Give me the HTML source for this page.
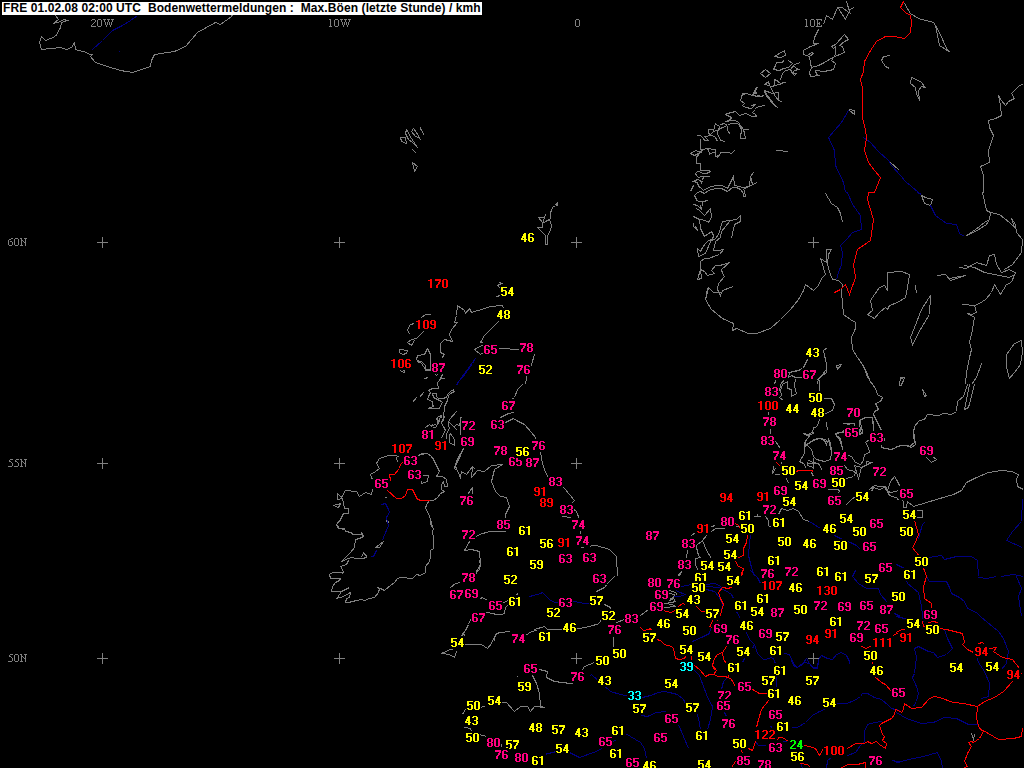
<!DOCTYPE html>
<html><head><meta charset="utf-8"><style>
html,body{margin:0;padding:0;background:#000;width:1024px;height:768px;overflow:hidden;position:relative}
.title{position:absolute;left:2px;top:2px;width:480px;height:13px;background:#fff;color:#000;font-family:"Liberation Sans",sans-serif;font-weight:bold;font-size:12px;letter-spacing:0.09px;line-height:13px;white-space:pre;padding-left:1px;box-sizing:border-box}
.lab{position:absolute;color:#808080;font-family:"Liberation Serif",serif;font-size:11px;line-height:12px;white-space:pre}
</style></head><body>
<svg width="1024" height="768" viewBox="0 0 1024 768" style="position:absolute;left:0;top:0" shape-rendering="crispEdges"><path fill="#808080" d="M97 242h11v1h-11z M102 237h1v11h-1z M97 463h11v1h-11z M102 458h1v11h-1z M97 658h11v1h-11z M102 653h1v11h-1z M334 242h11v1h-11z M339 237h1v11h-1z M334 463h11v1h-11z M339 458h1v11h-1z M334 658h11v1h-11z M339 653h1v11h-1z M571 242h11v1h-11z M576 237h1v11h-1z M571 463h11v1h-11z M576 458h1v11h-1z M571 658h11v1h-11z M576 653h1v11h-1z M808 242h11v1h-11z M813 237h1v11h-1z M808 463h11v1h-11z M813 458h1v11h-1z M808 658h11v1h-11z M813 653h1v11h-1z"/><polyline fill="none" stroke="#808080" stroke-width="1" points="55.5,15.5 58.5,19.5 53.5,23.5 60.5,21.5 63.5,19.5 67.5,20.5 61.5,22.5 60.5,27.5 55.5,36.5 45.5,40.5 41.5,36.5 39.5,42.5 41.5,49.5 60.5,47.5 66.5,49.5 71.5,47.5 74.5,42.5 75.5,49.5 86.5,52.5 89.5,54.5 92.5,54.5 90.5,56.5 95.5,62.5 107.5,66.5 120.5,70.5 132.5,72.5 150.5,66.5 151.5,60.5 154.5,54.5 174.5,51.5 185.5,46.5 197.5,32.5 215.5,22.5 220.5,24.5 231.5,16.5 232.5,14.5 237.5,2.5"/><polyline fill="none" stroke="#808080" stroke-width="1" points="400.5,137.5 405.5,137.5 406.5,143.5 401.5,141.5 400.5,137.5"/><polyline fill="none" stroke="#808080" stroke-width="1" points="406.5,129.5 405.5,133.5 408.5,139.5 412.5,142.5 417.5,147.5 411.5,138.5 406.5,129.5"/><polyline fill="none" stroke="#808080" stroke-width="1" points="413.5,128.5 411.5,131.5 415.5,136.5 418.5,137.5 420.5,139.5 416.5,132.5 413.5,128.5"/><polyline fill="none" stroke="#808080" stroke-width="1" points="420.5,126.5 420.5,128.5 424.5,135.5"/><polyline fill="none" stroke="#808080" stroke-width="1" points="412.5,149.5 416.5,153.5"/><polyline fill="none" stroke="#808080" stroke-width="1" points="412.5,162.5 417.5,166.5 414.5,171.5 412.5,162.5"/><polyline fill="none" stroke="#808080" stroke-width="1" points="904.5,3.5 910.5,13.5 918.5,18.5 933.5,22.5 935.5,25.5 939.5,32.5 946.5,48.5 950.5,52.5"/><polyline fill="none" stroke="#808080" stroke-width="1" points="935.5,25.5 939.5,45.5 950.5,52.5"/><polyline fill="none" stroke="#808080" stroke-width="1" points="890.5,55.5 883.5,56.5 881.5,60.5 885.5,66.5 889.5,68.5"/><polyline fill="none" stroke="#808080" stroke-width="1" points="911.5,77.5 910.5,83.5 915.5,87.5 916.5,93.5 919.5,100.5 918.5,90.5 921.5,86.5 925.5,87.5 920.5,81.5 911.5,77.5"/><polyline fill="none" stroke="#808080" stroke-width="1" points="1023.5,83.5 1018.5,86.5 1011.5,93.5 1014.5,98.5 1008.5,101.5 1005.5,105.5 1001.5,100.5 998.5,95.5 1000.5,105.5 1001.5,115.5 995.5,118.5 988.5,120.5 989.5,127.5 993.5,135.5 988.5,150.5 989.5,162.5 980.5,166.5 983.5,175.5 983.5,192.5"/><polyline fill="none" stroke="#808080" stroke-width="1" points="849.5,109.5 854.5,110.5 854.5,114.5 849.5,110.5"/><polyline fill="none" stroke="#808080" stroke-width="1" points="890.5,162.5 899.5,170.5"/><polyline fill="none" stroke="#808080" stroke-width="1" points="776.5,150.5 788.5,151.5"/><polyline fill="none" stroke="#808080" stroke-width="1" points="499.5,282.5 501.5,283.5 497.5,285.5 500.5,288.5"/><polyline fill="none" stroke="#808080" stroke-width="1" points="496.5,296.5 500.5,295.5"/><polyline fill="none" stroke="#808080" stroke-width="1" points="457.5,305.5 464.5,310.5 465.5,313.5 469.5,308.5 471.5,312.5 484.5,308.5 490.5,306.5 502.5,305.5 503.5,308.5"/><polyline fill="none" stroke="#808080" stroke-width="1" points="457.5,305.5 456.5,315.5 454.5,322.5 457.5,322.5 451.5,329.5 449.5,334.5 452.5,341.5 444.5,339.5 440.5,343.5 440.5,352.5 444.5,354.5 441.5,358.5"/><polyline fill="none" stroke="#808080" stroke-width="1" points="498.5,321.5 491.5,328.5 484.5,335.5 480.5,342.5 485.5,343.5 474.5,349.5 480.5,354.5 483.5,352.5"/><polyline fill="none" stroke="#808080" stroke-width="1" points="499.5,348.5 519.5,349.5"/><polyline fill="none" stroke="#808080" stroke-width="1" points="534.5,354.5 531.5,364.5 526.5,377.5 525.5,384.5"/><polyline fill="none" stroke="#808080" stroke-width="1" points="430.5,314.5 425.5,314.5 421.5,317.5 424.5,330.5 416.5,338.5 411.5,339.5 407.5,342.5 411.5,345.5 414.5,340.5"/><polyline fill="none" stroke="#808080" stroke-width="1" points="409.5,334.5 407.5,329.5 410.5,324.5 414.5,323.5"/><polyline fill="none" stroke="#808080" stroke-width="1" points="399.5,349.5 407.5,350.5 406.5,353.5 402.5,354.5 399.5,352.5 399.5,349.5"/><polyline fill="none" stroke="#808080" stroke-width="1" points="427.5,348.5 424.5,354.5 417.5,355.5 416.5,359.5 421.5,363.5 425.5,369.5 430.5,369.5 430.5,354.5 427.5,348.5"/><polyline fill="none" stroke="#808080" stroke-width="1" points="707.5,288.5 705.5,299.5 711.5,309.5 722.5,318.5 733.5,323.5 732.5,330.5 736.5,328.5 748.5,333.5 756.5,333.5 770.5,328.5 780.5,319.5 790.5,309.5 798.5,299.5 803.5,290.5 805.5,284.5 813.5,290.5 818.5,285.5 821.5,278.5 825.5,274.5"/><polyline fill="none" stroke="#808080" stroke-width="1" points="825.5,274.5 822.5,264.5 820.5,258.5 826.5,262.5 826.5,249.5 831.5,249.5 828.5,254.5 827.5,264.5 830.5,274.5 832.5,279.5 838.5,280.5 842.5,284.5"/><polyline fill="none" stroke="#808080" stroke-width="1" points="842.5,284.5 841.5,292.5 842.5,302.5 843.5,314.5 850.5,319.5 855.5,322.5 855.5,328.5 851.5,337.5 852.5,349.5 857.5,357.5 862.5,364.5 867.5,374.5 871.5,384.5"/><polyline fill="none" stroke="#808080" stroke-width="1" points="825.5,193.5 831.5,203.5 837.5,207.5 840.5,213.5 842.5,222.5"/><polyline fill="none" stroke="#808080" stroke-width="1" points="836.5,365.5 841.5,364.5 837.5,369.5 836.5,365.5"/><polyline fill="none" stroke="#808080" stroke-width="1" points="827.5,347.5 823.5,350.5 826.5,364.5 826.5,372.5 818.5,378.5 817.5,384.5"/><polyline fill="none" stroke="#808080" stroke-width="1" points="807.5,359.5 803.5,367.5 800.5,369.5 790.5,372.5 787.5,377.5"/><polyline fill="none" stroke="#808080" stroke-width="1" points="748.5,93.5 742.5,94.5 740.5,100.5 744.5,103.5 742.5,105.5 745.5,107.5 751.5,108.5 755.5,104.5 751.5,105.5"/><polyline fill="none" stroke="#808080" stroke-width="1" points="823.5,24.5 826.5,15.5 832.5,19.5 837.5,7.5 842.5,7.5 848.5,12.5 845.5,19.5 838.5,8.5"/><polyline fill="none" stroke="#808080" stroke-width="1" points="846.5,1.5 850.5,14.5"/><polyline fill="none" stroke="#808080" stroke-width="1" points="849.5,9.5 854.5,7.5"/><polyline fill="none" stroke="#808080" stroke-width="1" points="818.5,29.5 814.5,37.5 813.5,43.5 818.5,43.5 810.5,46.5 803.5,50.5 803.5,54.5 809.5,56.5 813.5,53.5 811.5,52.5 807.5,55.5"/><polyline fill="none" stroke="#808080" stroke-width="1" points="809.5,56.5 810.5,63.5 811.5,67.5 818.5,65.5 824.5,62.5 832.5,57.5 844.5,52.5 842.5,46.5 839.5,45.5 844.5,41.5 848.5,39.5 844.5,34.5 835.5,44.5 831.5,46.5 833.5,48.5 835.5,46.5 835.5,54.5 831.5,60.5 835.5,63.5 833.5,69.5 829.5,70.5 823.5,71.5 815.5,70.5 816.5,74.5 819.5,75.5 810.5,76.5 809.5,72.5 811.5,67.5"/><polyline fill="none" stroke="#808080" stroke-width="1" points="774.5,56.5 784.5,50.5 785.5,55.5 780.5,57.5 774.5,56.5"/><polyline fill="none" stroke="#808080" stroke-width="1" points="740.5,100.5 742.5,93.5 746.5,93.5 752.5,95.5 756.5,87.5 755.5,92.5 751.5,95.5 759.5,96.5 764.5,95.5"/><polyline fill="none" stroke="#808080" stroke-width="1" points="693.5,204.5 697.5,205.5 701.5,209.5 700.5,205.5"/><polyline fill="none" stroke="#808080" stroke-width="1" points="693.5,216.5 699.5,219.5 705.5,220.5 708.5,222.5 711.5,217.5 710.5,208.5 704.5,215.5 699.5,210.5 696.5,208.5"/><polyline fill="none" stroke="#808080" stroke-width="1" points="693.5,222.5 693.5,226.5 697.5,230.5 695.5,226.5"/><polyline fill="none" stroke="#808080" stroke-width="1" points="699.5,219.5 700.5,228.5 704.5,236.5 711.5,231.5 713.5,235.5 712.5,239.5 708.5,240.5 705.5,243.5 702.5,247.5 700.5,251.5 697.5,248.5 698.5,256.5 705.5,253.5 710.5,241.5 715.5,238.5 718.5,234.5 722.5,221.5 729.5,220.5 736.5,219.5 740.5,215.5 740.5,221.5 734.5,224.5 731.5,238.5"/><polyline fill="none" stroke="#808080" stroke-width="1" points="729.5,221.5 721.5,231.5 720.5,237.5 715.5,241.5 713.5,250.5 718.5,250.5 723.5,249.5 719.5,254.5 708.5,258.5 704.5,258.5 700.5,261.5 700.5,269.5 697.5,279.5 701.5,278.5 700.5,269.5 704.5,271.5 707.5,275.5 714.5,273.5 711.5,270.5 715.5,265.5 719.5,265.5 723.5,264.5 729.5,262.5 721.5,269.5 722.5,273.5 724.5,276.5 718.5,283.5 717.5,289.5 720.5,295.5 722.5,290.5 733.5,286.5"/><polyline fill="none" stroke="#808080" stroke-width="1" points="708.5,287.5 705.5,300.5"/><polyline fill="none" stroke="#808080" stroke-width="1" points="708.5,287.5 713.5,292.5 721.5,292.5"/><polyline fill="none" stroke="#808080" stroke-width="1" points="417.5,360.5 418.5,362.5 421.5,361.5 422.5,362.5 425.5,365.5 425.5,370.5 430.5,370.5"/><polyline fill="none" stroke="#808080" stroke-width="1" points="430.5,360.5 430.5,362.5"/><polyline fill="none" stroke="#808080" stroke-width="1" points="400.5,370.5 401.5,371.5 404.5,370.5 404.5,372.5 402.5,372.5"/><polyline fill="none" stroke="#808080" stroke-width="1" points="424.5,378.5 428.5,377.5"/><polyline fill="none" stroke="#808080" stroke-width="1" points="435.5,374.5 436.5,375.5 437.5,374.5"/><polyline fill="none" stroke="#808080" stroke-width="1" points="442.5,374.5 441.5,376.5 440.5,378.5 444.5,378.5"/><polyline fill="none" stroke="#808080" stroke-width="1" points="440.5,378.5 439.5,380.5 437.5,382.5 437.5,385.5 438.5,386.5 438.5,388.5 432.5,388.5 430.5,389.5 428.5,390.5 430.5,392.5 430.5,392.5 428.5,396.5 427.5,399.5 432.5,401.5 432.5,404.5 433.5,406.5 430.5,407.5 428.5,408.5 430.5,408.5 439.5,408.5 440.5,405.5 442.5,402.5 441.5,401.5 437.5,399.5 435.5,398.5 433.5,397.5 432.5,393.5 436.5,393.5 436.5,396.5 438.5,398.5 442.5,398.5 446.5,397.5 447.5,394.5 450.5,391.5 453.5,389.5 453.5,391.5 454.5,391.5 450.5,393.5 448.5,395.5 447.5,400.5 444.5,406.5 444.5,410.5 443.5,413.5 443.5,420.5"/><polyline fill="none" stroke="#808080" stroke-width="1" points="436.5,419.5 438.5,416.5 441.5,415.5 441.5,417.5"/><polyline fill="none" stroke="#808080" stroke-width="1" points="456.5,411.5 453.5,414.5 450.5,418.5"/><polyline fill="none" stroke="#808080" stroke-width="1" points="460.5,417.5 461.5,418.5"/><polyline fill="none" stroke="#808080" stroke-width="1" points="423.5,392.5 419.5,397.5"/><polyline fill="none" stroke="#808080" stroke-width="1" points="416.5,397.5 412.5,402.5"/><polyline fill="none" stroke="#808080" stroke-width="1" points="444.5,410.5 443.5,413.5 444.5,417.5 442.5,419.5 441.5,423.5 443.5,426.5 445.5,430.5 443.5,433.5 441.5,438.5"/><polyline fill="none" stroke="#808080" stroke-width="1" points="440.5,415.5 437.5,417.5 436.5,419.5 438.5,420.5 436.5,423.5 433.5,425.5 432.5,424.5 431.5,426.5 429.5,424.5 425.5,427.5"/><polyline fill="none" stroke="#808080" stroke-width="1" points="440.5,415.5 439.5,420.5 437.5,424.5 435.5,427.5 432.5,427.5"/><polyline fill="none" stroke="#808080" stroke-width="1" points="456.5,411.5 450.5,418.5 448.5,421.5 448.5,424.5 449.5,428.5 446.5,433.5 446.5,438.5"/><polyline fill="none" stroke="#808080" stroke-width="1" points="448.5,421.5 453.5,426.5 457.5,430.5"/><polyline fill="none" stroke="#808080" stroke-width="1" points="453.5,427.5 456.5,424.5 459.5,425.5 460.5,421.5 460.5,417.5 461.5,417.5"/><polyline fill="none" stroke="#808080" stroke-width="1" points="460.5,421.5 460.5,435.5"/><polyline fill="none" stroke="#808080" stroke-width="1" points="450.5,433.5 449.5,435.5 449.5,442.5 454.5,445.5 454.5,439.5 450.5,433.5"/><polyline fill="none" stroke="#808080" stroke-width="1" points="463.5,448.5 459.5,455.5 456.5,461.5 454.5,467.5 455.5,470.5"/><polyline fill="none" stroke="#808080" stroke-width="1" points="418.5,455.5 422.5,453.5 427.5,453.5 431.5,456.5 435.5,463.5 438.5,470.5"/><polyline fill="none" stroke="#808080" stroke-width="1" points="472.5,466.5 475.5,469.5"/><polyline fill="none" stroke="#808080" stroke-width="1" points="522.5,384.5 517.5,389.5 514.5,397.5 506.5,402.5"/><polyline fill="none" stroke="#808080" stroke-width="1" points="500.5,417.5 508.5,413.5 514.5,412.5"/><polyline fill="none" stroke="#808080" stroke-width="1" points="505.5,422.5 513.5,418.5 516.5,420.5 522.5,423.5 524.5,424.5 531.5,432.5 535.5,437.5 540.5,449.5 541.5,459.5 544.5,469.5 547.5,476.5 559.5,482.5 569.5,494.5 574.5,500.5 569.5,506.5 576.5,511.5 579.5,519.5 581.5,527.5 579.5,539.5 581.5,547.5 586.5,546.5 596.5,545.5 609.5,549.5 616.5,556.5 617.5,576.5"/><polyline fill="none" stroke="#808080" stroke-width="1" points="562.5,516.5 571.5,517.5"/><polyline fill="none" stroke="#808080" stroke-width="1" points="464.5,446.5 455.5,466.5 460.5,477.5 461.5,471.5 466.5,474.5 472.5,466.5 471.5,477.5 477.5,470.5 484.5,471.5 491.5,465.5 502.5,464.5 494.5,469.5 491.5,481.5 495.5,491.5 500.5,496.5 506.5,497.5 509.5,506.5 505.5,514.5 506.5,520.5"/><polyline fill="none" stroke="#808080" stroke-width="1" points="511.5,530.5 501.5,531.5 489.5,531.5 479.5,534.5 476.5,536.5"/><polyline fill="none" stroke="#808080" stroke-width="1" points="472.5,536.5 464.5,550.5 471.5,549.5 479.5,551.5 480.5,564.5 476.5,571.5 475.5,576.5"/><polyline fill="none" stroke="#808080" stroke-width="1" points="472.5,487.5 469.5,491.5 467.5,495.5 472.5,494.5 472.5,487.5"/><polyline fill="none" stroke="#808080" stroke-width="1" points="397.5,462.5 396.5,457.5 399.5,455.5"/><polyline fill="none" stroke="#808080" stroke-width="1" points="396.5,455.5 388.5,455.5 379.5,458.5 376.5,463.5 379.5,468.5 375.5,471.5 370.5,474.5 371.5,477.5 372.5,479.5"/><polyline fill="none" stroke="#808080" stroke-width="1" points="372.5,489.5 371.5,494.5 365.5,492.5 359.5,496.5 356.5,491.5 345.5,490.5 341.5,497.5 337.5,493.5 337.5,499.5 342.5,498.5 344.5,508.5 348.5,508.5 348.5,513.5 343.5,513.5 340.5,519.5 336.5,524.5 339.5,528.5 344.5,529.5"/><polyline fill="none" stroke="#808080" stroke-width="1" points="333.5,505.5 340.5,503.5 338.5,507.5 333.5,505.5"/><polyline fill="none" stroke="#808080" stroke-width="1" points="417.5,455.5 426.5,453.5 429.5,454.5 433.5,458.5 436.5,465.5 439.5,471.5 436.5,476.5 442.5,476.5 446.5,479.5 447.5,486.5 444.5,486.5 443.5,481.5 441.5,484.5 441.5,489.5 444.5,491.5 440.5,493.5 437.5,497.5 433.5,500.5 429.5,500.5 426.5,504.5 425.5,508.5 428.5,513.5 430.5,519.5 432.5,526.5 430.5,524.5 430.5,520.5"/><polyline fill="none" stroke="#808080" stroke-width="1" points="422.5,475.5 428.5,475.5 427.5,481.5 421.5,483.5 421.5,480.5"/><polyline fill="none" stroke="#808080" stroke-width="1" points="384.5,497.5 386.5,497.5"/><polyline fill="none" stroke="#808080" stroke-width="1" points="340.5,520.5 336.5,524.5 338.5,528.5 344.5,528.5 345.5,531.5 351.5,532.5 352.5,534.5 362.5,534.5 361.5,532.5 363.5,536.5 359.5,538.5 355.5,539.5 354.5,547.5 350.5,552.5 345.5,557.5 341.5,561.5 348.5,558.5 351.5,557.5 356.5,558.5 361.5,558.5 367.5,557.5"/><polyline fill="none" stroke="#808080" stroke-width="1" points="361.5,557.5 363.5,552.5 367.5,557.5"/><polyline fill="none" stroke="#808080" stroke-width="1" points="348.5,560.5 346.5,564.5 340.5,566.5 343.5,571.5 342.5,573.5 341.5,572.5 332.5,572.5 329.5,574.5 330.5,578.5 340.5,578.5 339.5,580.5 335.5,582.5 332.5,586.5 331.5,591.5 341.5,591.5 349.5,587.5"/><polyline fill="none" stroke="#808080" stroke-width="1" points="341.5,591.5 337.5,597.5 336.5,598.5 343.5,596.5 350.5,592.5 349.5,597.5 346.5,598.5 345.5,602.5 348.5,602.5 356.5,600.5 361.5,599.5 364.5,600.5 369.5,598.5 374.5,597.5 378.5,592.5 379.5,588.5 377.5,587.5 380.5,588.5 384.5,590.5 390.5,585.5 394.5,582.5 397.5,578.5 400.5,577.5 412.5,578.5 416.5,574.5 420.5,575.5 425.5,572.5 425.5,566.5 429.5,561.5 430.5,556.5 430.5,550.5 433.5,548.5 433.5,538.5 432.5,531.5 433.5,528.5 430.5,524.5 430.5,520.5"/><polyline fill="none" stroke="#808080" stroke-width="1" points="375.5,547.5 383.5,541.5 379.5,547.5 375.5,547.5"/><polyline fill="none" stroke="#808080" stroke-width="1" points="386.5,520.5 387.5,522.5 389.5,521.5"/><polyline fill="none" stroke="#808080" stroke-width="1" points="479.5,560.5 480.5,564.5 479.5,569.5 475.5,573.5"/><polyline fill="none" stroke="#808080" stroke-width="1" points="460.5,582.5 455.5,583.5 450.5,587.5"/><polyline fill="none" stroke="#808080" stroke-width="1" points="464.5,594.5 465.5,594.5"/><polyline fill="none" stroke="#808080" stroke-width="1" points="480.5,598.5 482.5,597.5 487.5,600.5"/><polyline fill="none" stroke="#808080" stroke-width="1" points="503.5,602.5 508.5,600.5"/><polyline fill="none" stroke="#808080" stroke-width="1" points="486.5,612.5 492.5,613.5 496.5,614.5 501.5,614.5 504.5,613.5 505.5,607.5 508.5,604.5"/><polyline fill="none" stroke="#808080" stroke-width="1" points="516.5,594.5 518.5,593.5"/><polyline fill="none" stroke="#808080" stroke-width="1" points="470.5,619.5 468.5,624.5 465.5,630.5 461.5,635.5 464.5,634.5 464.5,644.5 481.5,644.5 487.5,648.5 491.5,643.5 494.5,636.5 494.5,640.5 495.5,634.5 499.5,632.5 510.5,631.5"/><polyline fill="none" stroke="#808080" stroke-width="1" points="525.5,635.5 531.5,631.5 537.5,630.5"/><polyline fill="none" stroke="#808080" stroke-width="1" points="441.5,653.5 450.5,649.5 462.5,646.5"/><polyline fill="none" stroke="#808080" stroke-width="1" points="441.5,653.5 449.5,654.5 454.5,657.5 456.5,651.5"/><polyline fill="none" stroke="#808080" stroke-width="1" points="534.5,629.5 544.5,626.5 547.5,629.5 561.5,629.5 579.5,628.5 589.5,626.5 599.5,623.5 601.5,618.5 604.5,613.5 609.5,611.5 610.5,607.5 604.5,604.5 594.5,603.5"/><polyline fill="none" stroke="#808080" stroke-width="1" points="596.5,591.5 604.5,587.5 607.5,583.5 612.5,578.5 614.5,576.5"/><polyline fill="none" stroke="#808080" stroke-width="1" points="616.5,622.5 624.5,619.5"/><polyline fill="none" stroke="#808080" stroke-width="1" points="613.5,636.5 613.5,648.5"/><polyline fill="none" stroke="#808080" stroke-width="1" points="594.5,662.5 584.5,666.5 581.5,671.5"/><polyline fill="none" stroke="#808080" stroke-width="1" points="539.5,669.5 547.5,671.5 546.5,677.5 554.5,681.5 570.5,683.5 574.5,682.5 581.5,674.5"/><polyline fill="none" stroke="#808080" stroke-width="1" points="532.5,675.5 536.5,683.5 539.5,693.5 540.5,706.5 544.5,707.5 534.5,706.5 530.5,711.5 527.5,706.5 520.5,706.5 514.5,711.5 506.5,702.5 499.5,702.5"/><polyline fill="none" stroke="#808080" stroke-width="1" points="485.5,706.5 465.5,709.5 462.5,714.5"/><polyline fill="none" stroke="#808080" stroke-width="1" points="516.5,676.5 517.5,676.5"/><polyline fill="none" stroke="#808080" stroke-width="1" points="464.5,727.5 470.5,728.5 471.5,731.5 479.5,734.5 486.5,736.5"/><polyline fill="none" stroke="#808080" stroke-width="1" points="499.5,741.5 501.5,744.5 500.5,748.5"/><polyline fill="none" stroke="#808080" stroke-width="1" points="788.5,372.5 793.5,371.5 800.5,370.5"/><polyline fill="none" stroke="#808080" stroke-width="1" points="788.5,377.5 791.5,375.5 795.5,377.5 799.5,377.5 801.5,377.5"/><polyline fill="none" stroke="#808080" stroke-width="1" points="795.5,379.5 794.5,385.5 796.5,393.5 791.5,396.5 791.5,389.5 787.5,388.5 787.5,381.5 782.5,384.5 780.5,390.5 781.5,395.5 779.5,397.5 783.5,400.5"/><polyline fill="none" stroke="#808080" stroke-width="1" points="775.5,380.5 774.5,384.5"/><polyline fill="none" stroke="#808080" stroke-width="1" points="784.5,379.5 780.5,384.5 779.5,391.5"/><polyline fill="none" stroke="#808080" stroke-width="1" points="825.5,370.5 819.5,378.5 817.5,379.5 819.5,380.5 819.5,390.5"/><polyline fill="none" stroke="#808080" stroke-width="1" points="823.5,398.5 829.5,398.5 831.5,398.5 834.5,404.5 832.5,410.5 825.5,413.5"/><polyline fill="none" stroke="#808080" stroke-width="1" points="768.5,411.5 768.5,414.5"/><polyline fill="none" stroke="#808080" stroke-width="1" points="770.5,428.5 770.5,433.5"/><polyline fill="none" stroke="#808080" stroke-width="1" points="775.5,441.5 780.5,448.5"/><polyline fill="none" stroke="#808080" stroke-width="1" points="819.5,419.5 817.5,425.5 815.5,427.5 813.5,427.5 812.5,432.5 807.5,434.5 803.5,433.5 809.5,436.5 806.5,439.5 804.5,442.5 804.5,450.5"/><polyline fill="none" stroke="#808080" stroke-width="1" points="826.5,422.5 827.5,430.5"/><polyline fill="none" stroke="#808080" stroke-width="1" points="806.5,445.5 813.5,439.5 819.5,438.5 825.5,439.5 827.5,442.5 828.5,439.5 830.5,443.5 831.5,450.5"/><polyline fill="none" stroke="#808080" stroke-width="1" points="843.5,423.5 850.5,424.5"/><polyline fill="none" stroke="#808080" stroke-width="1" points="844.5,432.5 839.5,432.5 835.5,433.5 836.5,436.5 839.5,438.5 841.5,442.5 842.5,450.5"/><polyline fill="none" stroke="#808080" stroke-width="1" points="803.5,433.5 807.5,435.5 813.5,433.5 812.5,430.5"/><polyline fill="none" stroke="#808080" stroke-width="1" points="809.5,435.5 805.5,441.5 804.5,453.5 799.5,461.5 803.5,463.5 806.5,468.5"/><polyline fill="none" stroke="#808080" stroke-width="1" points="806.5,444.5 813.5,440.5 819.5,438.5 824.5,440.5 826.5,444.5 828.5,439.5 831.5,452.5 830.5,459.5 824.5,461.5 816.5,459.5 813.5,456.5 811.5,449.5 806.5,444.5"/><polyline fill="none" stroke="#808080" stroke-width="1" points="808.5,460.5 813.5,462.5 818.5,463.5 822.5,470.5"/><polyline fill="none" stroke="#808080" stroke-width="1" points="807.5,461.5 807.5,465.5 813.5,467.5 813.5,463.5"/><polyline fill="none" stroke="#808080" stroke-width="1" points="811.5,472.5 813.5,476.5"/><polyline fill="none" stroke="#808080" stroke-width="1" points="781.5,461.5 781.5,464.5"/><polyline fill="none" stroke="#808080" stroke-width="1" points="773.5,466.5 772.5,473.5 775.5,468.5"/><polyline fill="none" stroke="#808080" stroke-width="1" points="774.5,474.5 779.5,474.5"/><polyline fill="none" stroke="#808080" stroke-width="1" points="786.5,478.5 788.5,483.5"/><polyline fill="none" stroke="#808080" stroke-width="1" points="835.5,433.5 842.5,432.5 843.5,430.5"/><polyline fill="none" stroke="#808080" stroke-width="1" points="835.5,433.5 839.5,439.5 842.5,447.5"/><polyline fill="none" stroke="#808080" stroke-width="1" points="827.5,489.5 838.5,489.5 839.5,492.5"/><polyline fill="none" stroke="#808080" stroke-width="1" points="691.5,535.5 695.5,532.5"/><polyline fill="none" stroke="#808080" stroke-width="1" points="711.5,526.5 715.5,525.5"/><polyline fill="none" stroke="#808080" stroke-width="1" points="711.5,531.5 715.5,528.5 722.5,528.5 726.5,527.5"/><polyline fill="none" stroke="#808080" stroke-width="1" points="706.5,535.5 702.5,540.5 696.5,545.5 696.5,547.5 698.5,555.5 700.5,557.5 695.5,558.5 695.5,565.5 698.5,570.5"/><polyline fill="none" stroke="#808080" stroke-width="1" points="702.5,540.5 706.5,550.5 711.5,558.5"/><polyline fill="none" stroke="#808080" stroke-width="1" points="687.5,550.5 686.5,558.5"/><polyline fill="none" stroke="#808080" stroke-width="1" points="681.5,571.5 679.5,576.5"/><polyline fill="none" stroke="#808080" stroke-width="1" points="737.5,520.5 738.5,520.5"/><polyline fill="none" stroke="#808080" stroke-width="1" points="735.5,526.5 738.5,526.5"/><polyline fill="none" stroke="#808080" stroke-width="1" points="753.5,516.5 757.5,516.5 760.5,516.5"/><polyline fill="none" stroke="#808080" stroke-width="1" points="757.5,513.5 757.5,516.5"/><polyline fill="none" stroke="#808080" stroke-width="1" points="922.5,389.5 924.5,396.5 926.5,395.5 922.5,389.5"/><polyline fill="none" stroke="#808080" stroke-width="1" points="967.5,384.5 963.5,396.5 957.5,401.5 956.5,411.5 951.5,414.5 943.5,413.5 938.5,415.5 927.5,414.5 924.5,419.5 919.5,420.5 914.5,426.5 913.5,434.5 914.5,442.5 909.5,446.5 903.5,445.5 896.5,446.5"/><polyline fill="none" stroke="#808080" stroke-width="1" points="969.5,384.5 964.5,409.5 968.5,407.5 974.5,384.5"/><polyline fill="none" stroke="#808080" stroke-width="1" points="926.5,457.5 931.5,462.5 936.5,459.5 932.5,456.5"/><polyline fill="none" stroke="#808080" stroke-width="1" points="896.5,479.5 899.5,485.5"/><polyline fill="none" stroke="#808080" stroke-width="1" points="896.5,499.5 901.5,499.5 903.5,501.5 903.5,507.5 906.5,507.5 907.5,501.5 913.5,506.5 936.5,499.5 953.5,494.5 961.5,490.5 966.5,482.5 976.5,477.5 988.5,472.5 1001.5,470.5 1011.5,471.5 1018.5,474.5 1016.5,479.5 1017.5,486.5 1023.5,489.5"/><polyline fill="none" stroke="#808080" stroke-width="1" points="916.5,510.5 922.5,510.5 922.5,517.5 916.5,517.5"/><polyline fill="none" stroke="#808080" stroke-width="1" points="921.5,195.5 924.5,203.5 930.5,205.5 932.5,199.5 925.5,197.5 921.5,195.5"/><polyline fill="none" stroke="#808080" stroke-width="1" points="966.5,235.5 975.5,229.5 984.5,222.5 989.5,219.5 986.5,224.5 975.5,231.5 966.5,235.5"/><polyline fill="none" stroke="#808080" stroke-width="1" points="982.5,192.5 986.5,210.5 990.5,212.5 989.5,219.5"/><polyline fill="none" stroke="#808080" stroke-width="1" points="990.5,212.5 999.5,214.5 1009.5,222.5 1014.5,227.5 1011.5,218.5 1015.5,224.5 1016.5,232.5 1022.5,239.5 1021.5,252.5 1012.5,264.5 1004.5,269.5"/><polyline fill="none" stroke="#808080" stroke-width="1" points="959.5,267.5 966.5,268.5 976.5,262.5 986.5,265.5 989.5,255.5 994.5,254.5 996.5,264.5 1001.5,272.5 1009.5,269.5 1014.5,272.5 1016.5,273.5"/><polyline fill="none" stroke="#808080" stroke-width="1" points="964.5,265.5 974.5,267.5 984.5,272.5 999.5,275.5 1009.5,277.5 1014.5,274.5 1011.5,282.5 1006.5,284.5 1000.5,294.5 994.5,284.5 991.5,292.5 985.5,299.5 979.5,303.5 974.5,305.5 962.5,304.5"/><polyline fill="none" stroke="#808080" stroke-width="1" points="937.5,275.5 945.5,274.5 950.5,280.5 965.5,275.5 949.5,278.5"/><polyline fill="none" stroke="#808080" stroke-width="1" points="974.5,305.5 976.5,312.5 971.5,314.5 967.5,313.5 974.5,317.5 972.5,329.5 969.5,342.5 971.5,349.5 969.5,357.5 966.5,372.5 965.5,384.5"/><polyline fill="none" stroke="#808080" stroke-width="1" points="981.5,363.5 976.5,377.5 971.5,384.5"/><polyline fill="none" stroke="#808080" stroke-width="1" points="1021.5,340.5 1014.5,343.5 1006.5,354.5 1006.5,367.5 1009.5,378.5 1014.5,372.5 1020.5,364.5 1022.5,352.5 1021.5,340.5"/><polyline fill="none" stroke="#808080" stroke-width="1" points="887.5,272.5 901.5,271.5 909.5,274.5 907.5,287.5 905.5,297.5 897.5,302.5 889.5,305.5 887.5,309.5 885.5,307.5 879.5,312.5 874.5,318.5 867.5,314.5 872.5,310.5 870.5,300.5 874.5,294.5 879.5,287.5 884.5,285.5 887.5,290.5 887.5,282.5 887.5,272.5"/><polyline fill="none" stroke="#808080" stroke-width="1" points="915.5,285.5 916.5,293.5"/><polyline fill="none" stroke="#808080" stroke-width="1" points="930.5,295.5 921.5,309.5 916.5,322.5 910.5,337.5 912.5,344.5 921.5,327.5 929.5,314.5 930.5,295.5"/><polyline fill="none" stroke="#808080" stroke-width="1" points="900.5,378.5 904.5,377.5 901.5,384.5"/><polyline fill="none" stroke="#808080" stroke-width="1" points="681.5,571.5 677.5,576.5"/><polyline fill="none" stroke="#808080" stroke-width="1" points="669.5,590.5 675.5,592.5 677.5,595.5"/><polyline fill="none" stroke="#808080" stroke-width="1" points="669.5,593.5 674.5,594.5 673.5,597.5 670.5,598.5"/><polyline fill="none" stroke="#808080" stroke-width="1" points="669.5,600.5 673.5,598.5 675.5,601.5 671.5,602.5 664.5,603.5 672.5,604.5 675.5,606.5 664.5,607.5"/><polyline fill="none" stroke="#808080" stroke-width="1" points="648.5,609.5 640.5,615.5"/><polyline fill="none" stroke="#808080" stroke-width="1" points="804.5,745.5 805.5,746.5"/><polyline fill="none" stroke="#808080" stroke-width="1" points="971.5,733.5 973.5,739.5 974.5,734.5"/><polyline fill="none" stroke="#808080" stroke-width="1" points="865.5,370.5 866.5,375.5 870.5,381.5 875.5,388.5 877.5,394.5 882.5,397.5 880.5,401.5 875.5,403.5 878.5,409.5 874.5,411.5 873.5,414.5 877.5,422.5 881.5,430.5"/><polyline fill="none" stroke="#808080" stroke-width="1" points="900.5,377.5 904.5,377.5 901.5,385.5 899.5,385.5 900.5,377.5"/><polyline fill="none" stroke="#808080" stroke-width="1" points="860.5,432.5 859.5,420.5 865.5,417.5 872.5,417.5 873.5,430.5"/><polyline fill="none" stroke="#808080" stroke-width="1" points="860.5,429.5 862.5,429.5 862.5,432.5 859.5,433.5"/><polyline fill="none" stroke="#808080" stroke-width="1" points="844.5,423.5 854.5,423.5 854.5,425.5"/><polyline fill="none" stroke="#808080" stroke-width="1" points="860.5,420.5 861.5,429.5 859.5,429.5 859.5,434.5 862.5,433.5 862.5,429.5"/><polyline fill="none" stroke="#808080" stroke-width="1" points="873.5,420.5 873.5,430.5"/><polyline fill="none" stroke="#808080" stroke-width="1" points="876.5,420.5 881.5,430.5"/><polyline fill="none" stroke="#808080" stroke-width="1" points="884.5,437.5 884.5,440.5"/><polyline fill="none" stroke="#808080" stroke-width="1" points="836.5,433.5 843.5,431.5"/><polyline fill="none" stroke="#808080" stroke-width="1" points="836.5,435.5 840.5,438.5 841.5,444.5 842.5,449.5"/><polyline fill="none" stroke="#808080" stroke-width="1" points="848.5,455.5 851.5,456.5 855.5,462.5 860.5,464.5 863.5,460.5 864.5,454.5 869.5,452.5 868.5,447.5 865.5,442.5 869.5,439.5"/><polyline fill="none" stroke="#808080" stroke-width="1" points="844.5,465.5 847.5,469.5 854.5,471.5 855.5,473.5 853.5,476.5 846.5,478.5"/><polyline fill="none" stroke="#808080" stroke-width="1" points="854.5,465.5 858.5,478.5 861.5,467.5 867.5,464.5 871.5,462.5 866.5,461.5 866.5,464.5"/><polyline fill="none" stroke="#808080" stroke-width="1" points="854.5,465.5 861.5,467.5"/><polyline fill="none" stroke="#808080" stroke-width="1" points="881.5,444.5 881.5,447.5 885.5,448.5 891.5,449.5 900.5,445.5 907.5,445.5 911.5,447.5 915.5,444.5 913.5,430.5 915.5,424.5"/><polyline fill="none" stroke="#808080" stroke-width="1" points="838.5,488.5 839.5,491.5 837.5,493.5"/><polyline fill="none" stroke="#808080" stroke-width="1" points="851.5,499.5 854.5,497.5"/><polyline fill="none" stroke="#808080" stroke-width="1" points="869.5,489.5 874.5,485.5 879.5,486.5 885.5,486.5 887.5,490.5 890.5,481.5 894.5,476.5 900.5,486.5"/><polyline fill="none" stroke="#808080" stroke-width="1" points="871.5,491.5 873.5,487.5 879.5,489.5 884.5,487.5 887.5,491.5 891.5,492.5 898.5,490.5"/><polyline fill="none" stroke="#808080" stroke-width="1" points="887.5,491.5 889.5,495.5 898.5,498.5"/><polyline fill="none" stroke="#808080" stroke-width="1" points="557.5,202.5 555.5,204.5 557.5,205.5 557.5,202.5"/><polyline fill="none" stroke="#808080" stroke-width="1" points="555.5,205.5 552.5,207.5 551.5,210.5 550.5,212.5 550.5,218.5"/><polyline fill="none" stroke="#808080" stroke-width="1" points="549.5,219.5 547.5,220.5 545.5,221.5 542.5,223.5 542.5,227.5 537.5,227.5 541.5,231.5 545.5,235.5 545.5,244.5 547.5,244.5 547.5,235.5 550.5,230.5 551.5,225.5 549.5,219.5"/><polyline fill="none" stroke="#808080" stroke-width="1" points="538.5,217.5 544.5,217.5 545.5,214.5 542.5,223.5"/><polyline fill="none" stroke="#808080" stroke-width="1" points="538.5,217.5 542.5,222.5"/><polyline fill="none" stroke="#808080" stroke-width="1" points="778.5,514.5 781.5,508.5 787.5,510.5 793.5,508.5 798.5,511.5 803.5,519.5 809.5,521.5"/><polyline fill="none" stroke="#808080" stroke-width="1" points="845.5,505.5 850.5,500.5 853.5,497.5 856.5,497.5"/><polyline fill="none" stroke="#808080" stroke-width="1" points="765.5,516.5 768.5,520.5 768.5,525.5 771.5,527.5"/><polyline fill="none" stroke="#808080" stroke-width="1" points="725.5,114.5 727.5,113.5 731.5,112.5 735.5,111.5 739.5,115.5 745.5,113.5 748.5,114.5 751.5,116.5 756.5,116.5 755.5,114.5 752.5,112.5 754.5,110.5"/><polyline fill="none" stroke="#808080" stroke-width="1" points="725.5,121.5 733.5,120.5 735.5,120.5 738.5,122.5 740.5,125.5 743.5,129.5 744.5,133.5 745.5,138.5 740.5,138.5 740.5,133.5 741.5,133.5 741.5,129.5 739.5,125.5 737.5,123.5 731.5,123.5 728.5,124.5 727.5,125.5 722.5,127.5 718.5,129.5 717.5,131.5 717.5,133.5 720.5,140.5 725.5,141.5"/><polyline fill="none" stroke="#808080" stroke-width="1" points="743.5,129.5 748.5,129.5"/><polyline fill="none" stroke="#808080" stroke-width="1" points="725.5,114.5 729.5,116.5 731.5,117.5 730.5,119.5 725.5,121.5"/><polyline fill="none" stroke="#808080" stroke-width="1" points="727.5,125.5 727.5,130.5 730.5,134.5"/><polyline fill="none" stroke="#808080" stroke-width="1" points="720.5,124.5 724.5,123.5 727.5,125.5"/><polyline fill="none" stroke="#808080" stroke-width="1" points="715.5,123.5 716.5,124.5 719.5,126.5 719.5,127.5 717.5,129.5 714.5,131.5 712.5,129.5 708.5,129.5 708.5,131.5 709.5,135.5 712.5,135.5 715.5,137.5 717.5,141.5"/><polyline fill="none" stroke="#808080" stroke-width="1" points="709.5,135.5 713.5,131.5 715.5,123.5"/><polyline fill="none" stroke="#808080" stroke-width="1" points="696.5,135.5 700.5,135.5 703.5,138.5 704.5,140.5 708.5,140.5 704.5,136.5 712.5,135.5"/><polyline fill="none" stroke="#808080" stroke-width="1" points="700.5,138.5 700.5,149.5 703.5,149.5 706.5,148.5 708.5,149.5 709.5,154.5 712.5,152.5 715.5,152.5 715.5,156.5 719.5,155.5 720.5,152.5 728.5,152.5 731.5,153.5 734.5,150.5"/><polyline fill="none" stroke="#808080" stroke-width="1" points="706.5,148.5 715.5,149.5 715.5,152.5"/><polyline fill="none" stroke="#808080" stroke-width="1" points="690.5,153.5 695.5,150.5 698.5,151.5 700.5,152.5 694.5,155.5 690.5,153.5"/><polyline fill="none" stroke="#808080" stroke-width="1" points="703.5,149.5 698.5,153.5 696.5,157.5 696.5,160.5"/><polyline fill="none" stroke="#808080" stroke-width="1" points="698.5,155.5 696.5,157.5 696.5,163.5 700.5,163.5 700.5,170.5"/><polyline fill="none" stroke="#808080" stroke-width="1" points="700.5,170.5 709.5,170.5 710.5,171.5 706.5,173.5 702.5,173.5 699.5,171.5 697.5,171.5 695.5,173.5 696.5,175.5 698.5,177.5 701.5,176.5 709.5,176.5"/><polyline fill="none" stroke="#808080" stroke-width="1" points="703.5,176.5 702.5,180.5 701.5,182.5 700.5,180.5 697.5,179.5 693.5,181.5 697.5,182.5 698.5,186.5 700.5,187.5 703.5,190.5 708.5,187.5 715.5,185.5 722.5,185.5 727.5,188.5 733.5,176.5 734.5,185.5 743.5,187.5 749.5,186.5 750.5,176.5 753.5,172.5"/><polyline fill="none" stroke="#808080" stroke-width="1" points="750.5,176.5 752.5,184.5 757.5,182.5"/><polyline fill="none" stroke="#808080" stroke-width="1" points="744.5,188.5 747.5,187.5 752.5,184.5"/><polyline fill="none" stroke="#808080" stroke-width="1" points="690.5,191.5 693.5,185.5"/><polyline fill="none" stroke="#808080" stroke-width="1" points="697.5,201.5 694.5,195.5 697.5,192.5 700.5,191.5 704.5,193.5 708.5,190.5 715.5,188.5 721.5,188.5 727.5,191.5 732.5,187.5 736.5,187.5 740.5,189.5 743.5,193.5 743.5,196.5 745.5,196.5 744.5,190.5 743.5,189.5 744.5,188.5"/><polyline fill="none" stroke="#808080" stroke-width="1" points="697.5,201.5 702.5,201.5 708.5,200.5"/><polyline fill="none" stroke="#808080" stroke-width="1" points="702.5,201.5 702.5,205.5"/><polyline fill="none" stroke="#808080" stroke-width="1" points="715.5,155.5 717.5,157.5 719.5,155.5"/><polyline fill="none" stroke="#808080" stroke-width="1" points="764.5,90.5 765.5,94.5 769.5,99.5 773.5,104.5 777.5,107.5 773.5,103.5 770.5,99.5 766.5,94.5 764.5,90.5"/><polyline fill="none" stroke="#808080" stroke-width="1" points="764.5,90.5 772.5,93.5 777.5,92.5 778.5,92.5 778.5,97.5 777.5,99.5 773.5,93.5"/><polyline fill="none" stroke="#808080" stroke-width="1" points="777.5,99.5 779.5,100.5 782.5,102.5"/><polyline fill="none" stroke="#808080" stroke-width="1" points="770.5,86.5 772.5,86.5 774.5,85.5 779.5,84.5 783.5,82.5 785.5,82.5"/><polyline fill="none" stroke="#808080" stroke-width="1" points="770.5,86.5 773.5,93.5"/><polyline fill="none" stroke="#808080" stroke-width="1" points="774.5,85.5 774.5,79.5 778.5,81.5 779.5,83.5"/><polyline fill="none" stroke="#808080" stroke-width="1" points="764.5,84.5 768.5,81.5 769.5,85.5 764.5,84.5"/><polyline fill="none" stroke="#808080" stroke-width="1" points="760.5,73.5 765.5,69.5 770.5,73.5 765.5,77.5 760.5,73.5"/><polyline fill="none" stroke="#808080" stroke-width="1" points="780.5,80.5 781.5,75.5 783.5,72.5 785.5,70.5 790.5,69.5 792.5,73.5 796.5,73.5 794.5,75.5 792.5,73.5"/><polyline fill="none" stroke="#808080" stroke-width="1" points="794.5,66.5 796.5,68.5 798.5,69.5 794.5,70.5 792.5,73.5"/><polyline fill="none" stroke="#808080" stroke-width="1" points="790.5,69.5 794.5,64.5 800.5,62.5"/><polyline fill="none" stroke="#808080" stroke-width="1" points="773.5,69.5 775.5,65.5 776.5,62.5 782.5,62.5 783.5,60.5"/><polyline fill="none" stroke="#808080" stroke-width="1" points="773.5,69.5 779.5,70.5 783.5,68.5 788.5,67.5 792.5,63.5 788.5,60.5"/><polyline fill="none" stroke="#808080" stroke-width="1" points="755.5,96.5 758.5,95.5 761.5,96.5 764.5,95.5"/><polyline fill="none" stroke="#808080" stroke-width="1" points="757.5,87.5 755.5,90.5 755.5,93.5 757.5,92.5"/><polyline fill="none" stroke="#808080" stroke-width="1" points="755.5,108.5 758.5,106.5 765.5,105.5"/><polyline fill="none" stroke="#000080" stroke-width="1" points="92.5,49.5 102.5,40.5 112.5,30.5 122.5,25.5 130.5,20.5 137.5,15.5"/><polyline fill="none" stroke="#000080" stroke-width="1" points="119.5,51.5 120.5,52.5"/><polyline fill="none" stroke="#000080" stroke-width="1" points="848.5,110.5 841.5,122.5 828.5,137.5 834.5,150.5 835.5,165.5 843.5,182.5 845.5,192.5"/><polyline fill="none" stroke="#000080" stroke-width="1" points="863.5,137.5 870.5,142.5 878.5,151.5 888.5,160.5 891.5,165.5 900.5,175.5 905.5,181.5 911.5,186.5 918.5,192.5"/><polyline fill="none" stroke="#000080" stroke-width="1" points="475.5,358.5 456.5,384.5"/><polyline fill="none" stroke="#000080" stroke-width="1" points="845.5,192.5 847.5,192.5 852.5,204.5 860.5,215.5 861.5,229.5 852.5,232.5 847.5,238.5 840.5,245.5 842.5,252.5 841.5,264.5 838.5,272.5 836.5,279.5"/><polyline fill="none" stroke="#000080" stroke-width="1" points="474.5,360.5 472.5,363.5 467.5,370.5 462.5,377.5 458.5,381.5 456.5,385.5"/><polyline fill="none" stroke="#000080" stroke-width="1" points="381.5,504.5 385.5,503.5 388.5,509.5 389.5,512.5 386.5,517.5 387.5,522.5 388.5,525.5 383.5,537.5 382.5,540.5"/><polyline fill="none" stroke="#000080" stroke-width="1" points="376.5,550.5 373.5,556.5 370.5,556.5"/><polyline fill="none" stroke="#000080" stroke-width="1" points="529.5,596.5 533.5,595.5 540.5,593.5 542.5,592.5 549.5,599.5 554.5,602.5 574.5,601.5 584.5,603.5 589.5,603.5"/><polyline fill="none" stroke="#000080" stroke-width="1" points="589.5,676.5 591.5,674.5 601.5,683.5 610.5,691.5 620.5,694.5 629.5,696.5"/><polyline fill="none" stroke="#000080" stroke-width="1" points="544.5,754.5 556.5,751.5 569.5,752.5 579.5,757.5 596.5,751.5 616.5,739.5"/><polyline fill="none" stroke="#000080" stroke-width="1" points="625.5,733.5 640.5,742.5"/><polyline fill="none" stroke="#000080" stroke-width="1" points="750.5,535.5 749.5,542.5 748.5,555.5 751.5,567.5 754.5,576.5"/><polyline fill="none" stroke="#000080" stroke-width="1" points="924.5,522.5 922.5,524.5 919.5,534.5 918.5,539.5"/><polyline fill="none" stroke="#000080" stroke-width="1" points="928.5,557.5 941.5,555.5 944.5,559.5 956.5,556.5 971.5,556.5 977.5,560.5 978.5,576.5"/><polyline fill="none" stroke="#000080" stroke-width="1" points="1022.5,499.5 1021.5,521.5 1012.5,531.5 1006.5,540.5 1022.5,547.5"/><polyline fill="none" stroke="#000080" stroke-width="1" points="896.5,564.5 906.5,569.5 913.5,574.5"/><polyline fill="none" stroke="#000080" stroke-width="1" points="1001.5,576.5 1013.5,574.5 1023.5,576.5"/><polyline fill="none" stroke="#000080" stroke-width="1" points="917.5,192.5 921.5,194.5"/><polyline fill="none" stroke="#000080" stroke-width="1" points="930.5,205.5 935.5,215.5 946.5,223.5 956.5,224.5 959.5,233.5 964.5,236.5"/><polyline fill="none" stroke="#000080" stroke-width="1" points="681.5,586.5 686.5,585.5 691.5,584.5"/><polyline fill="none" stroke="#000080" stroke-width="1" points="673.5,596.5 679.5,596.5 685.5,594.5 677.5,591.5 675.5,589.5"/><polyline fill="none" stroke="#000080" stroke-width="1" points="706.5,584.5 714.5,583.5 719.5,585.5 722.5,588.5"/><polyline fill="none" stroke="#000080" stroke-width="1" points="706.5,586.5 718.5,587.5 725.5,590.5 731.5,594.5 733.5,598.5"/><polyline fill="none" stroke="#000080" stroke-width="1" points="706.5,589.5 714.5,591.5 719.5,597.5 722.5,603.5 721.5,613.5 718.5,617.5"/><polyline fill="none" stroke="#000080" stroke-width="1" points="710.5,628.5 709.5,633.5 701.5,637.5 692.5,641.5"/><polyline fill="none" stroke="#000080" stroke-width="1" points="736.5,611.5 740.5,618.5"/><polyline fill="none" stroke="#000080" stroke-width="1" points="746.5,632.5 749.5,639.5 754.5,644.5 757.5,653.5 763.5,659.5 770.5,658.5"/><polyline fill="none" stroke="#000080" stroke-width="1" points="752.5,648.5 754.5,644.5"/><polyline fill="none" stroke="#000080" stroke-width="1" points="744.5,658.5 742.5,662.5"/><polyline fill="none" stroke="#000080" stroke-width="1" points="750.5,570.5 757.5,577.5 760.5,583.5"/><polyline fill="none" stroke="#000080" stroke-width="1" points="855.5,570.5 852.5,576.5 858.5,583.5 866.5,588.5 878.5,588.5 880.5,594.5 887.5,602.5"/><polyline fill="none" stroke="#000080" stroke-width="1" points="894.5,613.5 900.5,616.5"/><polyline fill="none" stroke="#000080" stroke-width="1" points="784.5,653.5 789.5,654.5 792.5,661.5 796.5,667.5 801.5,665.5 806.5,658.5 809.5,663.5 813.5,668.5 817.5,667.5 818.5,659.5 821.5,655.5 827.5,658.5 832.5,659.5 836.5,654.5 841.5,652.5 846.5,655.5 849.5,661.5 849.5,663.5"/><polyline fill="none" stroke="#000080" stroke-width="1" points="770.5,657.5 773.5,658.5 775.5,663.5"/><polyline fill="none" stroke="#000080" stroke-width="1" points="693.5,669.5 699.5,675.5 703.5,686.5 708.5,699.5 712.5,706.5 710.5,719.5 707.5,729.5"/><polyline fill="none" stroke="#000080" stroke-width="1" points="642.5,697.5 650.5,695.5 658.5,692.5 663.5,691.5 669.5,692.5 677.5,694.5 683.5,699.5 685.5,703.5"/><polyline fill="none" stroke="#000080" stroke-width="1" points="641.5,715.5 647.5,716.5 656.5,712.5 666.5,711.5"/><polyline fill="none" stroke="#000080" stroke-width="1" points="697.5,714.5 699.5,723.5 700.5,729.5"/><polyline fill="none" stroke="#000080" stroke-width="1" points="678.5,724.5 683.5,736.5 688.5,748.5"/><polyline fill="none" stroke="#000080" stroke-width="1" points="640.5,742.5 644.5,748.5 646.5,758.5"/><polyline fill="none" stroke="#000080" stroke-width="1" points="727.5,677.5 723.5,681.5 721.5,689.5"/><polyline fill="none" stroke="#000080" stroke-width="1" points="724.5,712.5 726.5,716.5"/><polyline fill="none" stroke="#000080" stroke-width="1" points="761.5,709.5 756.5,727.5"/><polyline fill="none" stroke="#000080" stroke-width="1" points="755.5,741.5 758.5,745.5 765.5,745.5"/><polyline fill="none" stroke="#000080" stroke-width="1" points="743.5,660.5 742.5,662.5"/><polyline fill="none" stroke="#000080" stroke-width="1" points="791.5,660.5 793.5,665.5 797.5,667.5 803.5,662.5 809.5,663.5 813.5,667.5 817.5,668.5 818.5,662.5"/><polyline fill="none" stroke="#000080" stroke-width="1" points="774.5,660.5 774.5,662.5"/><polyline fill="none" stroke="#000080" stroke-width="1" points="849.5,660.5 849.5,663.5"/><polyline fill="none" stroke="#000080" stroke-width="1" points="776.5,676.5 776.5,686.5"/><polyline fill="none" stroke="#000080" stroke-width="1" points="791.5,727.5 797.5,727.5 805.5,722.5 812.5,715.5 817.5,712.5 826.5,708.5"/><polyline fill="none" stroke="#000080" stroke-width="1" points="836.5,703.5 846.5,703.5 854.5,700.5 860.5,696.5 862.5,693.5 867.5,693.5 874.5,697.5 881.5,699.5 888.5,705.5 891.5,708.5 895.5,709.5 900.5,710.5"/><polyline fill="none" stroke="#000080" stroke-width="1" points="882.5,721.5 874.5,722.5 867.5,724.5 864.5,731.5 864.5,741.5 860.5,745.5 855.5,752.5 847.5,755.5"/><polyline fill="none" stroke="#000080" stroke-width="1" points="831.5,757.5 827.5,760.5 826.5,768.5"/><polyline fill="none" stroke="#000080" stroke-width="1" points="786.5,741.5 782.5,741.5"/><polyline fill="none" stroke="#000080" stroke-width="1" points="770.5,726.5 772.5,727.5"/><polyline fill="none" stroke="#000080" stroke-width="1" points="801.5,764.5 802.5,768.5"/><polyline fill="none" stroke="#000080" stroke-width="1" points="892.5,760.5 900.5,762.5"/><polyline fill="none" stroke="#000080" stroke-width="1" points="904.5,576.5 907.5,583.5 918.5,592.5 921.5,606.5 923.5,622.5"/><polyline fill="none" stroke="#000080" stroke-width="1" points="926.5,576.5 929.5,581.5 946.5,581.5 949.5,587.5 951.5,593.5 959.5,597.5 964.5,601.5 967.5,608.5 976.5,612.5 981.5,617.5 992.5,626.5 998.5,631.5 1003.5,638.5 1008.5,651.5 1006.5,663.5 1001.5,669.5"/><polyline fill="none" stroke="#000080" stroke-width="1" points="978.5,577.5 986.5,578.5 996.5,576.5"/><polyline fill="none" stroke="#000080" stroke-width="1" points="1016.5,576.5 1021.5,588.5 1018.5,596.5 1021.5,616.5"/><polyline fill="none" stroke="#000080" stroke-width="1" points="896.5,616.5 904.5,618.5 913.5,622.5"/><polyline fill="none" stroke="#000080" stroke-width="1" points="944.5,629.5 947.5,638.5 952.5,648.5 946.5,654.5 937.5,657.5 933.5,652.5 928.5,651.5 918.5,646.5 914.5,648.5 916.5,656.5 914.5,673.5 912.5,677.5 916.5,686.5 918.5,693.5 916.5,701.5 913.5,706.5"/><polyline fill="none" stroke="#000080" stroke-width="1" points="976.5,656.5 978.5,662.5 984.5,671.5 989.5,683.5 988.5,696.5 981.5,698.5"/><polyline fill="none" stroke="#000080" stroke-width="1" points="896.5,712.5 906.5,718.5 921.5,723.5 933.5,722.5 944.5,717.5 956.5,718.5 968.5,724.5 978.5,724.5"/><polyline fill="none" stroke="#000080" stroke-width="1" points="896.5,762.5 913.5,758.5 923.5,756.5 937.5,752.5 941.5,761.5 942.5,768.5"/><polyline fill="none" stroke="#000080" stroke-width="1" points="809.5,521.5 820.5,528.5"/><polyline fill="none" stroke="#000080" stroke-width="1" points="834.5,535.5 840.5,538.5 850.5,542.5 856.5,545.5 860.5,549.5"/><polyline fill="none" stroke="#ff0000" stroke-width="1" points="903.5,1.5 900.5,7.5 905.5,12.5 910.5,15.5 911.5,22.5 910.5,32.5 904.5,38.5 894.5,36.5 885.5,36.5 876.5,41.5 870.5,50.5 864.5,61.5 863.5,71.5 860.5,79.5 862.5,88.5 862.5,117.5 865.5,130.5 866.5,137.5 864.5,150.5 868.5,162.5 874.5,170.5 880.5,177.5 876.5,187.5 874.5,192.5"/><polyline fill="none" stroke="#ff0000" stroke-width="1" points="874.5,192.5 868.5,192.5 867.5,199.5 873.5,219.5 870.5,240.5 857.5,249.5 853.5,264.5 855.5,277.5 849.5,294.5 845.5,284.5 840.5,289.5 834.5,292.5"/><polyline fill="none" stroke="#ff0000" stroke-width="1" points="402.5,462.5 400.5,464.5 399.5,468.5 394.5,474.5 389.5,474.5 390.5,480.5 389.5,481.5"/><polyline fill="none" stroke="#ff0000" stroke-width="1" points="387.5,490.5 396.5,498.5 401.5,498.5 405.5,495.5 407.5,489.5 412.5,489.5 417.5,499.5 421.5,500.5 429.5,500.5"/><polyline fill="none" stroke="#ff0000" stroke-width="1" points="796.5,471.5 798.5,470.5 811.5,470.5 813.5,471.5"/><polyline fill="none" stroke="#ff0000" stroke-width="1" points="776.5,462.5 780.5,466.5"/><polyline fill="none" stroke="#ff0000" stroke-width="1" points="735.5,523.5 738.5,525.5 740.5,528.5"/><polyline fill="none" stroke="#ff0000" stroke-width="1" points="747.5,535.5 746.5,542.5 743.5,548.5 743.5,555.5 738.5,557.5"/><polyline fill="none" stroke="#ff0000" stroke-width="1" points="735.5,561.5 738.5,566.5 743.5,568.5 741.5,576.5"/><polyline fill="none" stroke="#ff0000" stroke-width="1" points="914.5,520.5 918.5,534.5 914.5,544.5 912.5,547.5 919.5,556.5 926.5,576.5"/><polyline fill="none" stroke="#ff0000" stroke-width="1" points="742.5,570.5 740.5,575.5"/><polyline fill="none" stroke="#ff0000" stroke-width="1" points="732.5,586.5 728.5,588.5 722.5,587.5 718.5,592.5 720.5,598.5 723.5,604.5 721.5,610.5 720.5,616.5"/><polyline fill="none" stroke="#ff0000" stroke-width="1" points="685.5,604.5 682.5,603.5 678.5,606.5"/><polyline fill="none" stroke="#ff0000" stroke-width="1" points="696.5,606.5 701.5,611.5 705.5,611.5"/><polyline fill="none" stroke="#ff0000" stroke-width="1" points="663.5,610.5 670.5,612.5 675.5,610.5"/><polyline fill="none" stroke="#ff0000" stroke-width="1" points="712.5,620.5 711.5,623.5 709.5,626.5 712.5,627.5"/><polyline fill="none" stroke="#ff0000" stroke-width="1" points="717.5,620.5 718.5,621.5"/><polyline fill="none" stroke="#ff0000" stroke-width="1" points="640.5,627.5 643.5,630.5 648.5,629.5 650.5,628.5 651.5,630.5"/><polyline fill="none" stroke="#ff0000" stroke-width="1" points="656.5,639.5 660.5,640.5 664.5,644.5 671.5,646.5 673.5,648.5 675.5,658.5 679.5,659.5 684.5,658.5 685.5,656.5"/><polyline fill="none" stroke="#ff0000" stroke-width="1" points="691.5,655.5 691.5,659.5"/><polyline fill="none" stroke="#ff0000" stroke-width="1" points="694.5,665.5 698.5,669.5"/><polyline fill="none" stroke="#ff0000" stroke-width="1" points="726.5,646.5 722.5,652.5 717.5,654.5 714.5,658.5 712.5,665.5 714.5,670.5"/><polyline fill="none" stroke="#ff0000" stroke-width="1" points="722.5,652.5 723.5,659.5 726.5,663.5"/><polyline fill="none" stroke="#ff0000" stroke-width="1" points="861.5,646.5 866.5,648.5 871.5,645.5"/><polyline fill="none" stroke="#ff0000" stroke-width="1" points="893.5,635.5 898.5,632.5"/><polyline fill="none" stroke="#ff0000" stroke-width="1" points="872.5,661.5 872.5,663.5"/><polyline fill="none" stroke="#ff0000" stroke-width="1" points="694.5,665.5 699.5,669.5 705.5,676.5 709.5,674.5 713.5,674.5 716.5,670.5 712.5,665.5 713.5,660.5"/><polyline fill="none" stroke="#ff0000" stroke-width="1" points="713.5,674.5 718.5,676.5 724.5,676.5 728.5,677.5 731.5,679.5 735.5,686.5"/><polyline fill="none" stroke="#ff0000" stroke-width="1" points="728.5,677.5 728.5,674.5"/><polyline fill="none" stroke="#ff0000" stroke-width="1" points="724.5,660.5 726.5,662.5"/><polyline fill="none" stroke="#ff0000" stroke-width="1" points="752.5,689.5 759.5,693.5 766.5,693.5"/><polyline fill="none" stroke="#ff0000" stroke-width="1" points="768.5,700.5 761.5,709.5 758.5,719.5 756.5,727.5"/><polyline fill="none" stroke="#ff0000" stroke-width="1" points="755.5,741.5 752.5,750.5 748.5,748.5 747.5,748.5"/><polyline fill="none" stroke="#ff0000" stroke-width="1" points="741.5,750.5 742.5,753.5"/><polyline fill="none" stroke="#ff0000" stroke-width="1" points="735.5,761.5 731.5,767.5"/><polyline fill="none" stroke="#ff0000" stroke-width="1" points="872.5,662.5 872.5,663.5"/><polyline fill="none" stroke="#ff0000" stroke-width="1" points="874.5,676.5 881.5,682.5 885.5,684.5 891.5,691.5"/><polyline fill="none" stroke="#ff0000" stroke-width="1" points="895.5,709.5 894.5,714.5 891.5,718.5 881.5,723.5 879.5,725.5 882.5,734.5 884.5,736.5 882.5,740.5 886.5,743.5 885.5,748.5 879.5,744.5 876.5,741.5 871.5,743.5 867.5,741.5 864.5,743.5 855.5,743.5 847.5,748.5"/><polyline fill="none" stroke="#ff0000" stroke-width="1" points="824.5,746.5 819.5,755.5 815.5,748.5 809.5,746.5 804.5,745.5"/><polyline fill="none" stroke="#ff0000" stroke-width="1" points="777.5,740.5 778.5,737.5 782.5,737.5 788.5,741.5"/><polyline fill="none" stroke="#ff0000" stroke-width="1" points="841.5,767.5 848.5,764.5 857.5,764.5 865.5,762.5 865.5,768.5"/><polyline fill="none" stroke="#ff0000" stroke-width="1" points="800.5,763.5 807.5,764.5 810.5,767.5"/><polyline fill="none" stroke="#ff0000" stroke-width="1" points="926.5,576.5 923.5,586.5 924.5,598.5 931.5,603.5 931.5,608.5"/><polyline fill="none" stroke="#ff0000" stroke-width="1" points="922.5,621.5 923.5,626.5 928.5,624.5"/><polyline fill="none" stroke="#ff0000" stroke-width="1" points="928.5,622.5 934.5,621.5 938.5,623.5"/><polyline fill="none" stroke="#ff0000" stroke-width="1" points="939.5,628.5 946.5,629.5 962.5,633.5 964.5,642.5 962.5,644.5 967.5,649.5 973.5,652.5"/><polyline fill="none" stroke="#ff0000" stroke-width="1" points="978.5,643.5 982.5,642.5 984.5,644.5"/><polyline fill="none" stroke="#ff0000" stroke-width="1" points="989.5,648.5 996.5,647.5 993.5,651.5 1002.5,657.5 1012.5,659.5 1019.5,668.5 1021.5,674.5"/><polyline fill="none" stroke="#ff0000" stroke-width="1" points="1012.5,681.5 1003.5,691.5 994.5,697.5 984.5,701.5 977.5,706.5 976.5,718.5 979.5,728.5 983.5,731.5 979.5,738.5 973.5,742.5 971.5,741.5 968.5,742.5 971.5,746.5 967.5,753.5 964.5,761.5 967.5,766.5 962.5,768.5"/><polyline fill="none" stroke="#ff0000" stroke-width="1" points="979.5,728.5 988.5,733.5 998.5,739.5 1013.5,738.5 1021.5,736.5 1022.5,728.5"/><polyline fill="none" stroke="#ff0000" stroke-width="1" points="977.5,706.5 963.5,703.5 953.5,702.5 939.5,697.5 933.5,696.5 928.5,699.5 921.5,707.5 911.5,708.5 904.5,703.5 903.5,709.5 901.5,712.5 896.5,709.5"/><polyline fill="none" stroke="#ff0000" stroke-width="1" points="896.5,632.5 901.5,629.5 904.5,629.5"/><rect x="520" y="231" width="15" height="13" fill="#000"/><path fill="#ffff00" d="M524 233h2v1h-2zM523 234h3v1h-3zM523 235h3v1h-3zM522 236h4v1h-4zM522 237h4v1h-4zM521 238h2v1h-2zM524 238h2v1h-2zM521 239h6v1h-6zM524 240h2v1h-2zM524 241h2v1h-2zM529 233h4v1h-4zM528 234h2v1h-2zM532 234h2v1h-2zM528 235h2v1h-2zM528 236h2v1h-2zM528 237h5v1h-5zM528 238h2v1h-2zM532 238h2v1h-2zM528 239h2v1h-2zM532 239h2v1h-2zM528 240h2v1h-2zM532 240h2v1h-2zM529 241h4v1h-4z"/><rect x="427" y="277" width="22" height="13" fill="#000"/><path fill="#ff0000" d="M430 279h2v1h-2zM428 280h4v1h-4zM430 281h2v1h-2zM430 282h2v1h-2zM430 283h2v1h-2zM430 284h2v1h-2zM430 285h2v1h-2zM430 286h2v1h-2zM430 287h2v1h-2zM435 279h6v1h-6zM435 280h6v1h-6zM439 281h2v1h-2zM438 282h2v1h-2zM438 283h2v1h-2zM437 284h2v1h-2zM436 285h2v1h-2zM436 286h2v1h-2zM436 287h2v1h-2zM443 279h4v1h-4zM442 280h2v1h-2zM446 280h2v1h-2zM442 281h2v1h-2zM446 281h2v1h-2zM442 282h2v1h-2zM446 282h2v1h-2zM442 283h2v1h-2zM446 283h2v1h-2zM442 284h2v1h-2zM446 284h2v1h-2zM442 285h2v1h-2zM446 285h2v1h-2zM442 286h2v1h-2zM446 286h2v1h-2zM443 287h4v1h-4z"/><rect x="500" y="285" width="15" height="13" fill="#000"/><path fill="#ffff00" d="M501 287h6v1h-6zM501 288h2v1h-2zM501 289h2v1h-2zM501 290h5v1h-5zM501 291h2v1h-2zM505 291h2v1h-2zM505 292h2v1h-2zM505 293h2v1h-2zM501 294h2v1h-2zM505 294h2v1h-2zM502 295h4v1h-4zM511 287h2v1h-2zM510 288h3v1h-3zM510 289h3v1h-3zM509 290h4v1h-4zM509 291h4v1h-4zM508 292h2v1h-2zM511 292h2v1h-2zM508 293h6v1h-6zM511 294h2v1h-2zM511 295h2v1h-2z"/><rect x="496" y="308" width="15" height="13" fill="#000"/><path fill="#ffff00" d="M500 310h2v1h-2zM499 311h3v1h-3zM499 312h3v1h-3zM498 313h4v1h-4zM498 314h4v1h-4zM497 315h2v1h-2zM500 315h2v1h-2zM497 316h6v1h-6zM500 317h2v1h-2zM500 318h2v1h-2zM505 310h4v1h-4zM504 311h2v1h-2zM508 311h2v1h-2zM504 312h2v1h-2zM508 312h2v1h-2zM504 313h2v1h-2zM508 313h2v1h-2zM505 314h4v1h-4zM504 315h2v1h-2zM508 315h2v1h-2zM504 316h2v1h-2zM508 316h2v1h-2zM504 317h2v1h-2zM508 317h2v1h-2zM505 318h4v1h-4z"/><rect x="415" y="318" width="22" height="13" fill="#000"/><path fill="#ff0000" d="M418 320h2v1h-2zM416 321h4v1h-4zM418 322h2v1h-2zM418 323h2v1h-2zM418 324h2v1h-2zM418 325h2v1h-2zM418 326h2v1h-2zM418 327h2v1h-2zM418 328h2v1h-2zM424 320h4v1h-4zM423 321h2v1h-2zM427 321h2v1h-2zM423 322h2v1h-2zM427 322h2v1h-2zM423 323h2v1h-2zM427 323h2v1h-2zM423 324h2v1h-2zM427 324h2v1h-2zM423 325h2v1h-2zM427 325h2v1h-2zM423 326h2v1h-2zM427 326h2v1h-2zM423 327h2v1h-2zM427 327h2v1h-2zM424 328h4v1h-4zM431 320h4v1h-4zM430 321h2v1h-2zM434 321h2v1h-2zM430 322h2v1h-2zM434 322h2v1h-2zM430 323h2v1h-2zM434 323h2v1h-2zM431 324h5v1h-5zM434 325h2v1h-2zM434 326h2v1h-2zM430 327h2v1h-2zM434 327h2v1h-2zM431 328h4v1h-4z"/><rect x="483" y="343" width="15" height="13" fill="#000"/><path fill="#ff0080" d="M485 345h4v1h-4zM484 346h2v1h-2zM488 346h2v1h-2zM484 347h2v1h-2zM484 348h2v1h-2zM484 349h5v1h-5zM484 350h2v1h-2zM488 350h2v1h-2zM484 351h2v1h-2zM488 351h2v1h-2zM484 352h2v1h-2zM488 352h2v1h-2zM485 353h4v1h-4zM491 345h6v1h-6zM491 346h2v1h-2zM491 347h2v1h-2zM491 348h5v1h-5zM491 349h2v1h-2zM495 349h2v1h-2zM495 350h2v1h-2zM495 351h2v1h-2zM491 352h2v1h-2zM495 352h2v1h-2zM492 353h4v1h-4z"/><rect x="519" y="341" width="15" height="13" fill="#000"/><path fill="#ff0080" d="M520 343h6v1h-6zM520 344h6v1h-6zM524 345h2v1h-2zM523 346h2v1h-2zM523 347h2v1h-2zM522 348h2v1h-2zM521 349h2v1h-2zM521 350h2v1h-2zM521 351h2v1h-2zM528 343h4v1h-4zM527 344h2v1h-2zM531 344h2v1h-2zM527 345h2v1h-2zM531 345h2v1h-2zM527 346h2v1h-2zM531 346h2v1h-2zM528 347h4v1h-4zM527 348h2v1h-2zM531 348h2v1h-2zM527 349h2v1h-2zM531 349h2v1h-2zM527 350h2v1h-2zM531 350h2v1h-2zM528 351h4v1h-4z"/><rect x="390" y="357" width="22" height="13" fill="#000"/><path fill="#ff0000" d="M393 359h2v1h-2zM391 360h4v1h-4zM393 361h2v1h-2zM393 362h2v1h-2zM393 363h2v1h-2zM393 364h2v1h-2zM393 365h2v1h-2zM393 366h2v1h-2zM393 367h2v1h-2zM399 359h4v1h-4zM398 360h2v1h-2zM402 360h2v1h-2zM398 361h2v1h-2zM402 361h2v1h-2zM398 362h2v1h-2zM402 362h2v1h-2zM398 363h2v1h-2zM402 363h2v1h-2zM398 364h2v1h-2zM402 364h2v1h-2zM398 365h2v1h-2zM402 365h2v1h-2zM398 366h2v1h-2zM402 366h2v1h-2zM399 367h4v1h-4zM406 359h4v1h-4zM405 360h2v1h-2zM409 360h2v1h-2zM405 361h2v1h-2zM405 362h2v1h-2zM405 363h5v1h-5zM405 364h2v1h-2zM409 364h2v1h-2zM405 365h2v1h-2zM409 365h2v1h-2zM405 366h2v1h-2zM409 366h2v1h-2zM406 367h4v1h-4z"/><rect x="431" y="361" width="15" height="13" fill="#000"/><path fill="#ff0080" d="M433 363h4v1h-4zM432 364h2v1h-2zM436 364h2v1h-2zM432 365h2v1h-2zM436 365h2v1h-2zM432 366h2v1h-2zM436 366h2v1h-2zM433 367h4v1h-4zM432 368h2v1h-2zM436 368h2v1h-2zM432 369h2v1h-2zM436 369h2v1h-2zM432 370h2v1h-2zM436 370h2v1h-2zM433 371h4v1h-4zM439 363h6v1h-6zM439 364h6v1h-6zM443 365h2v1h-2zM442 366h2v1h-2zM442 367h2v1h-2zM441 368h2v1h-2zM440 369h2v1h-2zM440 370h2v1h-2zM440 371h2v1h-2z"/><rect x="478" y="363" width="15" height="13" fill="#000"/><path fill="#ffff00" d="M479 365h6v1h-6zM479 366h2v1h-2zM479 367h2v1h-2zM479 368h5v1h-5zM479 369h2v1h-2zM483 369h2v1h-2zM483 370h2v1h-2zM483 371h2v1h-2zM479 372h2v1h-2zM483 372h2v1h-2zM480 373h4v1h-4zM487 365h4v1h-4zM486 366h2v1h-2zM490 366h2v1h-2zM490 367h2v1h-2zM490 368h2v1h-2zM489 369h2v1h-2zM488 370h2v1h-2zM487 371h2v1h-2zM486 372h2v1h-2zM486 373h6v1h-6z"/><rect x="516" y="363" width="15" height="13" fill="#000"/><path fill="#ff0080" d="M517 365h6v1h-6zM517 366h6v1h-6zM521 367h2v1h-2zM520 368h2v1h-2zM520 369h2v1h-2zM519 370h2v1h-2zM518 371h2v1h-2zM518 372h2v1h-2zM518 373h2v1h-2zM525 365h4v1h-4zM524 366h2v1h-2zM528 366h2v1h-2zM524 367h2v1h-2zM524 368h2v1h-2zM524 369h5v1h-5zM524 370h2v1h-2zM528 370h2v1h-2zM524 371h2v1h-2zM528 371h2v1h-2zM524 372h2v1h-2zM528 372h2v1h-2zM525 373h4v1h-4z"/><rect x="805" y="346" width="15" height="13" fill="#000"/><path fill="#ffff00" d="M809 348h2v1h-2zM808 349h3v1h-3zM808 350h3v1h-3zM807 351h4v1h-4zM807 352h4v1h-4zM806 353h2v1h-2zM809 353h2v1h-2zM806 354h6v1h-6zM809 355h2v1h-2zM809 356h2v1h-2zM814 348h4v1h-4zM813 349h2v1h-2zM817 349h2v1h-2zM817 350h2v1h-2zM817 351h2v1h-2zM815 352h3v1h-3zM817 353h2v1h-2zM817 354h2v1h-2zM813 355h2v1h-2zM817 355h2v1h-2zM814 356h4v1h-4z"/><rect x="773" y="367" width="15" height="13" fill="#000"/><path fill="#ff0080" d="M775 369h4v1h-4zM774 370h2v1h-2zM778 370h2v1h-2zM774 371h2v1h-2zM778 371h2v1h-2zM774 372h2v1h-2zM778 372h2v1h-2zM775 373h4v1h-4zM774 374h2v1h-2zM778 374h2v1h-2zM774 375h2v1h-2zM778 375h2v1h-2zM774 376h2v1h-2zM778 376h2v1h-2zM775 377h4v1h-4zM782 369h4v1h-4zM781 370h2v1h-2zM785 370h2v1h-2zM781 371h2v1h-2zM785 371h2v1h-2zM781 372h2v1h-2zM785 372h2v1h-2zM781 373h2v1h-2zM785 373h2v1h-2zM781 374h2v1h-2zM785 374h2v1h-2zM781 375h2v1h-2zM785 375h2v1h-2zM781 376h2v1h-2zM785 376h2v1h-2zM782 377h4v1h-4z"/><rect x="802" y="368" width="15" height="13" fill="#000"/><path fill="#ff0080" d="M804 370h4v1h-4zM803 371h2v1h-2zM807 371h2v1h-2zM803 372h2v1h-2zM803 373h2v1h-2zM803 374h5v1h-5zM803 375h2v1h-2zM807 375h2v1h-2zM803 376h2v1h-2zM807 376h2v1h-2zM803 377h2v1h-2zM807 377h2v1h-2zM804 378h4v1h-4zM810 370h6v1h-6zM810 371h6v1h-6zM814 372h2v1h-2zM813 373h2v1h-2zM813 374h2v1h-2zM812 375h2v1h-2zM811 376h2v1h-2zM811 377h2v1h-2zM811 378h2v1h-2z"/><rect x="501" y="399" width="15" height="13" fill="#000"/><path fill="#ff0080" d="M503 401h4v1h-4zM502 402h2v1h-2zM506 402h2v1h-2zM502 403h2v1h-2zM502 404h2v1h-2zM502 405h5v1h-5zM502 406h2v1h-2zM506 406h2v1h-2zM502 407h2v1h-2zM506 407h2v1h-2zM502 408h2v1h-2zM506 408h2v1h-2zM503 409h4v1h-4zM509 401h6v1h-6zM509 402h6v1h-6zM513 403h2v1h-2zM512 404h2v1h-2zM512 405h2v1h-2zM511 406h2v1h-2zM510 407h2v1h-2zM510 408h2v1h-2zM510 409h2v1h-2z"/><rect x="461" y="419" width="15" height="13" fill="#000"/><path fill="#ff0080" d="M462 421h6v1h-6zM462 422h6v1h-6zM466 423h2v1h-2zM465 424h2v1h-2zM465 425h2v1h-2zM464 426h2v1h-2zM463 427h2v1h-2zM463 428h2v1h-2zM463 429h2v1h-2zM470 421h4v1h-4zM469 422h2v1h-2zM473 422h2v1h-2zM473 423h2v1h-2zM473 424h2v1h-2zM472 425h2v1h-2zM471 426h2v1h-2zM470 427h2v1h-2zM469 428h2v1h-2zM469 429h6v1h-6z"/><rect x="490" y="418" width="15" height="13" fill="#000"/><path fill="#ff0080" d="M492 420h4v1h-4zM491 421h2v1h-2zM495 421h2v1h-2zM491 422h2v1h-2zM491 423h2v1h-2zM491 424h5v1h-5zM491 425h2v1h-2zM495 425h2v1h-2zM491 426h2v1h-2zM495 426h2v1h-2zM491 427h2v1h-2zM495 427h2v1h-2zM492 428h4v1h-4zM499 420h4v1h-4zM498 421h2v1h-2zM502 421h2v1h-2zM502 422h2v1h-2zM502 423h2v1h-2zM500 424h3v1h-3zM502 425h2v1h-2zM502 426h2v1h-2zM498 427h2v1h-2zM502 427h2v1h-2zM499 428h4v1h-4z"/><rect x="421" y="428" width="15" height="13" fill="#000"/><path fill="#ff0080" d="M423 430h4v1h-4zM422 431h2v1h-2zM426 431h2v1h-2zM422 432h2v1h-2zM426 432h2v1h-2zM422 433h2v1h-2zM426 433h2v1h-2zM423 434h4v1h-4zM422 435h2v1h-2zM426 435h2v1h-2zM422 436h2v1h-2zM426 436h2v1h-2zM422 437h2v1h-2zM426 437h2v1h-2zM423 438h4v1h-4zM431 430h2v1h-2zM429 431h4v1h-4zM431 432h2v1h-2zM431 433h2v1h-2zM431 434h2v1h-2zM431 435h2v1h-2zM431 436h2v1h-2zM431 437h2v1h-2zM431 438h2v1h-2z"/><rect x="460" y="435" width="15" height="13" fill="#000"/><path fill="#ff0080" d="M462 437h4v1h-4zM461 438h2v1h-2zM465 438h2v1h-2zM461 439h2v1h-2zM461 440h2v1h-2zM461 441h5v1h-5zM461 442h2v1h-2zM465 442h2v1h-2zM461 443h2v1h-2zM465 443h2v1h-2zM461 444h2v1h-2zM465 444h2v1h-2zM462 445h4v1h-4zM469 437h4v1h-4zM468 438h2v1h-2zM472 438h2v1h-2zM468 439h2v1h-2zM472 439h2v1h-2zM468 440h2v1h-2zM472 440h2v1h-2zM469 441h5v1h-5zM472 442h2v1h-2zM472 443h2v1h-2zM468 444h2v1h-2zM472 444h2v1h-2zM469 445h4v1h-4z"/><rect x="434" y="439" width="15" height="13" fill="#000"/><path fill="#ff0000" d="M436 441h4v1h-4zM435 442h2v1h-2zM439 442h2v1h-2zM435 443h2v1h-2zM439 443h2v1h-2zM435 444h2v1h-2zM439 444h2v1h-2zM436 445h5v1h-5zM439 446h2v1h-2zM439 447h2v1h-2zM435 448h2v1h-2zM439 448h2v1h-2zM436 449h4v1h-4zM444 441h2v1h-2zM442 442h4v1h-4zM444 443h2v1h-2zM444 444h2v1h-2zM444 445h2v1h-2zM444 446h2v1h-2zM444 447h2v1h-2zM444 448h2v1h-2zM444 449h2v1h-2z"/><rect x="391" y="442" width="22" height="13" fill="#000"/><path fill="#ff0000" d="M394 444h2v1h-2zM392 445h4v1h-4zM394 446h2v1h-2zM394 447h2v1h-2zM394 448h2v1h-2zM394 449h2v1h-2zM394 450h2v1h-2zM394 451h2v1h-2zM394 452h2v1h-2zM400 444h4v1h-4zM399 445h2v1h-2zM403 445h2v1h-2zM399 446h2v1h-2zM403 446h2v1h-2zM399 447h2v1h-2zM403 447h2v1h-2zM399 448h2v1h-2zM403 448h2v1h-2zM399 449h2v1h-2zM403 449h2v1h-2zM399 450h2v1h-2zM403 450h2v1h-2zM399 451h2v1h-2zM403 451h2v1h-2zM400 452h4v1h-4zM406 444h6v1h-6zM406 445h6v1h-6zM410 446h2v1h-2zM409 447h2v1h-2zM409 448h2v1h-2zM408 449h2v1h-2zM407 450h2v1h-2zM407 451h2v1h-2zM407 452h2v1h-2z"/><rect x="493" y="444" width="15" height="13" fill="#000"/><path fill="#ff0080" d="M494 446h6v1h-6zM494 447h6v1h-6zM498 448h2v1h-2zM497 449h2v1h-2zM497 450h2v1h-2zM496 451h2v1h-2zM495 452h2v1h-2zM495 453h2v1h-2zM495 454h2v1h-2zM502 446h4v1h-4zM501 447h2v1h-2zM505 447h2v1h-2zM501 448h2v1h-2zM505 448h2v1h-2zM501 449h2v1h-2zM505 449h2v1h-2zM502 450h4v1h-4zM501 451h2v1h-2zM505 451h2v1h-2zM501 452h2v1h-2zM505 452h2v1h-2zM501 453h2v1h-2zM505 453h2v1h-2zM502 454h4v1h-4z"/><rect x="531" y="439" width="15" height="13" fill="#000"/><path fill="#ff0080" d="M532 441h6v1h-6zM532 442h6v1h-6zM536 443h2v1h-2zM535 444h2v1h-2zM535 445h2v1h-2zM534 446h2v1h-2zM533 447h2v1h-2zM533 448h2v1h-2zM533 449h2v1h-2zM540 441h4v1h-4zM539 442h2v1h-2zM543 442h2v1h-2zM539 443h2v1h-2zM539 444h2v1h-2zM539 445h5v1h-5zM539 446h2v1h-2zM543 446h2v1h-2zM539 447h2v1h-2zM543 447h2v1h-2zM539 448h2v1h-2zM543 448h2v1h-2zM540 449h4v1h-4z"/><rect x="403" y="454" width="15" height="13" fill="#000"/><path fill="#ff0080" d="M405 456h4v1h-4zM404 457h2v1h-2zM408 457h2v1h-2zM404 458h2v1h-2zM404 459h2v1h-2zM404 460h5v1h-5zM404 461h2v1h-2zM408 461h2v1h-2zM404 462h2v1h-2zM408 462h2v1h-2zM404 463h2v1h-2zM408 463h2v1h-2zM405 464h4v1h-4zM412 456h4v1h-4zM411 457h2v1h-2zM415 457h2v1h-2zM415 458h2v1h-2zM415 459h2v1h-2zM413 460h3v1h-3zM415 461h2v1h-2zM415 462h2v1h-2zM411 463h2v1h-2zM415 463h2v1h-2zM412 464h4v1h-4z"/><rect x="508" y="455" width="15" height="13" fill="#000"/><path fill="#ff0080" d="M510 457h4v1h-4zM509 458h2v1h-2zM513 458h2v1h-2zM509 459h2v1h-2zM509 460h2v1h-2zM509 461h5v1h-5zM509 462h2v1h-2zM513 462h2v1h-2zM509 463h2v1h-2zM513 463h2v1h-2zM509 464h2v1h-2zM513 464h2v1h-2zM510 465h4v1h-4zM516 457h6v1h-6zM516 458h2v1h-2zM516 459h2v1h-2zM516 460h5v1h-5zM516 461h2v1h-2zM520 461h2v1h-2zM520 462h2v1h-2zM520 463h2v1h-2zM516 464h2v1h-2zM520 464h2v1h-2zM517 465h4v1h-4z"/><rect x="515" y="445" width="15" height="13" fill="#000"/><path fill="#ffff00" d="M516 447h6v1h-6zM516 448h2v1h-2zM516 449h2v1h-2zM516 450h5v1h-5zM516 451h2v1h-2zM520 451h2v1h-2zM520 452h2v1h-2zM520 453h2v1h-2zM516 454h2v1h-2zM520 454h2v1h-2zM517 455h4v1h-4zM524 447h4v1h-4zM523 448h2v1h-2zM527 448h2v1h-2zM523 449h2v1h-2zM523 450h2v1h-2zM523 451h5v1h-5zM523 452h2v1h-2zM527 452h2v1h-2zM523 453h2v1h-2zM527 453h2v1h-2zM523 454h2v1h-2zM527 454h2v1h-2zM524 455h4v1h-4z"/><rect x="525" y="456" width="15" height="13" fill="#000"/><path fill="#ff0080" d="M527 458h4v1h-4zM526 459h2v1h-2zM530 459h2v1h-2zM526 460h2v1h-2zM530 460h2v1h-2zM526 461h2v1h-2zM530 461h2v1h-2zM527 462h4v1h-4zM526 463h2v1h-2zM530 463h2v1h-2zM526 464h2v1h-2zM530 464h2v1h-2zM526 465h2v1h-2zM530 465h2v1h-2zM527 466h4v1h-4zM533 458h6v1h-6zM533 459h6v1h-6zM537 460h2v1h-2zM536 461h2v1h-2zM536 462h2v1h-2zM535 463h2v1h-2zM534 464h2v1h-2zM534 465h2v1h-2zM534 466h2v1h-2z"/><rect x="407" y="468" width="15" height="13" fill="#000"/><path fill="#ff0080" d="M409 470h4v1h-4zM408 471h2v1h-2zM412 471h2v1h-2zM408 472h2v1h-2zM408 473h2v1h-2zM408 474h5v1h-5zM408 475h2v1h-2zM412 475h2v1h-2zM408 476h2v1h-2zM412 476h2v1h-2zM408 477h2v1h-2zM412 477h2v1h-2zM409 478h4v1h-4zM416 470h4v1h-4zM415 471h2v1h-2zM419 471h2v1h-2zM419 472h2v1h-2zM419 473h2v1h-2zM417 474h3v1h-3zM419 475h2v1h-2zM419 476h2v1h-2zM415 477h2v1h-2zM419 477h2v1h-2zM416 478h4v1h-4z"/><rect x="548" y="475" width="15" height="13" fill="#000"/><path fill="#ff0080" d="M550 477h4v1h-4zM549 478h2v1h-2zM553 478h2v1h-2zM549 479h2v1h-2zM553 479h2v1h-2zM549 480h2v1h-2zM553 480h2v1h-2zM550 481h4v1h-4zM549 482h2v1h-2zM553 482h2v1h-2zM549 483h2v1h-2zM553 483h2v1h-2zM549 484h2v1h-2zM553 484h2v1h-2zM550 485h4v1h-4zM557 477h4v1h-4zM556 478h2v1h-2zM560 478h2v1h-2zM560 479h2v1h-2zM560 480h2v1h-2zM558 481h3v1h-3zM560 482h2v1h-2zM560 483h2v1h-2zM556 484h2v1h-2zM560 484h2v1h-2zM557 485h4v1h-4z"/><rect x="533" y="485" width="15" height="13" fill="#000"/><path fill="#ff0000" d="M535 487h4v1h-4zM534 488h2v1h-2zM538 488h2v1h-2zM534 489h2v1h-2zM538 489h2v1h-2zM534 490h2v1h-2zM538 490h2v1h-2zM535 491h5v1h-5zM538 492h2v1h-2zM538 493h2v1h-2zM534 494h2v1h-2zM538 494h2v1h-2zM535 495h4v1h-4zM543 487h2v1h-2zM541 488h4v1h-4zM543 489h2v1h-2zM543 490h2v1h-2zM543 491h2v1h-2zM543 492h2v1h-2zM543 493h2v1h-2zM543 494h2v1h-2zM543 495h2v1h-2z"/><rect x="539" y="496" width="15" height="13" fill="#000"/><path fill="#ff0000" d="M541 498h4v1h-4zM540 499h2v1h-2zM544 499h2v1h-2zM540 500h2v1h-2zM544 500h2v1h-2zM540 501h2v1h-2zM544 501h2v1h-2zM541 502h4v1h-4zM540 503h2v1h-2zM544 503h2v1h-2zM540 504h2v1h-2zM544 504h2v1h-2zM540 505h2v1h-2zM544 505h2v1h-2zM541 506h4v1h-4zM548 498h4v1h-4zM547 499h2v1h-2zM551 499h2v1h-2zM547 500h2v1h-2zM551 500h2v1h-2zM547 501h2v1h-2zM551 501h2v1h-2zM548 502h5v1h-5zM551 503h2v1h-2zM551 504h2v1h-2zM547 505h2v1h-2zM551 505h2v1h-2zM548 506h4v1h-4z"/><rect x="459" y="494" width="15" height="13" fill="#000"/><path fill="#ff0080" d="M460 496h6v1h-6zM460 497h6v1h-6zM464 498h2v1h-2zM463 499h2v1h-2zM463 500h2v1h-2zM462 501h2v1h-2zM461 502h2v1h-2zM461 503h2v1h-2zM461 504h2v1h-2zM468 496h4v1h-4zM467 497h2v1h-2zM471 497h2v1h-2zM467 498h2v1h-2zM467 499h2v1h-2zM467 500h5v1h-5zM467 501h2v1h-2zM471 501h2v1h-2zM467 502h2v1h-2zM471 502h2v1h-2zM467 503h2v1h-2zM471 503h2v1h-2zM468 504h4v1h-4z"/><rect x="559" y="503" width="15" height="13" fill="#000"/><path fill="#ff0080" d="M561 505h4v1h-4zM560 506h2v1h-2zM564 506h2v1h-2zM560 507h2v1h-2zM564 507h2v1h-2zM560 508h2v1h-2zM564 508h2v1h-2zM561 509h4v1h-4zM560 510h2v1h-2zM564 510h2v1h-2zM560 511h2v1h-2zM564 511h2v1h-2zM560 512h2v1h-2zM564 512h2v1h-2zM561 513h4v1h-4zM568 505h4v1h-4zM567 506h2v1h-2zM571 506h2v1h-2zM571 507h2v1h-2zM571 508h2v1h-2zM569 509h3v1h-3zM571 510h2v1h-2zM571 511h2v1h-2zM567 512h2v1h-2zM571 512h2v1h-2zM568 513h4v1h-4z"/><rect x="496" y="518" width="15" height="13" fill="#000"/><path fill="#ff0080" d="M498 520h4v1h-4zM497 521h2v1h-2zM501 521h2v1h-2zM497 522h2v1h-2zM501 522h2v1h-2zM497 523h2v1h-2zM501 523h2v1h-2zM498 524h4v1h-4zM497 525h2v1h-2zM501 525h2v1h-2zM497 526h2v1h-2zM501 526h2v1h-2zM497 527h2v1h-2zM501 527h2v1h-2zM498 528h4v1h-4zM504 520h6v1h-6zM504 521h2v1h-2zM504 522h2v1h-2zM504 523h5v1h-5zM504 524h2v1h-2zM508 524h2v1h-2zM508 525h2v1h-2zM508 526h2v1h-2zM504 527h2v1h-2zM508 527h2v1h-2zM505 528h4v1h-4z"/><rect x="518" y="524" width="15" height="13" fill="#000"/><path fill="#ffff00" d="M520 526h4v1h-4zM519 527h2v1h-2zM523 527h2v1h-2zM519 528h2v1h-2zM519 529h2v1h-2zM519 530h5v1h-5zM519 531h2v1h-2zM523 531h2v1h-2zM519 532h2v1h-2zM523 532h2v1h-2zM519 533h2v1h-2zM523 533h2v1h-2zM520 534h4v1h-4zM528 526h2v1h-2zM526 527h4v1h-4zM528 528h2v1h-2zM528 529h2v1h-2zM528 530h2v1h-2zM528 531h2v1h-2zM528 532h2v1h-2zM528 533h2v1h-2zM528 534h2v1h-2z"/><rect x="571" y="518" width="15" height="13" fill="#000"/><path fill="#ff0080" d="M572 520h6v1h-6zM572 521h6v1h-6zM576 522h2v1h-2zM575 523h2v1h-2zM575 524h2v1h-2zM574 525h2v1h-2zM573 526h2v1h-2zM573 527h2v1h-2zM573 528h2v1h-2zM582 520h2v1h-2zM581 521h3v1h-3zM581 522h3v1h-3zM580 523h4v1h-4zM580 524h4v1h-4zM579 525h2v1h-2zM582 525h2v1h-2zM579 526h6v1h-6zM582 527h2v1h-2zM582 528h2v1h-2z"/><rect x="461" y="528" width="15" height="13" fill="#000"/><path fill="#ff0080" d="M462 530h6v1h-6zM462 531h6v1h-6zM466 532h2v1h-2zM465 533h2v1h-2zM465 534h2v1h-2zM464 535h2v1h-2zM463 536h2v1h-2zM463 537h2v1h-2zM463 538h2v1h-2zM470 530h4v1h-4zM469 531h2v1h-2zM473 531h2v1h-2zM473 532h2v1h-2zM473 533h2v1h-2zM472 534h2v1h-2zM471 535h2v1h-2zM470 536h2v1h-2zM469 537h2v1h-2zM469 538h6v1h-6z"/><rect x="539" y="537" width="15" height="13" fill="#000"/><path fill="#ffff00" d="M540 539h6v1h-6zM540 540h2v1h-2zM540 541h2v1h-2zM540 542h5v1h-5zM540 543h2v1h-2zM544 543h2v1h-2zM544 544h2v1h-2zM544 545h2v1h-2zM540 546h2v1h-2zM544 546h2v1h-2zM541 547h4v1h-4zM548 539h4v1h-4zM547 540h2v1h-2zM551 540h2v1h-2zM547 541h2v1h-2zM547 542h2v1h-2zM547 543h5v1h-5zM547 544h2v1h-2zM551 544h2v1h-2zM547 545h2v1h-2zM551 545h2v1h-2zM547 546h2v1h-2zM551 546h2v1h-2zM548 547h4v1h-4z"/><rect x="557" y="536" width="15" height="13" fill="#000"/><path fill="#ff0000" d="M559 538h4v1h-4zM558 539h2v1h-2zM562 539h2v1h-2zM558 540h2v1h-2zM562 540h2v1h-2zM558 541h2v1h-2zM562 541h2v1h-2zM559 542h5v1h-5zM562 543h2v1h-2zM562 544h2v1h-2zM558 545h2v1h-2zM562 545h2v1h-2zM559 546h4v1h-4zM567 538h2v1h-2zM565 539h4v1h-4zM567 540h2v1h-2zM567 541h2v1h-2zM567 542h2v1h-2zM567 543h2v1h-2zM567 544h2v1h-2zM567 545h2v1h-2zM567 546h2v1h-2z"/><rect x="575" y="534" width="15" height="13" fill="#000"/><path fill="#ff0080" d="M576 536h6v1h-6zM576 537h6v1h-6zM580 538h2v1h-2zM579 539h2v1h-2zM579 540h2v1h-2zM578 541h2v1h-2zM577 542h2v1h-2zM577 543h2v1h-2zM577 544h2v1h-2zM586 536h2v1h-2zM585 537h3v1h-3zM585 538h3v1h-3zM584 539h4v1h-4zM584 540h4v1h-4zM583 541h2v1h-2zM586 541h2v1h-2zM583 542h6v1h-6zM586 543h2v1h-2zM586 544h2v1h-2z"/><rect x="506" y="545" width="15" height="13" fill="#000"/><path fill="#ffff00" d="M508 547h4v1h-4zM507 548h2v1h-2zM511 548h2v1h-2zM507 549h2v1h-2zM507 550h2v1h-2zM507 551h5v1h-5zM507 552h2v1h-2zM511 552h2v1h-2zM507 553h2v1h-2zM511 553h2v1h-2zM507 554h2v1h-2zM511 554h2v1h-2zM508 555h4v1h-4zM516 547h2v1h-2zM514 548h4v1h-4zM516 549h2v1h-2zM516 550h2v1h-2zM516 551h2v1h-2zM516 552h2v1h-2zM516 553h2v1h-2zM516 554h2v1h-2zM516 555h2v1h-2z"/><rect x="558" y="552" width="15" height="13" fill="#000"/><path fill="#ff0080" d="M560 554h4v1h-4zM559 555h2v1h-2zM563 555h2v1h-2zM559 556h2v1h-2zM559 557h2v1h-2zM559 558h5v1h-5zM559 559h2v1h-2zM563 559h2v1h-2zM559 560h2v1h-2zM563 560h2v1h-2zM559 561h2v1h-2zM563 561h2v1h-2zM560 562h4v1h-4zM567 554h4v1h-4zM566 555h2v1h-2zM570 555h2v1h-2zM570 556h2v1h-2zM570 557h2v1h-2zM568 558h3v1h-3zM570 559h2v1h-2zM570 560h2v1h-2zM566 561h2v1h-2zM570 561h2v1h-2zM567 562h4v1h-4z"/><rect x="582" y="551" width="15" height="13" fill="#000"/><path fill="#ff0080" d="M584 553h4v1h-4zM583 554h2v1h-2zM587 554h2v1h-2zM583 555h2v1h-2zM583 556h2v1h-2zM583 557h5v1h-5zM583 558h2v1h-2zM587 558h2v1h-2zM583 559h2v1h-2zM587 559h2v1h-2zM583 560h2v1h-2zM587 560h2v1h-2zM584 561h4v1h-4zM591 553h4v1h-4zM590 554h2v1h-2zM594 554h2v1h-2zM594 555h2v1h-2zM594 556h2v1h-2zM592 557h3v1h-3zM594 558h2v1h-2zM594 559h2v1h-2zM590 560h2v1h-2zM594 560h2v1h-2zM591 561h4v1h-4z"/><rect x="529" y="558" width="15" height="13" fill="#000"/><path fill="#ffff00" d="M530 560h6v1h-6zM530 561h2v1h-2zM530 562h2v1h-2zM530 563h5v1h-5zM530 564h2v1h-2zM534 564h2v1h-2zM534 565h2v1h-2zM534 566h2v1h-2zM530 567h2v1h-2zM534 567h2v1h-2zM531 568h4v1h-4zM538 560h4v1h-4zM537 561h2v1h-2zM541 561h2v1h-2zM537 562h2v1h-2zM541 562h2v1h-2zM537 563h2v1h-2zM541 563h2v1h-2zM538 564h5v1h-5zM541 565h2v1h-2zM541 566h2v1h-2zM537 567h2v1h-2zM541 567h2v1h-2zM538 568h4v1h-4z"/><rect x="374" y="477" width="15" height="13" fill="#000"/><path fill="#ff0080" d="M376 479h4v1h-4zM375 480h2v1h-2zM379 480h2v1h-2zM375 481h2v1h-2zM375 482h2v1h-2zM375 483h5v1h-5zM375 484h2v1h-2zM379 484h2v1h-2zM375 485h2v1h-2zM379 485h2v1h-2zM375 486h2v1h-2zM379 486h2v1h-2zM376 487h4v1h-4zM382 479h6v1h-6zM382 480h2v1h-2zM382 481h2v1h-2zM382 482h5v1h-5zM382 483h2v1h-2zM386 483h2v1h-2zM386 484h2v1h-2zM386 485h2v1h-2zM382 486h2v1h-2zM386 486h2v1h-2zM383 487h4v1h-4z"/><rect x="461" y="571" width="15" height="13" fill="#000"/><path fill="#ff0080" d="M462 573h6v1h-6zM462 574h6v1h-6zM466 575h2v1h-2zM465 576h2v1h-2zM465 577h2v1h-2zM464 578h2v1h-2zM463 579h2v1h-2zM463 580h2v1h-2zM463 581h2v1h-2zM470 573h4v1h-4zM469 574h2v1h-2zM473 574h2v1h-2zM469 575h2v1h-2zM473 575h2v1h-2zM469 576h2v1h-2zM473 576h2v1h-2zM470 577h4v1h-4zM469 578h2v1h-2zM473 578h2v1h-2zM469 579h2v1h-2zM473 579h2v1h-2zM469 580h2v1h-2zM473 580h2v1h-2zM470 581h4v1h-4z"/><rect x="503" y="573" width="15" height="13" fill="#000"/><path fill="#ffff00" d="M504 575h6v1h-6zM504 576h2v1h-2zM504 577h2v1h-2zM504 578h5v1h-5zM504 579h2v1h-2zM508 579h2v1h-2zM508 580h2v1h-2zM508 581h2v1h-2zM504 582h2v1h-2zM508 582h2v1h-2zM505 583h4v1h-4zM512 575h4v1h-4zM511 576h2v1h-2zM515 576h2v1h-2zM515 577h2v1h-2zM515 578h2v1h-2zM514 579h2v1h-2zM513 580h2v1h-2zM512 581h2v1h-2zM511 582h2v1h-2zM511 583h6v1h-6z"/><rect x="592" y="572" width="15" height="13" fill="#000"/><path fill="#ff0080" d="M594 574h4v1h-4zM593 575h2v1h-2zM597 575h2v1h-2zM593 576h2v1h-2zM593 577h2v1h-2zM593 578h5v1h-5zM593 579h2v1h-2zM597 579h2v1h-2zM593 580h2v1h-2zM597 580h2v1h-2zM593 581h2v1h-2zM597 581h2v1h-2zM594 582h4v1h-4zM601 574h4v1h-4zM600 575h2v1h-2zM604 575h2v1h-2zM604 576h2v1h-2zM604 577h2v1h-2zM602 578h3v1h-3zM604 579h2v1h-2zM604 580h2v1h-2zM600 581h2v1h-2zM604 581h2v1h-2zM601 582h4v1h-4z"/><rect x="449" y="588" width="15" height="13" fill="#000"/><path fill="#ff0080" d="M451 590h4v1h-4zM450 591h2v1h-2zM454 591h2v1h-2zM450 592h2v1h-2zM450 593h2v1h-2zM450 594h5v1h-5zM450 595h2v1h-2zM454 595h2v1h-2zM450 596h2v1h-2zM454 596h2v1h-2zM450 597h2v1h-2zM454 597h2v1h-2zM451 598h4v1h-4zM457 590h6v1h-6zM457 591h6v1h-6zM461 592h2v1h-2zM460 593h2v1h-2zM460 594h2v1h-2zM459 595h2v1h-2zM458 596h2v1h-2zM458 597h2v1h-2zM458 598h2v1h-2z"/><rect x="464" y="587" width="15" height="13" fill="#000"/><path fill="#ff0080" d="M466 589h4v1h-4zM465 590h2v1h-2zM469 590h2v1h-2zM465 591h2v1h-2zM465 592h2v1h-2zM465 593h5v1h-5zM465 594h2v1h-2zM469 594h2v1h-2zM465 595h2v1h-2zM469 595h2v1h-2zM465 596h2v1h-2zM469 596h2v1h-2zM466 597h4v1h-4zM473 589h4v1h-4zM472 590h2v1h-2zM476 590h2v1h-2zM472 591h2v1h-2zM476 591h2v1h-2zM472 592h2v1h-2zM476 592h2v1h-2zM473 593h5v1h-5zM476 594h2v1h-2zM476 595h2v1h-2zM472 596h2v1h-2zM476 596h2v1h-2zM473 597h4v1h-4z"/><rect x="488" y="599" width="15" height="13" fill="#000"/><path fill="#ff0080" d="M490 601h4v1h-4zM489 602h2v1h-2zM493 602h2v1h-2zM489 603h2v1h-2zM489 604h2v1h-2zM489 605h5v1h-5zM489 606h2v1h-2zM493 606h2v1h-2zM489 607h2v1h-2zM493 607h2v1h-2zM489 608h2v1h-2zM493 608h2v1h-2zM490 609h4v1h-4zM496 601h6v1h-6zM496 602h2v1h-2zM496 603h2v1h-2zM496 604h5v1h-5zM496 605h2v1h-2zM500 605h2v1h-2zM500 606h2v1h-2zM500 607h2v1h-2zM496 608h2v1h-2zM500 608h2v1h-2zM497 609h4v1h-4z"/><rect x="508" y="595" width="15" height="13" fill="#000"/><path fill="#ffff00" d="M510 597h4v1h-4zM509 598h2v1h-2zM513 598h2v1h-2zM509 599h2v1h-2zM509 600h2v1h-2zM509 601h5v1h-5zM509 602h2v1h-2zM513 602h2v1h-2zM509 603h2v1h-2zM513 603h2v1h-2zM509 604h2v1h-2zM513 604h2v1h-2zM510 605h4v1h-4zM518 597h2v1h-2zM516 598h4v1h-4zM518 599h2v1h-2zM518 600h2v1h-2zM518 601h2v1h-2zM518 602h2v1h-2zM518 603h2v1h-2zM518 604h2v1h-2zM518 605h2v1h-2z"/><rect x="558" y="596" width="15" height="13" fill="#000"/><path fill="#ff0080" d="M560 598h4v1h-4zM559 599h2v1h-2zM563 599h2v1h-2zM559 600h2v1h-2zM559 601h2v1h-2zM559 602h5v1h-5zM559 603h2v1h-2zM563 603h2v1h-2zM559 604h2v1h-2zM563 604h2v1h-2zM559 605h2v1h-2zM563 605h2v1h-2zM560 606h4v1h-4zM567 598h4v1h-4zM566 599h2v1h-2zM570 599h2v1h-2zM570 600h2v1h-2zM570 601h2v1h-2zM568 602h3v1h-3zM570 603h2v1h-2zM570 604h2v1h-2zM566 605h2v1h-2zM570 605h2v1h-2zM567 606h4v1h-4z"/><rect x="589" y="594" width="15" height="13" fill="#000"/><path fill="#ffff00" d="M590 596h6v1h-6zM590 597h2v1h-2zM590 598h2v1h-2zM590 599h5v1h-5zM590 600h2v1h-2zM594 600h2v1h-2zM594 601h2v1h-2zM594 602h2v1h-2zM590 603h2v1h-2zM594 603h2v1h-2zM591 604h4v1h-4zM597 596h6v1h-6zM597 597h6v1h-6zM601 598h2v1h-2zM600 599h2v1h-2zM600 600h2v1h-2zM599 601h2v1h-2zM598 602h2v1h-2zM598 603h2v1h-2zM598 604h2v1h-2z"/><rect x="546" y="606" width="15" height="13" fill="#000"/><path fill="#ffff00" d="M547 608h6v1h-6zM547 609h2v1h-2zM547 610h2v1h-2zM547 611h5v1h-5zM547 612h2v1h-2zM551 612h2v1h-2zM551 613h2v1h-2zM551 614h2v1h-2zM547 615h2v1h-2zM551 615h2v1h-2zM548 616h4v1h-4zM555 608h4v1h-4zM554 609h2v1h-2zM558 609h2v1h-2zM558 610h2v1h-2zM558 611h2v1h-2zM557 612h2v1h-2zM556 613h2v1h-2zM555 614h2v1h-2zM554 615h2v1h-2zM554 616h6v1h-6z"/><rect x="601" y="609" width="15" height="13" fill="#000"/><path fill="#ffff00" d="M602 611h6v1h-6zM602 612h2v1h-2zM602 613h2v1h-2zM602 614h5v1h-5zM602 615h2v1h-2zM606 615h2v1h-2zM606 616h2v1h-2zM606 617h2v1h-2zM602 618h2v1h-2zM606 618h2v1h-2zM603 619h4v1h-4zM610 611h4v1h-4zM609 612h2v1h-2zM613 612h2v1h-2zM613 613h2v1h-2zM613 614h2v1h-2zM612 615h2v1h-2zM611 616h2v1h-2zM610 617h2v1h-2zM609 618h2v1h-2zM609 619h6v1h-6z"/><rect x="624" y="612" width="15" height="13" fill="#000"/><path fill="#ff0080" d="M626 614h4v1h-4zM625 615h2v1h-2zM629 615h2v1h-2zM625 616h2v1h-2zM629 616h2v1h-2zM625 617h2v1h-2zM629 617h2v1h-2zM626 618h4v1h-4zM625 619h2v1h-2zM629 619h2v1h-2zM625 620h2v1h-2zM629 620h2v1h-2zM625 621h2v1h-2zM629 621h2v1h-2zM626 622h4v1h-4zM633 614h4v1h-4zM632 615h2v1h-2zM636 615h2v1h-2zM636 616h2v1h-2zM636 617h2v1h-2zM634 618h3v1h-3zM636 619h2v1h-2zM636 620h2v1h-2zM632 621h2v1h-2zM636 621h2v1h-2zM633 622h4v1h-4z"/><rect x="471" y="611" width="15" height="13" fill="#000"/><path fill="#ff0080" d="M473 613h4v1h-4zM472 614h2v1h-2zM476 614h2v1h-2zM472 615h2v1h-2zM472 616h2v1h-2zM472 617h5v1h-5zM472 618h2v1h-2zM476 618h2v1h-2zM472 619h2v1h-2zM476 619h2v1h-2zM472 620h2v1h-2zM476 620h2v1h-2zM473 621h4v1h-4zM479 613h6v1h-6zM479 614h6v1h-6zM483 615h2v1h-2zM482 616h2v1h-2zM482 617h2v1h-2zM481 618h2v1h-2zM480 619h2v1h-2zM480 620h2v1h-2zM480 621h2v1h-2z"/><rect x="607" y="623" width="15" height="13" fill="#000"/><path fill="#ff0080" d="M608 625h6v1h-6zM608 626h6v1h-6zM612 627h2v1h-2zM611 628h2v1h-2zM611 629h2v1h-2zM610 630h2v1h-2zM609 631h2v1h-2zM609 632h2v1h-2zM609 633h2v1h-2zM616 625h4v1h-4zM615 626h2v1h-2zM619 626h2v1h-2zM615 627h2v1h-2zM615 628h2v1h-2zM615 629h5v1h-5zM615 630h2v1h-2zM619 630h2v1h-2zM615 631h2v1h-2zM619 631h2v1h-2zM615 632h2v1h-2zM619 632h2v1h-2zM616 633h4v1h-4z"/><rect x="562" y="621" width="15" height="13" fill="#000"/><path fill="#ffff00" d="M566 623h2v1h-2zM565 624h3v1h-3zM565 625h3v1h-3zM564 626h4v1h-4zM564 627h4v1h-4zM563 628h2v1h-2zM566 628h2v1h-2zM563 629h6v1h-6zM566 630h2v1h-2zM566 631h2v1h-2zM571 623h4v1h-4zM570 624h2v1h-2zM574 624h2v1h-2zM570 625h2v1h-2zM570 626h2v1h-2zM570 627h5v1h-5zM570 628h2v1h-2zM574 628h2v1h-2zM570 629h2v1h-2zM574 629h2v1h-2zM570 630h2v1h-2zM574 630h2v1h-2zM571 631h4v1h-4z"/><rect x="450" y="636" width="15" height="13" fill="#000"/><path fill="#ffff00" d="M451 638h6v1h-6zM451 639h2v1h-2zM451 640h2v1h-2zM451 641h5v1h-5zM451 642h2v1h-2zM455 642h2v1h-2zM455 643h2v1h-2zM455 644h2v1h-2zM451 645h2v1h-2zM455 645h2v1h-2zM452 646h4v1h-4zM461 638h2v1h-2zM460 639h3v1h-3zM460 640h3v1h-3zM459 641h4v1h-4zM459 642h4v1h-4zM458 643h2v1h-2zM461 643h2v1h-2zM458 644h6v1h-6zM461 645h2v1h-2zM461 646h2v1h-2z"/><rect x="511" y="632" width="15" height="13" fill="#000"/><path fill="#ff0080" d="M512 634h6v1h-6zM512 635h6v1h-6zM516 636h2v1h-2zM515 637h2v1h-2zM515 638h2v1h-2zM514 639h2v1h-2zM513 640h2v1h-2zM513 641h2v1h-2zM513 642h2v1h-2zM522 634h2v1h-2zM521 635h3v1h-3zM521 636h3v1h-3zM520 637h4v1h-4zM520 638h4v1h-4zM519 639h2v1h-2zM522 639h2v1h-2zM519 640h6v1h-6zM522 641h2v1h-2zM522 642h2v1h-2z"/><rect x="538" y="630" width="15" height="13" fill="#000"/><path fill="#ffff00" d="M540 632h4v1h-4zM539 633h2v1h-2zM543 633h2v1h-2zM539 634h2v1h-2zM539 635h2v1h-2zM539 636h5v1h-5zM539 637h2v1h-2zM543 637h2v1h-2zM539 638h2v1h-2zM543 638h2v1h-2zM539 639h2v1h-2zM543 639h2v1h-2zM540 640h4v1h-4zM548 632h2v1h-2zM546 633h4v1h-4zM548 634h2v1h-2zM548 635h2v1h-2zM548 636h2v1h-2zM548 637h2v1h-2zM548 638h2v1h-2zM548 639h2v1h-2zM548 640h2v1h-2z"/><rect x="612" y="647" width="15" height="13" fill="#000"/><path fill="#ffff00" d="M613 649h6v1h-6zM613 650h2v1h-2zM613 651h2v1h-2zM613 652h5v1h-5zM613 653h2v1h-2zM617 653h2v1h-2zM617 654h2v1h-2zM617 655h2v1h-2zM613 656h2v1h-2zM617 656h2v1h-2zM614 657h4v1h-4zM621 649h4v1h-4zM620 650h2v1h-2zM624 650h2v1h-2zM620 651h2v1h-2zM624 651h2v1h-2zM620 652h2v1h-2zM624 652h2v1h-2zM620 653h2v1h-2zM624 653h2v1h-2zM620 654h2v1h-2zM624 654h2v1h-2zM620 655h2v1h-2zM624 655h2v1h-2zM620 656h2v1h-2zM624 656h2v1h-2zM621 657h4v1h-4z"/><rect x="595" y="654" width="15" height="13" fill="#000"/><path fill="#ffff00" d="M596 656h6v1h-6zM596 657h2v1h-2zM596 658h2v1h-2zM596 659h5v1h-5zM596 660h2v1h-2zM600 660h2v1h-2zM600 661h2v1h-2zM600 662h2v1h-2zM596 663h2v1h-2zM600 663h2v1h-2zM597 664h4v1h-4zM604 656h4v1h-4zM603 657h2v1h-2zM607 657h2v1h-2zM603 658h2v1h-2zM607 658h2v1h-2zM603 659h2v1h-2zM607 659h2v1h-2zM603 660h2v1h-2zM607 660h2v1h-2zM603 661h2v1h-2zM607 661h2v1h-2zM603 662h2v1h-2zM607 662h2v1h-2zM603 663h2v1h-2zM607 663h2v1h-2zM604 664h4v1h-4z"/><rect x="523" y="662" width="15" height="13" fill="#000"/><path fill="#ff0080" d="M525 664h4v1h-4zM524 665h2v1h-2zM528 665h2v1h-2zM524 666h2v1h-2zM524 667h2v1h-2zM524 668h5v1h-5zM524 669h2v1h-2zM528 669h2v1h-2zM524 670h2v1h-2zM528 670h2v1h-2zM524 671h2v1h-2zM528 671h2v1h-2zM525 672h4v1h-4zM531 664h6v1h-6zM531 665h2v1h-2zM531 666h2v1h-2zM531 667h5v1h-5zM531 668h2v1h-2zM535 668h2v1h-2zM535 669h2v1h-2zM535 670h2v1h-2zM531 671h2v1h-2zM535 671h2v1h-2zM532 672h4v1h-4z"/><rect x="570" y="670" width="15" height="13" fill="#000"/><path fill="#ff0080" d="M571 672h6v1h-6zM571 673h6v1h-6zM575 674h2v1h-2zM574 675h2v1h-2zM574 676h2v1h-2zM573 677h2v1h-2zM572 678h2v1h-2zM572 679h2v1h-2zM572 680h2v1h-2zM579 672h4v1h-4zM578 673h2v1h-2zM582 673h2v1h-2zM578 674h2v1h-2zM578 675h2v1h-2zM578 676h5v1h-5zM578 677h2v1h-2zM582 677h2v1h-2zM578 678h2v1h-2zM582 678h2v1h-2zM578 679h2v1h-2zM582 679h2v1h-2zM579 680h4v1h-4z"/><rect x="597" y="674" width="15" height="13" fill="#000"/><path fill="#ffff00" d="M601 676h2v1h-2zM600 677h3v1h-3zM600 678h3v1h-3zM599 679h4v1h-4zM599 680h4v1h-4zM598 681h2v1h-2zM601 681h2v1h-2zM598 682h6v1h-6zM601 683h2v1h-2zM601 684h2v1h-2zM606 676h4v1h-4zM605 677h2v1h-2zM609 677h2v1h-2zM609 678h2v1h-2zM609 679h2v1h-2zM607 680h3v1h-3zM609 681h2v1h-2zM609 682h2v1h-2zM605 683h2v1h-2zM609 683h2v1h-2zM606 684h4v1h-4z"/><rect x="627" y="689" width="15" height="13" fill="#000"/><path fill="#00ffff" d="M629 691h4v1h-4zM628 692h2v1h-2zM632 692h2v1h-2zM632 693h2v1h-2zM632 694h2v1h-2zM630 695h3v1h-3zM632 696h2v1h-2zM632 697h2v1h-2zM628 698h2v1h-2zM632 698h2v1h-2zM629 699h4v1h-4zM636 691h4v1h-4zM635 692h2v1h-2zM639 692h2v1h-2zM639 693h2v1h-2zM639 694h2v1h-2zM637 695h3v1h-3zM639 696h2v1h-2zM639 697h2v1h-2zM635 698h2v1h-2zM639 698h2v1h-2zM636 699h4v1h-4z"/><rect x="517" y="680" width="15" height="13" fill="#000"/><path fill="#ffff00" d="M518 682h6v1h-6zM518 683h2v1h-2zM518 684h2v1h-2zM518 685h5v1h-5zM518 686h2v1h-2zM522 686h2v1h-2zM522 687h2v1h-2zM522 688h2v1h-2zM518 689h2v1h-2zM522 689h2v1h-2zM519 690h4v1h-4zM526 682h4v1h-4zM525 683h2v1h-2zM529 683h2v1h-2zM525 684h2v1h-2zM529 684h2v1h-2zM525 685h2v1h-2zM529 685h2v1h-2zM526 686h5v1h-5zM529 687h2v1h-2zM529 688h2v1h-2zM525 689h2v1h-2zM529 689h2v1h-2zM526 690h4v1h-4z"/><rect x="487" y="694" width="15" height="13" fill="#000"/><path fill="#ffff00" d="M488 696h6v1h-6zM488 697h2v1h-2zM488 698h2v1h-2zM488 699h5v1h-5zM488 700h2v1h-2zM492 700h2v1h-2zM492 701h2v1h-2zM492 702h2v1h-2zM488 703h2v1h-2zM492 703h2v1h-2zM489 704h4v1h-4zM498 696h2v1h-2zM497 697h3v1h-3zM497 698h3v1h-3zM496 699h4v1h-4zM496 700h4v1h-4zM495 701h2v1h-2zM498 701h2v1h-2zM495 702h6v1h-6zM498 703h2v1h-2zM498 704h2v1h-2z"/><rect x="466" y="699" width="15" height="13" fill="#000"/><path fill="#ffff00" d="M467 701h6v1h-6zM467 702h2v1h-2zM467 703h2v1h-2zM467 704h5v1h-5zM467 705h2v1h-2zM471 705h2v1h-2zM471 706h2v1h-2zM471 707h2v1h-2zM467 708h2v1h-2zM471 708h2v1h-2zM468 709h4v1h-4zM475 701h4v1h-4zM474 702h2v1h-2zM478 702h2v1h-2zM474 703h2v1h-2zM478 703h2v1h-2zM474 704h2v1h-2zM478 704h2v1h-2zM474 705h2v1h-2zM478 705h2v1h-2zM474 706h2v1h-2zM478 706h2v1h-2zM474 707h2v1h-2zM478 707h2v1h-2zM474 708h2v1h-2zM478 708h2v1h-2zM475 709h4v1h-4z"/><rect x="632" y="702" width="15" height="13" fill="#000"/><path fill="#ffff00" d="M633 704h6v1h-6zM633 705h2v1h-2zM633 706h2v1h-2zM633 707h5v1h-5zM633 708h2v1h-2zM637 708h2v1h-2zM637 709h2v1h-2zM637 710h2v1h-2zM633 711h2v1h-2zM637 711h2v1h-2zM634 712h4v1h-4zM640 704h6v1h-6zM640 705h6v1h-6zM644 706h2v1h-2zM643 707h2v1h-2zM643 708h2v1h-2zM642 709h2v1h-2zM641 710h2v1h-2zM641 711h2v1h-2zM641 712h2v1h-2z"/><rect x="464" y="714" width="15" height="13" fill="#000"/><path fill="#ffff00" d="M468 716h2v1h-2zM467 717h3v1h-3zM467 718h3v1h-3zM466 719h4v1h-4zM466 720h4v1h-4zM465 721h2v1h-2zM468 721h2v1h-2zM465 722h6v1h-6zM468 723h2v1h-2zM468 724h2v1h-2zM473 716h4v1h-4zM472 717h2v1h-2zM476 717h2v1h-2zM476 718h2v1h-2zM476 719h2v1h-2zM474 720h3v1h-3zM476 721h2v1h-2zM476 722h2v1h-2zM472 723h2v1h-2zM476 723h2v1h-2zM473 724h4v1h-4z"/><rect x="528" y="721" width="15" height="13" fill="#000"/><path fill="#ffff00" d="M532 723h2v1h-2zM531 724h3v1h-3zM531 725h3v1h-3zM530 726h4v1h-4zM530 727h4v1h-4zM529 728h2v1h-2zM532 728h2v1h-2zM529 729h6v1h-6zM532 730h2v1h-2zM532 731h2v1h-2zM537 723h4v1h-4zM536 724h2v1h-2zM540 724h2v1h-2zM536 725h2v1h-2zM540 725h2v1h-2zM536 726h2v1h-2zM540 726h2v1h-2zM537 727h4v1h-4zM536 728h2v1h-2zM540 728h2v1h-2zM536 729h2v1h-2zM540 729h2v1h-2zM536 730h2v1h-2zM540 730h2v1h-2zM537 731h4v1h-4z"/><rect x="551" y="723" width="15" height="13" fill="#000"/><path fill="#ffff00" d="M552 725h6v1h-6zM552 726h2v1h-2zM552 727h2v1h-2zM552 728h5v1h-5zM552 729h2v1h-2zM556 729h2v1h-2zM556 730h2v1h-2zM556 731h2v1h-2zM552 732h2v1h-2zM556 732h2v1h-2zM553 733h4v1h-4zM559 725h6v1h-6zM559 726h6v1h-6zM563 727h2v1h-2zM562 728h2v1h-2zM562 729h2v1h-2zM561 730h2v1h-2zM560 731h2v1h-2zM560 732h2v1h-2zM560 733h2v1h-2z"/><rect x="574" y="726" width="15" height="13" fill="#000"/><path fill="#ffff00" d="M578 728h2v1h-2zM577 729h3v1h-3zM577 730h3v1h-3zM576 731h4v1h-4zM576 732h4v1h-4zM575 733h2v1h-2zM578 733h2v1h-2zM575 734h6v1h-6zM578 735h2v1h-2zM578 736h2v1h-2zM583 728h4v1h-4zM582 729h2v1h-2zM586 729h2v1h-2zM586 730h2v1h-2zM586 731h2v1h-2zM584 732h3v1h-3zM586 733h2v1h-2zM586 734h2v1h-2zM582 735h2v1h-2zM586 735h2v1h-2zM583 736h4v1h-4z"/><rect x="611" y="724" width="15" height="13" fill="#000"/><path fill="#ffff00" d="M613 726h4v1h-4zM612 727h2v1h-2zM616 727h2v1h-2zM612 728h2v1h-2zM612 729h2v1h-2zM612 730h5v1h-5zM612 731h2v1h-2zM616 731h2v1h-2zM612 732h2v1h-2zM616 732h2v1h-2zM612 733h2v1h-2zM616 733h2v1h-2zM613 734h4v1h-4zM621 726h2v1h-2zM619 727h4v1h-4zM621 728h2v1h-2zM621 729h2v1h-2zM621 730h2v1h-2zM621 731h2v1h-2zM621 732h2v1h-2zM621 733h2v1h-2zM621 734h2v1h-2z"/><rect x="465" y="731" width="15" height="13" fill="#000"/><path fill="#ffff00" d="M466 733h6v1h-6zM466 734h2v1h-2zM466 735h2v1h-2zM466 736h5v1h-5zM466 737h2v1h-2zM470 737h2v1h-2zM470 738h2v1h-2zM470 739h2v1h-2zM466 740h2v1h-2zM470 740h2v1h-2zM467 741h4v1h-4zM474 733h4v1h-4zM473 734h2v1h-2zM477 734h2v1h-2zM473 735h2v1h-2zM477 735h2v1h-2zM473 736h2v1h-2zM477 736h2v1h-2zM473 737h2v1h-2zM477 737h2v1h-2zM473 738h2v1h-2zM477 738h2v1h-2zM473 739h2v1h-2zM477 739h2v1h-2zM473 740h2v1h-2zM477 740h2v1h-2zM474 741h4v1h-4z"/><rect x="486" y="736" width="15" height="13" fill="#000"/><path fill="#ff0080" d="M488 738h4v1h-4zM487 739h2v1h-2zM491 739h2v1h-2zM487 740h2v1h-2zM491 740h2v1h-2zM487 741h2v1h-2zM491 741h2v1h-2zM488 742h4v1h-4zM487 743h2v1h-2zM491 743h2v1h-2zM487 744h2v1h-2zM491 744h2v1h-2zM487 745h2v1h-2zM491 745h2v1h-2zM488 746h4v1h-4zM495 738h4v1h-4zM494 739h2v1h-2zM498 739h2v1h-2zM494 740h2v1h-2zM498 740h2v1h-2zM494 741h2v1h-2zM498 741h2v1h-2zM494 742h2v1h-2zM498 742h2v1h-2zM494 743h2v1h-2zM498 743h2v1h-2zM494 744h2v1h-2zM498 744h2v1h-2zM494 745h2v1h-2zM498 745h2v1h-2zM495 746h4v1h-4z"/><rect x="505" y="738" width="15" height="13" fill="#000"/><path fill="#ffff00" d="M506 740h6v1h-6zM506 741h2v1h-2zM506 742h2v1h-2zM506 743h5v1h-5zM506 744h2v1h-2zM510 744h2v1h-2zM510 745h2v1h-2zM510 746h2v1h-2zM506 747h2v1h-2zM510 747h2v1h-2zM507 748h4v1h-4zM513 740h6v1h-6zM513 741h6v1h-6zM517 742h2v1h-2zM516 743h2v1h-2zM516 744h2v1h-2zM515 745h2v1h-2zM514 746h2v1h-2zM514 747h2v1h-2zM514 748h2v1h-2z"/><rect x="598" y="735" width="15" height="13" fill="#000"/><path fill="#ff0080" d="M600 737h4v1h-4zM599 738h2v1h-2zM603 738h2v1h-2zM599 739h2v1h-2zM599 740h2v1h-2zM599 741h5v1h-5zM599 742h2v1h-2zM603 742h2v1h-2zM599 743h2v1h-2zM603 743h2v1h-2zM599 744h2v1h-2zM603 744h2v1h-2zM600 745h4v1h-4zM606 737h6v1h-6zM606 738h2v1h-2zM606 739h2v1h-2zM606 740h5v1h-5zM606 741h2v1h-2zM610 741h2v1h-2zM610 742h2v1h-2zM610 743h2v1h-2zM606 744h2v1h-2zM610 744h2v1h-2zM607 745h4v1h-4z"/><rect x="555" y="742" width="15" height="13" fill="#000"/><path fill="#ffff00" d="M556 744h6v1h-6zM556 745h2v1h-2zM556 746h2v1h-2zM556 747h5v1h-5zM556 748h2v1h-2zM560 748h2v1h-2zM560 749h2v1h-2zM560 750h2v1h-2zM556 751h2v1h-2zM560 751h2v1h-2zM557 752h4v1h-4zM566 744h2v1h-2zM565 745h3v1h-3zM565 746h3v1h-3zM564 747h4v1h-4zM564 748h4v1h-4zM563 749h2v1h-2zM566 749h2v1h-2zM563 750h6v1h-6zM566 751h2v1h-2zM566 752h2v1h-2z"/><rect x="494" y="748" width="15" height="13" fill="#000"/><path fill="#ff0080" d="M495 750h6v1h-6zM495 751h6v1h-6zM499 752h2v1h-2zM498 753h2v1h-2zM498 754h2v1h-2zM497 755h2v1h-2zM496 756h2v1h-2zM496 757h2v1h-2zM496 758h2v1h-2zM503 750h4v1h-4zM502 751h2v1h-2zM506 751h2v1h-2zM502 752h2v1h-2zM502 753h2v1h-2zM502 754h5v1h-5zM502 755h2v1h-2zM506 755h2v1h-2zM502 756h2v1h-2zM506 756h2v1h-2zM502 757h2v1h-2zM506 757h2v1h-2zM503 758h4v1h-4z"/><rect x="514" y="751" width="15" height="13" fill="#000"/><path fill="#ff0080" d="M516 753h4v1h-4zM515 754h2v1h-2zM519 754h2v1h-2zM515 755h2v1h-2zM519 755h2v1h-2zM515 756h2v1h-2zM519 756h2v1h-2zM516 757h4v1h-4zM515 758h2v1h-2zM519 758h2v1h-2zM515 759h2v1h-2zM519 759h2v1h-2zM515 760h2v1h-2zM519 760h2v1h-2zM516 761h4v1h-4zM523 753h4v1h-4zM522 754h2v1h-2zM526 754h2v1h-2zM522 755h2v1h-2zM526 755h2v1h-2zM522 756h2v1h-2zM526 756h2v1h-2zM522 757h2v1h-2zM526 757h2v1h-2zM522 758h2v1h-2zM526 758h2v1h-2zM522 759h2v1h-2zM526 759h2v1h-2zM522 760h2v1h-2zM526 760h2v1h-2zM523 761h4v1h-4z"/><rect x="531" y="754" width="15" height="13" fill="#000"/><path fill="#ffff00" d="M533 756h4v1h-4zM532 757h2v1h-2zM536 757h2v1h-2zM532 758h2v1h-2zM532 759h2v1h-2zM532 760h5v1h-5zM532 761h2v1h-2zM536 761h2v1h-2zM532 762h2v1h-2zM536 762h2v1h-2zM532 763h2v1h-2zM536 763h2v1h-2zM533 764h4v1h-4zM541 756h2v1h-2zM539 757h4v1h-4zM541 758h2v1h-2zM541 759h2v1h-2zM541 760h2v1h-2zM541 761h2v1h-2zM541 762h2v1h-2zM541 763h2v1h-2zM541 764h2v1h-2z"/><rect x="609" y="747" width="15" height="13" fill="#000"/><path fill="#ffff00" d="M611 749h4v1h-4zM610 750h2v1h-2zM614 750h2v1h-2zM610 751h2v1h-2zM610 752h2v1h-2zM610 753h5v1h-5zM610 754h2v1h-2zM614 754h2v1h-2zM610 755h2v1h-2zM614 755h2v1h-2zM610 756h2v1h-2zM614 756h2v1h-2zM611 757h4v1h-4zM619 749h2v1h-2zM617 750h4v1h-4zM619 751h2v1h-2zM619 752h2v1h-2zM619 753h2v1h-2zM619 754h2v1h-2zM619 755h2v1h-2zM619 756h2v1h-2zM619 757h2v1h-2z"/><rect x="625" y="756" width="15" height="13" fill="#000"/><path fill="#ff0080" d="M627 758h4v1h-4zM626 759h2v1h-2zM630 759h2v1h-2zM626 760h2v1h-2zM626 761h2v1h-2zM626 762h5v1h-5zM626 763h2v1h-2zM630 763h2v1h-2zM626 764h2v1h-2zM630 764h2v1h-2zM626 765h2v1h-2zM630 765h2v1h-2zM627 766h4v1h-4zM633 758h6v1h-6zM633 759h2v1h-2zM633 760h2v1h-2zM633 761h5v1h-5zM633 762h2v1h-2zM637 762h2v1h-2zM637 763h2v1h-2zM637 764h2v1h-2zM633 765h2v1h-2zM637 765h2v1h-2zM634 766h4v1h-4z"/><rect x="764" y="385" width="15" height="13" fill="#000"/><path fill="#ff0080" d="M766 387h4v1h-4zM765 388h2v1h-2zM769 388h2v1h-2zM765 389h2v1h-2zM769 389h2v1h-2zM765 390h2v1h-2zM769 390h2v1h-2zM766 391h4v1h-4zM765 392h2v1h-2zM769 392h2v1h-2zM765 393h2v1h-2zM769 393h2v1h-2zM765 394h2v1h-2zM769 394h2v1h-2zM766 395h4v1h-4zM773 387h4v1h-4zM772 388h2v1h-2zM776 388h2v1h-2zM776 389h2v1h-2zM776 390h2v1h-2zM774 391h3v1h-3zM776 392h2v1h-2zM776 393h2v1h-2zM772 394h2v1h-2zM776 394h2v1h-2zM773 395h4v1h-4z"/><rect x="808" y="391" width="15" height="13" fill="#000"/><path fill="#ffff00" d="M809 393h6v1h-6zM809 394h2v1h-2zM809 395h2v1h-2zM809 396h5v1h-5zM809 397h2v1h-2zM813 397h2v1h-2zM813 398h2v1h-2zM813 399h2v1h-2zM809 400h2v1h-2zM813 400h2v1h-2zM810 401h4v1h-4zM817 393h4v1h-4zM816 394h2v1h-2zM820 394h2v1h-2zM816 395h2v1h-2zM820 395h2v1h-2zM816 396h2v1h-2zM820 396h2v1h-2zM816 397h2v1h-2zM820 397h2v1h-2zM816 398h2v1h-2zM820 398h2v1h-2zM816 399h2v1h-2zM820 399h2v1h-2zM816 400h2v1h-2zM820 400h2v1h-2zM817 401h4v1h-4z"/><rect x="757" y="399" width="22" height="13" fill="#000"/><path fill="#ff0000" d="M760 401h2v1h-2zM758 402h4v1h-4zM760 403h2v1h-2zM760 404h2v1h-2zM760 405h2v1h-2zM760 406h2v1h-2zM760 407h2v1h-2zM760 408h2v1h-2zM760 409h2v1h-2zM766 401h4v1h-4zM765 402h2v1h-2zM769 402h2v1h-2zM765 403h2v1h-2zM769 403h2v1h-2zM765 404h2v1h-2zM769 404h2v1h-2zM765 405h2v1h-2zM769 405h2v1h-2zM765 406h2v1h-2zM769 406h2v1h-2zM765 407h2v1h-2zM769 407h2v1h-2zM765 408h2v1h-2zM769 408h2v1h-2zM766 409h4v1h-4zM773 401h4v1h-4zM772 402h2v1h-2zM776 402h2v1h-2zM772 403h2v1h-2zM776 403h2v1h-2zM772 404h2v1h-2zM776 404h2v1h-2zM772 405h2v1h-2zM776 405h2v1h-2zM772 406h2v1h-2zM776 406h2v1h-2zM772 407h2v1h-2zM776 407h2v1h-2zM772 408h2v1h-2zM776 408h2v1h-2zM773 409h4v1h-4z"/><rect x="785" y="402" width="15" height="13" fill="#000"/><path fill="#ffff00" d="M789 404h2v1h-2zM788 405h3v1h-3zM788 406h3v1h-3zM787 407h4v1h-4zM787 408h4v1h-4zM786 409h2v1h-2zM789 409h2v1h-2zM786 410h6v1h-6zM789 411h2v1h-2zM789 412h2v1h-2zM796 404h2v1h-2zM795 405h3v1h-3zM795 406h3v1h-3zM794 407h4v1h-4zM794 408h4v1h-4zM793 409h2v1h-2zM796 409h2v1h-2zM793 410h6v1h-6zM796 411h2v1h-2zM796 412h2v1h-2z"/><rect x="810" y="406" width="15" height="13" fill="#000"/><path fill="#ffff00" d="M814 408h2v1h-2zM813 409h3v1h-3zM813 410h3v1h-3zM812 411h4v1h-4zM812 412h4v1h-4zM811 413h2v1h-2zM814 413h2v1h-2zM811 414h6v1h-6zM814 415h2v1h-2zM814 416h2v1h-2zM819 408h4v1h-4zM818 409h2v1h-2zM822 409h2v1h-2zM818 410h2v1h-2zM822 410h2v1h-2zM818 411h2v1h-2zM822 411h2v1h-2zM819 412h4v1h-4zM818 413h2v1h-2zM822 413h2v1h-2zM818 414h2v1h-2zM822 414h2v1h-2zM818 415h2v1h-2zM822 415h2v1h-2zM819 416h4v1h-4z"/><rect x="846" y="406" width="15" height="13" fill="#000"/><path fill="#ff0080" d="M847 408h6v1h-6zM847 409h6v1h-6zM851 410h2v1h-2zM850 411h2v1h-2zM850 412h2v1h-2zM849 413h2v1h-2zM848 414h2v1h-2zM848 415h2v1h-2zM848 416h2v1h-2zM855 408h4v1h-4zM854 409h2v1h-2zM858 409h2v1h-2zM854 410h2v1h-2zM858 410h2v1h-2zM854 411h2v1h-2zM858 411h2v1h-2zM854 412h2v1h-2zM858 412h2v1h-2zM854 413h2v1h-2zM858 413h2v1h-2zM854 414h2v1h-2zM858 414h2v1h-2zM854 415h2v1h-2zM858 415h2v1h-2zM855 416h4v1h-4z"/><rect x="762" y="415" width="15" height="13" fill="#000"/><path fill="#ff0080" d="M763 417h6v1h-6zM763 418h6v1h-6zM767 419h2v1h-2zM766 420h2v1h-2zM766 421h2v1h-2zM765 422h2v1h-2zM764 423h2v1h-2zM764 424h2v1h-2zM764 425h2v1h-2zM771 417h4v1h-4zM770 418h2v1h-2zM774 418h2v1h-2zM770 419h2v1h-2zM774 419h2v1h-2zM770 420h2v1h-2zM774 420h2v1h-2zM771 421h4v1h-4zM770 422h2v1h-2zM774 422h2v1h-2zM770 423h2v1h-2zM774 423h2v1h-2zM770 424h2v1h-2zM774 424h2v1h-2zM771 425h4v1h-4z"/><rect x="844" y="426" width="15" height="13" fill="#000"/><path fill="#ff0080" d="M846 428h4v1h-4zM845 429h2v1h-2zM849 429h2v1h-2zM845 430h2v1h-2zM845 431h2v1h-2zM845 432h5v1h-5zM845 433h2v1h-2zM849 433h2v1h-2zM845 434h2v1h-2zM849 434h2v1h-2zM845 435h2v1h-2zM849 435h2v1h-2zM846 436h4v1h-4zM852 428h6v1h-6zM852 429h2v1h-2zM852 430h2v1h-2zM852 431h5v1h-5zM852 432h2v1h-2zM856 432h2v1h-2zM856 433h2v1h-2zM856 434h2v1h-2zM852 435h2v1h-2zM856 435h2v1h-2zM853 436h4v1h-4z"/><rect x="869" y="431" width="15" height="13" fill="#000"/><path fill="#ff0080" d="M871 433h4v1h-4zM870 434h2v1h-2zM874 434h2v1h-2zM870 435h2v1h-2zM870 436h2v1h-2zM870 437h5v1h-5zM870 438h2v1h-2zM874 438h2v1h-2zM870 439h2v1h-2zM874 439h2v1h-2zM870 440h2v1h-2zM874 440h2v1h-2zM871 441h4v1h-4zM878 433h4v1h-4zM877 434h2v1h-2zM881 434h2v1h-2zM881 435h2v1h-2zM881 436h2v1h-2zM879 437h3v1h-3zM881 438h2v1h-2zM881 439h2v1h-2zM877 440h2v1h-2zM881 440h2v1h-2zM878 441h4v1h-4z"/><rect x="760" y="434" width="15" height="13" fill="#000"/><path fill="#ff0080" d="M762 436h4v1h-4zM761 437h2v1h-2zM765 437h2v1h-2zM761 438h2v1h-2zM765 438h2v1h-2zM761 439h2v1h-2zM765 439h2v1h-2zM762 440h4v1h-4zM761 441h2v1h-2zM765 441h2v1h-2zM761 442h2v1h-2zM765 442h2v1h-2zM761 443h2v1h-2zM765 443h2v1h-2zM762 444h4v1h-4zM769 436h4v1h-4zM768 437h2v1h-2zM772 437h2v1h-2zM772 438h2v1h-2zM772 439h2v1h-2zM770 440h3v1h-3zM772 441h2v1h-2zM772 442h2v1h-2zM768 443h2v1h-2zM772 443h2v1h-2zM769 444h4v1h-4z"/><rect x="772" y="449" width="15" height="13" fill="#000"/><path fill="#ff0080" d="M773 451h6v1h-6zM773 452h6v1h-6zM777 453h2v1h-2zM776 454h2v1h-2zM776 455h2v1h-2zM775 456h2v1h-2zM774 457h2v1h-2zM774 458h2v1h-2zM774 459h2v1h-2zM783 451h2v1h-2zM782 452h3v1h-3zM782 453h3v1h-3zM781 454h4v1h-4zM781 455h4v1h-4zM780 456h2v1h-2zM783 456h2v1h-2zM780 457h6v1h-6zM783 458h2v1h-2zM783 459h2v1h-2z"/><rect x="833" y="450" width="15" height="13" fill="#000"/><path fill="#ff0080" d="M834 452h6v1h-6zM834 453h6v1h-6zM838 454h2v1h-2zM837 455h2v1h-2zM837 456h2v1h-2zM836 457h2v1h-2zM835 458h2v1h-2zM835 459h2v1h-2zM835 460h2v1h-2zM844 452h2v1h-2zM843 453h3v1h-3zM843 454h3v1h-3zM842 455h4v1h-4zM842 456h4v1h-4zM841 457h2v1h-2zM844 457h2v1h-2zM841 458h6v1h-6zM844 459h2v1h-2zM844 460h2v1h-2z"/><rect x="781" y="464" width="15" height="13" fill="#000"/><path fill="#ffff00" d="M782 466h6v1h-6zM782 467h2v1h-2zM782 468h2v1h-2zM782 469h5v1h-5zM782 470h2v1h-2zM786 470h2v1h-2zM786 471h2v1h-2zM786 472h2v1h-2zM782 473h2v1h-2zM786 473h2v1h-2zM783 474h4v1h-4zM790 466h4v1h-4zM789 467h2v1h-2zM793 467h2v1h-2zM789 468h2v1h-2zM793 468h2v1h-2zM789 469h2v1h-2zM793 469h2v1h-2zM789 470h2v1h-2zM793 470h2v1h-2zM789 471h2v1h-2zM793 471h2v1h-2zM789 472h2v1h-2zM793 472h2v1h-2zM789 473h2v1h-2zM793 473h2v1h-2zM790 474h4v1h-4z"/><rect x="829" y="464" width="15" height="13" fill="#000"/><path fill="#ff0080" d="M831 466h4v1h-4zM830 467h2v1h-2zM834 467h2v1h-2zM830 468h2v1h-2zM834 468h2v1h-2zM830 469h2v1h-2zM834 469h2v1h-2zM831 470h4v1h-4zM830 471h2v1h-2zM834 471h2v1h-2zM830 472h2v1h-2zM834 472h2v1h-2zM830 473h2v1h-2zM834 473h2v1h-2zM831 474h4v1h-4zM837 466h6v1h-6zM837 467h2v1h-2zM837 468h2v1h-2zM837 469h5v1h-5zM837 470h2v1h-2zM841 470h2v1h-2zM841 471h2v1h-2zM841 472h2v1h-2zM837 473h2v1h-2zM841 473h2v1h-2zM838 474h4v1h-4z"/><rect x="872" y="465" width="15" height="13" fill="#000"/><path fill="#ff0080" d="M873 467h6v1h-6zM873 468h6v1h-6zM877 469h2v1h-2zM876 470h2v1h-2zM876 471h2v1h-2zM875 472h2v1h-2zM874 473h2v1h-2zM874 474h2v1h-2zM874 475h2v1h-2zM881 467h4v1h-4zM880 468h2v1h-2zM884 468h2v1h-2zM884 469h2v1h-2zM884 470h2v1h-2zM883 471h2v1h-2zM882 472h2v1h-2zM881 473h2v1h-2zM880 474h2v1h-2zM880 475h6v1h-6z"/><rect x="794" y="479" width="15" height="13" fill="#000"/><path fill="#ffff00" d="M795 481h6v1h-6zM795 482h2v1h-2zM795 483h2v1h-2zM795 484h5v1h-5zM795 485h2v1h-2zM799 485h2v1h-2zM799 486h2v1h-2zM799 487h2v1h-2zM795 488h2v1h-2zM799 488h2v1h-2zM796 489h4v1h-4zM805 481h2v1h-2zM804 482h3v1h-3zM804 483h3v1h-3zM803 484h4v1h-4zM803 485h4v1h-4zM802 486h2v1h-2zM805 486h2v1h-2zM802 487h6v1h-6zM805 488h2v1h-2zM805 489h2v1h-2z"/><rect x="812" y="477" width="15" height="13" fill="#000"/><path fill="#ff0080" d="M814 479h4v1h-4zM813 480h2v1h-2zM817 480h2v1h-2zM813 481h2v1h-2zM813 482h2v1h-2zM813 483h5v1h-5zM813 484h2v1h-2zM817 484h2v1h-2zM813 485h2v1h-2zM817 485h2v1h-2zM813 486h2v1h-2zM817 486h2v1h-2zM814 487h4v1h-4zM821 479h4v1h-4zM820 480h2v1h-2zM824 480h2v1h-2zM820 481h2v1h-2zM824 481h2v1h-2zM820 482h2v1h-2zM824 482h2v1h-2zM821 483h5v1h-5zM824 484h2v1h-2zM824 485h2v1h-2zM820 486h2v1h-2zM824 486h2v1h-2zM821 487h4v1h-4z"/><rect x="831" y="476" width="15" height="13" fill="#000"/><path fill="#ffff00" d="M832 478h6v1h-6zM832 479h2v1h-2zM832 480h2v1h-2zM832 481h5v1h-5zM832 482h2v1h-2zM836 482h2v1h-2zM836 483h2v1h-2zM836 484h2v1h-2zM832 485h2v1h-2zM836 485h2v1h-2zM833 486h4v1h-4zM840 478h4v1h-4zM839 479h2v1h-2zM843 479h2v1h-2zM839 480h2v1h-2zM843 480h2v1h-2zM839 481h2v1h-2zM843 481h2v1h-2zM839 482h2v1h-2zM843 482h2v1h-2zM839 483h2v1h-2zM843 483h2v1h-2zM839 484h2v1h-2zM843 484h2v1h-2zM839 485h2v1h-2zM843 485h2v1h-2zM840 486h4v1h-4z"/><rect x="773" y="484" width="15" height="13" fill="#000"/><path fill="#ff0080" d="M775 486h4v1h-4zM774 487h2v1h-2zM778 487h2v1h-2zM774 488h2v1h-2zM774 489h2v1h-2zM774 490h5v1h-5zM774 491h2v1h-2zM778 491h2v1h-2zM774 492h2v1h-2zM778 492h2v1h-2zM774 493h2v1h-2zM778 493h2v1h-2zM775 494h4v1h-4zM782 486h4v1h-4zM781 487h2v1h-2zM785 487h2v1h-2zM781 488h2v1h-2zM785 488h2v1h-2zM781 489h2v1h-2zM785 489h2v1h-2zM782 490h5v1h-5zM785 491h2v1h-2zM785 492h2v1h-2zM781 493h2v1h-2zM785 493h2v1h-2zM782 494h4v1h-4z"/><rect x="719" y="491" width="15" height="13" fill="#000"/><path fill="#ff0000" d="M721 493h4v1h-4zM720 494h2v1h-2zM724 494h2v1h-2zM720 495h2v1h-2zM724 495h2v1h-2zM720 496h2v1h-2zM724 496h2v1h-2zM721 497h5v1h-5zM724 498h2v1h-2zM724 499h2v1h-2zM720 500h2v1h-2zM724 500h2v1h-2zM721 501h4v1h-4zM730 493h2v1h-2zM729 494h3v1h-3zM729 495h3v1h-3zM728 496h4v1h-4zM728 497h4v1h-4zM727 498h2v1h-2zM730 498h2v1h-2zM727 499h6v1h-6zM730 500h2v1h-2zM730 501h2v1h-2z"/><rect x="756" y="490" width="15" height="13" fill="#000"/><path fill="#ff0000" d="M758 492h4v1h-4zM757 493h2v1h-2zM761 493h2v1h-2zM757 494h2v1h-2zM761 494h2v1h-2zM757 495h2v1h-2zM761 495h2v1h-2zM758 496h5v1h-5zM761 497h2v1h-2zM761 498h2v1h-2zM757 499h2v1h-2zM761 499h2v1h-2zM758 500h4v1h-4zM766 492h2v1h-2zM764 493h4v1h-4zM766 494h2v1h-2zM766 495h2v1h-2zM766 496h2v1h-2zM766 497h2v1h-2zM766 498h2v1h-2zM766 499h2v1h-2zM766 500h2v1h-2z"/><rect x="782" y="495" width="15" height="13" fill="#000"/><path fill="#ffff00" d="M783 497h6v1h-6zM783 498h2v1h-2zM783 499h2v1h-2zM783 500h5v1h-5zM783 501h2v1h-2zM787 501h2v1h-2zM787 502h2v1h-2zM787 503h2v1h-2zM783 504h2v1h-2zM787 504h2v1h-2zM784 505h4v1h-4zM793 497h2v1h-2zM792 498h3v1h-3zM792 499h3v1h-3zM791 500h4v1h-4zM791 501h4v1h-4zM790 502h2v1h-2zM793 502h2v1h-2zM790 503h6v1h-6zM793 504h2v1h-2zM793 505h2v1h-2z"/><rect x="827" y="494" width="15" height="13" fill="#000"/><path fill="#ff0080" d="M829 496h4v1h-4zM828 497h2v1h-2zM832 497h2v1h-2zM828 498h2v1h-2zM828 499h2v1h-2zM828 500h5v1h-5zM828 501h2v1h-2zM832 501h2v1h-2zM828 502h2v1h-2zM832 502h2v1h-2zM828 503h2v1h-2zM832 503h2v1h-2zM829 504h4v1h-4zM835 496h6v1h-6zM835 497h2v1h-2zM835 498h2v1h-2zM835 499h5v1h-5zM835 500h2v1h-2zM839 500h2v1h-2zM839 501h2v1h-2zM839 502h2v1h-2zM835 503h2v1h-2zM839 503h2v1h-2zM836 504h4v1h-4z"/><rect x="855" y="490" width="15" height="13" fill="#000"/><path fill="#ffff00" d="M856 492h6v1h-6zM856 493h2v1h-2zM856 494h2v1h-2zM856 495h5v1h-5zM856 496h2v1h-2zM860 496h2v1h-2zM860 497h2v1h-2zM860 498h2v1h-2zM856 499h2v1h-2zM860 499h2v1h-2zM857 500h4v1h-4zM866 492h2v1h-2zM865 493h3v1h-3zM865 494h3v1h-3zM864 495h4v1h-4zM864 496h4v1h-4zM863 497h2v1h-2zM866 497h2v1h-2zM863 498h6v1h-6zM866 499h2v1h-2zM866 500h2v1h-2z"/><rect x="762" y="503" width="15" height="13" fill="#000"/><path fill="#ff0080" d="M763 505h6v1h-6zM763 506h6v1h-6zM767 507h2v1h-2zM766 508h2v1h-2zM766 509h2v1h-2zM765 510h2v1h-2zM764 511h2v1h-2zM764 512h2v1h-2zM764 513h2v1h-2zM771 505h4v1h-4zM770 506h2v1h-2zM774 506h2v1h-2zM774 507h2v1h-2zM774 508h2v1h-2zM773 509h2v1h-2zM772 510h2v1h-2zM771 511h2v1h-2zM770 512h2v1h-2zM770 513h6v1h-6z"/><rect x="738" y="509" width="15" height="13" fill="#000"/><path fill="#ffff00" d="M740 511h4v1h-4zM739 512h2v1h-2zM743 512h2v1h-2zM739 513h2v1h-2zM739 514h2v1h-2zM739 515h5v1h-5zM739 516h2v1h-2zM743 516h2v1h-2zM739 517h2v1h-2zM743 517h2v1h-2zM739 518h2v1h-2zM743 518h2v1h-2zM740 519h4v1h-4zM748 511h2v1h-2zM746 512h4v1h-4zM748 513h2v1h-2zM748 514h2v1h-2zM748 515h2v1h-2zM748 516h2v1h-2zM748 517h2v1h-2zM748 518h2v1h-2zM748 519h2v1h-2z"/><rect x="720" y="515" width="15" height="13" fill="#000"/><path fill="#ff0080" d="M722 517h4v1h-4zM721 518h2v1h-2zM725 518h2v1h-2zM721 519h2v1h-2zM725 519h2v1h-2zM721 520h2v1h-2zM725 520h2v1h-2zM722 521h4v1h-4zM721 522h2v1h-2zM725 522h2v1h-2zM721 523h2v1h-2zM725 523h2v1h-2zM721 524h2v1h-2zM725 524h2v1h-2zM722 525h4v1h-4zM729 517h4v1h-4zM728 518h2v1h-2zM732 518h2v1h-2zM728 519h2v1h-2zM732 519h2v1h-2zM728 520h2v1h-2zM732 520h2v1h-2zM728 521h2v1h-2zM732 521h2v1h-2zM728 522h2v1h-2zM732 522h2v1h-2zM728 523h2v1h-2zM732 523h2v1h-2zM728 524h2v1h-2zM732 524h2v1h-2zM729 525h4v1h-4z"/><rect x="772" y="516" width="15" height="13" fill="#000"/><path fill="#ffff00" d="M774 518h4v1h-4zM773 519h2v1h-2zM777 519h2v1h-2zM773 520h2v1h-2zM773 521h2v1h-2zM773 522h5v1h-5zM773 523h2v1h-2zM777 523h2v1h-2zM773 524h2v1h-2zM777 524h2v1h-2zM773 525h2v1h-2zM777 525h2v1h-2zM774 526h4v1h-4zM782 518h2v1h-2zM780 519h4v1h-4zM782 520h2v1h-2zM782 521h2v1h-2zM782 522h2v1h-2zM782 523h2v1h-2zM782 524h2v1h-2zM782 525h2v1h-2zM782 526h2v1h-2z"/><rect x="839" y="512" width="15" height="13" fill="#000"/><path fill="#ffff00" d="M840 514h6v1h-6zM840 515h2v1h-2zM840 516h2v1h-2zM840 517h5v1h-5zM840 518h2v1h-2zM844 518h2v1h-2zM844 519h2v1h-2zM844 520h2v1h-2zM840 521h2v1h-2zM844 521h2v1h-2zM841 522h4v1h-4zM850 514h2v1h-2zM849 515h3v1h-3zM849 516h3v1h-3zM848 517h4v1h-4zM848 518h4v1h-4zM847 519h2v1h-2zM850 519h2v1h-2zM847 520h6v1h-6zM850 521h2v1h-2zM850 522h2v1h-2z"/><rect x="869" y="517" width="15" height="13" fill="#000"/><path fill="#ff0080" d="M871 519h4v1h-4zM870 520h2v1h-2zM874 520h2v1h-2zM870 521h2v1h-2zM870 522h2v1h-2zM870 523h5v1h-5zM870 524h2v1h-2zM874 524h2v1h-2zM870 525h2v1h-2zM874 525h2v1h-2zM870 526h2v1h-2zM874 526h2v1h-2zM871 527h4v1h-4zM877 519h6v1h-6zM877 520h2v1h-2zM877 521h2v1h-2zM877 522h5v1h-5zM877 523h2v1h-2zM881 523h2v1h-2zM881 524h2v1h-2zM881 525h2v1h-2zM877 526h2v1h-2zM881 526h2v1h-2zM878 527h4v1h-4z"/><rect x="696" y="522" width="15" height="13" fill="#000"/><path fill="#ff0000" d="M698 524h4v1h-4zM697 525h2v1h-2zM701 525h2v1h-2zM697 526h2v1h-2zM701 526h2v1h-2zM697 527h2v1h-2zM701 527h2v1h-2zM698 528h5v1h-5zM701 529h2v1h-2zM701 530h2v1h-2zM697 531h2v1h-2zM701 531h2v1h-2zM698 532h4v1h-4zM706 524h2v1h-2zM704 525h4v1h-4zM706 526h2v1h-2zM706 527h2v1h-2zM706 528h2v1h-2zM706 529h2v1h-2zM706 530h2v1h-2zM706 531h2v1h-2zM706 532h2v1h-2z"/><rect x="740" y="522" width="15" height="13" fill="#000"/><path fill="#ffff00" d="M741 524h6v1h-6zM741 525h2v1h-2zM741 526h2v1h-2zM741 527h5v1h-5zM741 528h2v1h-2zM745 528h2v1h-2zM745 529h2v1h-2zM745 530h2v1h-2zM741 531h2v1h-2zM745 531h2v1h-2zM742 532h4v1h-4zM749 524h4v1h-4zM748 525h2v1h-2zM752 525h2v1h-2zM748 526h2v1h-2zM752 526h2v1h-2zM748 527h2v1h-2zM752 527h2v1h-2zM748 528h2v1h-2zM752 528h2v1h-2zM748 529h2v1h-2zM752 529h2v1h-2zM748 530h2v1h-2zM752 530h2v1h-2zM748 531h2v1h-2zM752 531h2v1h-2zM749 532h4v1h-4z"/><rect x="822" y="522" width="15" height="13" fill="#000"/><path fill="#ffff00" d="M826 524h2v1h-2zM825 525h3v1h-3zM825 526h3v1h-3zM824 527h4v1h-4zM824 528h4v1h-4zM823 529h2v1h-2zM826 529h2v1h-2zM823 530h6v1h-6zM826 531h2v1h-2zM826 532h2v1h-2zM831 524h4v1h-4zM830 525h2v1h-2zM834 525h2v1h-2zM830 526h2v1h-2zM830 527h2v1h-2zM830 528h5v1h-5zM830 529h2v1h-2zM834 529h2v1h-2zM830 530h2v1h-2zM834 530h2v1h-2zM830 531h2v1h-2zM834 531h2v1h-2zM831 532h4v1h-4z"/><rect x="852" y="525" width="15" height="13" fill="#000"/><path fill="#ffff00" d="M853 527h6v1h-6zM853 528h2v1h-2zM853 529h2v1h-2zM853 530h5v1h-5zM853 531h2v1h-2zM857 531h2v1h-2zM857 532h2v1h-2zM857 533h2v1h-2zM853 534h2v1h-2zM857 534h2v1h-2zM854 535h4v1h-4zM861 527h4v1h-4zM860 528h2v1h-2zM864 528h2v1h-2zM860 529h2v1h-2zM864 529h2v1h-2zM860 530h2v1h-2zM864 530h2v1h-2zM860 531h2v1h-2zM864 531h2v1h-2zM860 532h2v1h-2zM864 532h2v1h-2zM860 533h2v1h-2zM864 533h2v1h-2zM860 534h2v1h-2zM864 534h2v1h-2zM861 535h4v1h-4z"/><rect x="645" y="529" width="15" height="13" fill="#000"/><path fill="#ff0080" d="M647 531h4v1h-4zM646 532h2v1h-2zM650 532h2v1h-2zM646 533h2v1h-2zM650 533h2v1h-2zM646 534h2v1h-2zM650 534h2v1h-2zM647 535h4v1h-4zM646 536h2v1h-2zM650 536h2v1h-2zM646 537h2v1h-2zM650 537h2v1h-2zM646 538h2v1h-2zM650 538h2v1h-2zM647 539h4v1h-4zM653 531h6v1h-6zM653 532h6v1h-6zM657 533h2v1h-2zM656 534h2v1h-2zM656 535h2v1h-2zM655 536h2v1h-2zM654 537h2v1h-2zM654 538h2v1h-2zM654 539h2v1h-2z"/><rect x="681" y="537" width="15" height="13" fill="#000"/><path fill="#ff0080" d="M683 539h4v1h-4zM682 540h2v1h-2zM686 540h2v1h-2zM682 541h2v1h-2zM686 541h2v1h-2zM682 542h2v1h-2zM686 542h2v1h-2zM683 543h4v1h-4zM682 544h2v1h-2zM686 544h2v1h-2zM682 545h2v1h-2zM686 545h2v1h-2zM682 546h2v1h-2zM686 546h2v1h-2zM683 547h4v1h-4zM690 539h4v1h-4zM689 540h2v1h-2zM693 540h2v1h-2zM693 541h2v1h-2zM693 542h2v1h-2zM691 543h3v1h-3zM693 544h2v1h-2zM693 545h2v1h-2zM689 546h2v1h-2zM693 546h2v1h-2zM690 547h4v1h-4z"/><rect x="725" y="532" width="15" height="13" fill="#000"/><path fill="#ffff00" d="M726 534h6v1h-6zM726 535h2v1h-2zM726 536h2v1h-2zM726 537h5v1h-5zM726 538h2v1h-2zM730 538h2v1h-2zM730 539h2v1h-2zM730 540h2v1h-2zM726 541h2v1h-2zM730 541h2v1h-2zM727 542h4v1h-4zM736 534h2v1h-2zM735 535h3v1h-3zM735 536h3v1h-3zM734 537h4v1h-4zM734 538h4v1h-4zM733 539h2v1h-2zM736 539h2v1h-2zM733 540h6v1h-6zM736 541h2v1h-2zM736 542h2v1h-2z"/><rect x="777" y="535" width="15" height="13" fill="#000"/><path fill="#ffff00" d="M778 537h6v1h-6zM778 538h2v1h-2zM778 539h2v1h-2zM778 540h5v1h-5zM778 541h2v1h-2zM782 541h2v1h-2zM782 542h2v1h-2zM782 543h2v1h-2zM778 544h2v1h-2zM782 544h2v1h-2zM779 545h4v1h-4zM786 537h4v1h-4zM785 538h2v1h-2zM789 538h2v1h-2zM785 539h2v1h-2zM789 539h2v1h-2zM785 540h2v1h-2zM789 540h2v1h-2zM785 541h2v1h-2zM789 541h2v1h-2zM785 542h2v1h-2zM789 542h2v1h-2zM785 543h2v1h-2zM789 543h2v1h-2zM785 544h2v1h-2zM789 544h2v1h-2zM786 545h4v1h-4z"/><rect x="802" y="537" width="15" height="13" fill="#000"/><path fill="#ffff00" d="M806 539h2v1h-2zM805 540h3v1h-3zM805 541h3v1h-3zM804 542h4v1h-4zM804 543h4v1h-4zM803 544h2v1h-2zM806 544h2v1h-2zM803 545h6v1h-6zM806 546h2v1h-2zM806 547h2v1h-2zM811 539h4v1h-4zM810 540h2v1h-2zM814 540h2v1h-2zM810 541h2v1h-2zM810 542h2v1h-2zM810 543h5v1h-5zM810 544h2v1h-2zM814 544h2v1h-2zM810 545h2v1h-2zM814 545h2v1h-2zM810 546h2v1h-2zM814 546h2v1h-2zM811 547h4v1h-4z"/><rect x="833" y="539" width="15" height="13" fill="#000"/><path fill="#ffff00" d="M834 541h6v1h-6zM834 542h2v1h-2zM834 543h2v1h-2zM834 544h5v1h-5zM834 545h2v1h-2zM838 545h2v1h-2zM838 546h2v1h-2zM838 547h2v1h-2zM834 548h2v1h-2zM838 548h2v1h-2zM835 549h4v1h-4zM842 541h4v1h-4zM841 542h2v1h-2zM845 542h2v1h-2zM841 543h2v1h-2zM845 543h2v1h-2zM841 544h2v1h-2zM845 544h2v1h-2zM841 545h2v1h-2zM845 545h2v1h-2zM841 546h2v1h-2zM845 546h2v1h-2zM841 547h2v1h-2zM845 547h2v1h-2zM841 548h2v1h-2zM845 548h2v1h-2zM842 549h4v1h-4z"/><rect x="862" y="540" width="15" height="13" fill="#000"/><path fill="#ff0080" d="M864 542h4v1h-4zM863 543h2v1h-2zM867 543h2v1h-2zM863 544h2v1h-2zM863 545h2v1h-2zM863 546h5v1h-5zM863 547h2v1h-2zM867 547h2v1h-2zM863 548h2v1h-2zM867 548h2v1h-2zM863 549h2v1h-2zM867 549h2v1h-2zM864 550h4v1h-4zM870 542h6v1h-6zM870 543h2v1h-2zM870 544h2v1h-2zM870 545h5v1h-5zM870 546h2v1h-2zM874 546h2v1h-2zM874 547h2v1h-2zM874 548h2v1h-2zM870 549h2v1h-2zM874 549h2v1h-2zM871 550h4v1h-4z"/><rect x="723" y="548" width="15" height="13" fill="#000"/><path fill="#ffff00" d="M724 550h6v1h-6zM724 551h2v1h-2zM724 552h2v1h-2zM724 553h5v1h-5zM724 554h2v1h-2zM728 554h2v1h-2zM728 555h2v1h-2zM728 556h2v1h-2zM724 557h2v1h-2zM728 557h2v1h-2zM725 558h4v1h-4zM734 550h2v1h-2zM733 551h3v1h-3zM733 552h3v1h-3zM732 553h4v1h-4zM732 554h4v1h-4zM731 555h2v1h-2zM734 555h2v1h-2zM731 556h6v1h-6zM734 557h2v1h-2zM734 558h2v1h-2z"/><rect x="767" y="554" width="15" height="13" fill="#000"/><path fill="#ffff00" d="M769 556h4v1h-4zM768 557h2v1h-2zM772 557h2v1h-2zM768 558h2v1h-2zM768 559h2v1h-2zM768 560h5v1h-5zM768 561h2v1h-2zM772 561h2v1h-2zM768 562h2v1h-2zM772 562h2v1h-2zM768 563h2v1h-2zM772 563h2v1h-2zM769 564h4v1h-4zM777 556h2v1h-2zM775 557h4v1h-4zM777 558h2v1h-2zM777 559h2v1h-2zM777 560h2v1h-2zM777 561h2v1h-2zM777 562h2v1h-2zM777 563h2v1h-2zM777 564h2v1h-2z"/><rect x="677" y="558" width="15" height="13" fill="#000"/><path fill="#ff0080" d="M679 560h4v1h-4zM678 561h2v1h-2zM682 561h2v1h-2zM678 562h2v1h-2zM682 562h2v1h-2zM678 563h2v1h-2zM682 563h2v1h-2zM679 564h4v1h-4zM678 565h2v1h-2zM682 565h2v1h-2zM678 566h2v1h-2zM682 566h2v1h-2zM678 567h2v1h-2zM682 567h2v1h-2zM679 568h4v1h-4zM686 560h4v1h-4zM685 561h2v1h-2zM689 561h2v1h-2zM689 562h2v1h-2zM689 563h2v1h-2zM687 564h3v1h-3zM689 565h2v1h-2zM689 566h2v1h-2zM685 567h2v1h-2zM689 567h2v1h-2zM686 568h4v1h-4z"/><rect x="700" y="559" width="15" height="13" fill="#000"/><path fill="#ffff00" d="M701 561h6v1h-6zM701 562h2v1h-2zM701 563h2v1h-2zM701 564h5v1h-5zM701 565h2v1h-2zM705 565h2v1h-2zM705 566h2v1h-2zM705 567h2v1h-2zM701 568h2v1h-2zM705 568h2v1h-2zM702 569h4v1h-4zM711 561h2v1h-2zM710 562h3v1h-3zM710 563h3v1h-3zM709 564h4v1h-4zM709 565h4v1h-4zM708 566h2v1h-2zM711 566h2v1h-2zM708 567h6v1h-6zM711 568h2v1h-2zM711 569h2v1h-2z"/><rect x="717" y="560" width="15" height="13" fill="#000"/><path fill="#ffff00" d="M718 562h6v1h-6zM718 563h2v1h-2zM718 564h2v1h-2zM718 565h5v1h-5zM718 566h2v1h-2zM722 566h2v1h-2zM722 567h2v1h-2zM722 568h2v1h-2zM718 569h2v1h-2zM722 569h2v1h-2zM719 570h4v1h-4zM728 562h2v1h-2zM727 563h3v1h-3zM727 564h3v1h-3zM726 565h4v1h-4zM726 566h4v1h-4zM725 567h2v1h-2zM728 567h2v1h-2zM725 568h6v1h-6zM728 569h2v1h-2zM728 570h2v1h-2z"/><rect x="878" y="561" width="15" height="13" fill="#000"/><path fill="#ff0080" d="M880 563h4v1h-4zM879 564h2v1h-2zM883 564h2v1h-2zM879 565h2v1h-2zM879 566h2v1h-2zM879 567h5v1h-5zM879 568h2v1h-2zM883 568h2v1h-2zM879 569h2v1h-2zM883 569h2v1h-2zM879 570h2v1h-2zM883 570h2v1h-2zM880 571h4v1h-4zM886 563h6v1h-6zM886 564h2v1h-2zM886 565h2v1h-2zM886 566h5v1h-5zM886 567h2v1h-2zM890 567h2v1h-2zM890 568h2v1h-2zM890 569h2v1h-2zM886 570h2v1h-2zM890 570h2v1h-2zM887 571h4v1h-4z"/><rect x="919" y="444" width="15" height="13" fill="#000"/><path fill="#ff0080" d="M921 446h4v1h-4zM920 447h2v1h-2zM924 447h2v1h-2zM920 448h2v1h-2zM920 449h2v1h-2zM920 450h5v1h-5zM920 451h2v1h-2zM924 451h2v1h-2zM920 452h2v1h-2zM924 452h2v1h-2zM920 453h2v1h-2zM924 453h2v1h-2zM921 454h4v1h-4zM928 446h4v1h-4zM927 447h2v1h-2zM931 447h2v1h-2zM927 448h2v1h-2zM931 448h2v1h-2zM927 449h2v1h-2zM931 449h2v1h-2zM928 450h5v1h-5zM931 451h2v1h-2zM931 452h2v1h-2zM927 453h2v1h-2zM931 453h2v1h-2zM928 454h4v1h-4z"/><rect x="899" y="487" width="15" height="13" fill="#000"/><path fill="#ff0080" d="M901 489h4v1h-4zM900 490h2v1h-2zM904 490h2v1h-2zM900 491h2v1h-2zM900 492h2v1h-2zM900 493h5v1h-5zM900 494h2v1h-2zM904 494h2v1h-2zM900 495h2v1h-2zM904 495h2v1h-2zM900 496h2v1h-2zM904 496h2v1h-2zM901 497h4v1h-4zM907 489h6v1h-6zM907 490h2v1h-2zM907 491h2v1h-2zM907 492h5v1h-5zM907 493h2v1h-2zM911 493h2v1h-2zM911 494h2v1h-2zM911 495h2v1h-2zM907 496h2v1h-2zM911 496h2v1h-2zM908 497h4v1h-4z"/><rect x="902" y="508" width="15" height="13" fill="#000"/><path fill="#ffff00" d="M903 510h6v1h-6zM903 511h2v1h-2zM903 512h2v1h-2zM903 513h5v1h-5zM903 514h2v1h-2zM907 514h2v1h-2zM907 515h2v1h-2zM907 516h2v1h-2zM903 517h2v1h-2zM907 517h2v1h-2zM904 518h4v1h-4zM913 510h2v1h-2zM912 511h3v1h-3zM912 512h3v1h-3zM911 513h4v1h-4zM911 514h4v1h-4zM910 515h2v1h-2zM913 515h2v1h-2zM910 516h6v1h-6zM913 517h2v1h-2zM913 518h2v1h-2z"/><rect x="899" y="525" width="15" height="13" fill="#000"/><path fill="#ffff00" d="M900 527h6v1h-6zM900 528h2v1h-2zM900 529h2v1h-2zM900 530h5v1h-5zM900 531h2v1h-2zM904 531h2v1h-2zM904 532h2v1h-2zM904 533h2v1h-2zM900 534h2v1h-2zM904 534h2v1h-2zM901 535h4v1h-4zM908 527h4v1h-4zM907 528h2v1h-2zM911 528h2v1h-2zM907 529h2v1h-2zM911 529h2v1h-2zM907 530h2v1h-2zM911 530h2v1h-2zM907 531h2v1h-2zM911 531h2v1h-2zM907 532h2v1h-2zM911 532h2v1h-2zM907 533h2v1h-2zM911 533h2v1h-2zM907 534h2v1h-2zM911 534h2v1h-2zM908 535h4v1h-4z"/><rect x="914" y="555" width="15" height="13" fill="#000"/><path fill="#ffff00" d="M915 557h6v1h-6zM915 558h2v1h-2zM915 559h2v1h-2zM915 560h5v1h-5zM915 561h2v1h-2zM919 561h2v1h-2zM919 562h2v1h-2zM919 563h2v1h-2zM915 564h2v1h-2zM919 564h2v1h-2zM916 565h4v1h-4zM923 557h4v1h-4zM922 558h2v1h-2zM926 558h2v1h-2zM922 559h2v1h-2zM926 559h2v1h-2zM922 560h2v1h-2zM926 560h2v1h-2zM922 561h2v1h-2zM926 561h2v1h-2zM922 562h2v1h-2zM926 562h2v1h-2zM922 563h2v1h-2zM926 563h2v1h-2zM922 564h2v1h-2zM926 564h2v1h-2zM923 565h4v1h-4z"/><rect x="647" y="576" width="15" height="13" fill="#000"/><path fill="#ff0080" d="M649 578h4v1h-4zM648 579h2v1h-2zM652 579h2v1h-2zM648 580h2v1h-2zM652 580h2v1h-2zM648 581h2v1h-2zM652 581h2v1h-2zM649 582h4v1h-4zM648 583h2v1h-2zM652 583h2v1h-2zM648 584h2v1h-2zM652 584h2v1h-2zM648 585h2v1h-2zM652 585h2v1h-2zM649 586h4v1h-4zM656 578h4v1h-4zM655 579h2v1h-2zM659 579h2v1h-2zM655 580h2v1h-2zM659 580h2v1h-2zM655 581h2v1h-2zM659 581h2v1h-2zM655 582h2v1h-2zM659 582h2v1h-2zM655 583h2v1h-2zM659 583h2v1h-2zM655 584h2v1h-2zM659 584h2v1h-2zM655 585h2v1h-2zM659 585h2v1h-2zM656 586h4v1h-4z"/><rect x="666" y="577" width="15" height="13" fill="#000"/><path fill="#ff0080" d="M667 579h6v1h-6zM667 580h6v1h-6zM671 581h2v1h-2zM670 582h2v1h-2zM670 583h2v1h-2zM669 584h2v1h-2zM668 585h2v1h-2zM668 586h2v1h-2zM668 587h2v1h-2zM675 579h4v1h-4zM674 580h2v1h-2zM678 580h2v1h-2zM674 581h2v1h-2zM674 582h2v1h-2zM674 583h5v1h-5zM674 584h2v1h-2zM678 584h2v1h-2zM674 585h2v1h-2zM678 585h2v1h-2zM674 586h2v1h-2zM678 586h2v1h-2zM675 587h4v1h-4z"/><rect x="726" y="574" width="15" height="13" fill="#000"/><path fill="#ffff00" d="M727 576h6v1h-6zM727 577h2v1h-2zM727 578h2v1h-2zM727 579h5v1h-5zM727 580h2v1h-2zM731 580h2v1h-2zM731 581h2v1h-2zM731 582h2v1h-2zM727 583h2v1h-2zM731 583h2v1h-2zM728 584h4v1h-4zM737 576h2v1h-2zM736 577h3v1h-3zM736 578h3v1h-3zM735 579h4v1h-4zM735 580h4v1h-4zM734 581h2v1h-2zM737 581h2v1h-2zM734 582h6v1h-6zM737 583h2v1h-2zM737 584h2v1h-2z"/><rect x="761" y="579" width="22" height="13" fill="#000"/><path fill="#ff0000" d="M764 581h2v1h-2zM762 582h4v1h-4zM764 583h2v1h-2zM764 584h2v1h-2zM764 585h2v1h-2zM764 586h2v1h-2zM764 587h2v1h-2zM764 588h2v1h-2zM764 589h2v1h-2zM770 581h4v1h-4zM769 582h2v1h-2zM773 582h2v1h-2zM769 583h2v1h-2zM773 583h2v1h-2zM769 584h2v1h-2zM773 584h2v1h-2zM769 585h2v1h-2zM773 585h2v1h-2zM769 586h2v1h-2zM773 586h2v1h-2zM769 587h2v1h-2zM773 587h2v1h-2zM769 588h2v1h-2zM773 588h2v1h-2zM770 589h4v1h-4zM776 581h6v1h-6zM776 582h6v1h-6zM780 583h2v1h-2zM779 584h2v1h-2zM779 585h2v1h-2zM778 586h2v1h-2zM777 587h2v1h-2zM777 588h2v1h-2zM777 589h2v1h-2z"/><rect x="788" y="581" width="15" height="13" fill="#000"/><path fill="#ffff00" d="M792 583h2v1h-2zM791 584h3v1h-3zM791 585h3v1h-3zM790 586h4v1h-4zM790 587h4v1h-4zM789 588h2v1h-2zM792 588h2v1h-2zM789 589h6v1h-6zM792 590h2v1h-2zM792 591h2v1h-2zM797 583h4v1h-4zM796 584h2v1h-2zM800 584h2v1h-2zM796 585h2v1h-2zM796 586h2v1h-2zM796 587h5v1h-5zM796 588h2v1h-2zM800 588h2v1h-2zM796 589h2v1h-2zM800 589h2v1h-2zM796 590h2v1h-2zM800 590h2v1h-2zM797 591h4v1h-4z"/><rect x="816" y="584" width="22" height="13" fill="#000"/><path fill="#ff0000" d="M819 586h2v1h-2zM817 587h4v1h-4zM819 588h2v1h-2zM819 589h2v1h-2zM819 590h2v1h-2zM819 591h2v1h-2zM819 592h2v1h-2zM819 593h2v1h-2zM819 594h2v1h-2zM825 586h4v1h-4zM824 587h2v1h-2zM828 587h2v1h-2zM828 588h2v1h-2zM828 589h2v1h-2zM826 590h3v1h-3zM828 591h2v1h-2zM828 592h2v1h-2zM824 593h2v1h-2zM828 593h2v1h-2zM825 594h4v1h-4zM832 586h4v1h-4zM831 587h2v1h-2zM835 587h2v1h-2zM831 588h2v1h-2zM835 588h2v1h-2zM831 589h2v1h-2zM835 589h2v1h-2zM831 590h2v1h-2zM835 590h2v1h-2zM831 591h2v1h-2zM835 591h2v1h-2zM831 592h2v1h-2zM835 592h2v1h-2zM831 593h2v1h-2zM835 593h2v1h-2zM832 594h4v1h-4z"/><rect x="864" y="572" width="15" height="13" fill="#000"/><path fill="#ffff00" d="M865 574h6v1h-6zM865 575h2v1h-2zM865 576h2v1h-2zM865 577h5v1h-5zM865 578h2v1h-2zM869 578h2v1h-2zM869 579h2v1h-2zM869 580h2v1h-2zM865 581h2v1h-2zM869 581h2v1h-2zM866 582h4v1h-4zM872 574h6v1h-6zM872 575h6v1h-6zM876 576h2v1h-2zM875 577h2v1h-2zM875 578h2v1h-2zM874 579h2v1h-2zM873 580h2v1h-2zM873 581h2v1h-2zM873 582h2v1h-2z"/><rect x="694" y="571" width="15" height="13" fill="#000"/><path fill="#ffff00" d="M696 573h4v1h-4zM695 574h2v1h-2zM699 574h2v1h-2zM695 575h2v1h-2zM695 576h2v1h-2zM695 577h5v1h-5zM695 578h2v1h-2zM699 578h2v1h-2zM695 579h2v1h-2zM699 579h2v1h-2zM695 580h2v1h-2zM699 580h2v1h-2zM696 581h4v1h-4zM704 573h2v1h-2zM702 574h4v1h-4zM704 575h2v1h-2zM704 576h2v1h-2zM704 577h2v1h-2zM704 578h2v1h-2zM704 579h2v1h-2zM704 580h2v1h-2zM704 581h2v1h-2z"/><rect x="691" y="581" width="15" height="13" fill="#000"/><path fill="#ffff00" d="M692 583h6v1h-6zM692 584h2v1h-2zM692 585h2v1h-2zM692 586h5v1h-5zM692 587h2v1h-2zM696 587h2v1h-2zM696 588h2v1h-2zM696 589h2v1h-2zM692 590h2v1h-2zM696 590h2v1h-2zM693 591h4v1h-4zM700 583h4v1h-4zM699 584h2v1h-2zM703 584h2v1h-2zM699 585h2v1h-2zM703 585h2v1h-2zM699 586h2v1h-2zM703 586h2v1h-2zM699 587h2v1h-2zM703 587h2v1h-2zM699 588h2v1h-2zM703 588h2v1h-2zM699 589h2v1h-2zM703 589h2v1h-2zM699 590h2v1h-2zM703 590h2v1h-2zM700 591h4v1h-4z"/><rect x="654" y="588" width="15" height="13" fill="#000"/><path fill="#ff0080" d="M656 590h4v1h-4zM655 591h2v1h-2zM659 591h2v1h-2zM655 592h2v1h-2zM655 593h2v1h-2zM655 594h5v1h-5zM655 595h2v1h-2zM659 595h2v1h-2zM655 596h2v1h-2zM659 596h2v1h-2zM655 597h2v1h-2zM659 597h2v1h-2zM656 598h4v1h-4zM663 590h4v1h-4zM662 591h2v1h-2zM666 591h2v1h-2zM662 592h2v1h-2zM666 592h2v1h-2zM662 593h2v1h-2zM666 593h2v1h-2zM663 594h5v1h-5zM666 595h2v1h-2zM666 596h2v1h-2zM662 597h2v1h-2zM666 597h2v1h-2zM663 598h4v1h-4z"/><rect x="686" y="593" width="15" height="13" fill="#000"/><path fill="#ffff00" d="M690 595h2v1h-2zM689 596h3v1h-3zM689 597h3v1h-3zM688 598h4v1h-4zM688 599h4v1h-4zM687 600h2v1h-2zM690 600h2v1h-2zM687 601h6v1h-6zM690 602h2v1h-2zM690 603h2v1h-2zM695 595h4v1h-4zM694 596h2v1h-2zM698 596h2v1h-2zM698 597h2v1h-2zM698 598h2v1h-2zM696 599h3v1h-3zM698 600h2v1h-2zM698 601h2v1h-2zM694 602h2v1h-2zM698 602h2v1h-2zM695 603h4v1h-4z"/><rect x="734" y="599" width="15" height="13" fill="#000"/><path fill="#ffff00" d="M736 601h4v1h-4zM735 602h2v1h-2zM739 602h2v1h-2zM735 603h2v1h-2zM735 604h2v1h-2zM735 605h5v1h-5zM735 606h2v1h-2zM739 606h2v1h-2zM735 607h2v1h-2zM739 607h2v1h-2zM735 608h2v1h-2zM739 608h2v1h-2zM736 609h4v1h-4zM744 601h2v1h-2zM742 602h4v1h-4zM744 603h2v1h-2zM744 604h2v1h-2zM744 605h2v1h-2zM744 606h2v1h-2zM744 607h2v1h-2zM744 608h2v1h-2zM744 609h2v1h-2z"/><rect x="756" y="592" width="15" height="13" fill="#000"/><path fill="#ffff00" d="M758 594h4v1h-4zM757 595h2v1h-2zM761 595h2v1h-2zM757 596h2v1h-2zM757 597h2v1h-2zM757 598h5v1h-5zM757 599h2v1h-2zM761 599h2v1h-2zM757 600h2v1h-2zM761 600h2v1h-2zM757 601h2v1h-2zM761 601h2v1h-2zM758 602h4v1h-4zM766 594h2v1h-2zM764 595h4v1h-4zM766 596h2v1h-2zM766 597h2v1h-2zM766 598h2v1h-2zM766 599h2v1h-2zM766 600h2v1h-2zM766 601h2v1h-2zM766 602h2v1h-2z"/><rect x="750" y="605" width="15" height="13" fill="#000"/><path fill="#ffff00" d="M751 607h6v1h-6zM751 608h2v1h-2zM751 609h2v1h-2zM751 610h5v1h-5zM751 611h2v1h-2zM755 611h2v1h-2zM755 612h2v1h-2zM755 613h2v1h-2zM751 614h2v1h-2zM755 614h2v1h-2zM752 615h4v1h-4zM761 607h2v1h-2zM760 608h3v1h-3zM760 609h3v1h-3zM759 610h4v1h-4zM759 611h4v1h-4zM758 612h2v1h-2zM761 612h2v1h-2zM758 613h6v1h-6zM761 614h2v1h-2zM761 615h2v1h-2z"/><rect x="770" y="606" width="15" height="13" fill="#000"/><path fill="#ff0080" d="M772 608h4v1h-4zM771 609h2v1h-2zM775 609h2v1h-2zM771 610h2v1h-2zM775 610h2v1h-2zM771 611h2v1h-2zM775 611h2v1h-2zM772 612h4v1h-4zM771 613h2v1h-2zM775 613h2v1h-2zM771 614h2v1h-2zM775 614h2v1h-2zM771 615h2v1h-2zM775 615h2v1h-2zM772 616h4v1h-4zM778 608h6v1h-6zM778 609h6v1h-6zM782 610h2v1h-2zM781 611h2v1h-2zM781 612h2v1h-2zM780 613h2v1h-2zM779 614h2v1h-2zM779 615h2v1h-2zM779 616h2v1h-2z"/><rect x="793" y="603" width="15" height="13" fill="#000"/><path fill="#ffff00" d="M794 605h6v1h-6zM794 606h2v1h-2zM794 607h2v1h-2zM794 608h5v1h-5zM794 609h2v1h-2zM798 609h2v1h-2zM798 610h2v1h-2zM798 611h2v1h-2zM794 612h2v1h-2zM798 612h2v1h-2zM795 613h4v1h-4zM802 605h4v1h-4zM801 606h2v1h-2zM805 606h2v1h-2zM801 607h2v1h-2zM805 607h2v1h-2zM801 608h2v1h-2zM805 608h2v1h-2zM801 609h2v1h-2zM805 609h2v1h-2zM801 610h2v1h-2zM805 610h2v1h-2zM801 611h2v1h-2zM805 611h2v1h-2zM801 612h2v1h-2zM805 612h2v1h-2zM802 613h4v1h-4z"/><rect x="813" y="599" width="15" height="13" fill="#000"/><path fill="#ff0080" d="M814 601h6v1h-6zM814 602h6v1h-6zM818 603h2v1h-2zM817 604h2v1h-2zM817 605h2v1h-2zM816 606h2v1h-2zM815 607h2v1h-2zM815 608h2v1h-2zM815 609h2v1h-2zM822 601h4v1h-4zM821 602h2v1h-2zM825 602h2v1h-2zM825 603h2v1h-2zM825 604h2v1h-2zM824 605h2v1h-2zM823 606h2v1h-2zM822 607h2v1h-2zM821 608h2v1h-2zM821 609h6v1h-6z"/><rect x="837" y="600" width="15" height="13" fill="#000"/><path fill="#ff0080" d="M839 602h4v1h-4zM838 603h2v1h-2zM842 603h2v1h-2zM838 604h2v1h-2zM838 605h2v1h-2zM838 606h5v1h-5zM838 607h2v1h-2zM842 607h2v1h-2zM838 608h2v1h-2zM842 608h2v1h-2zM838 609h2v1h-2zM842 609h2v1h-2zM839 610h4v1h-4zM846 602h4v1h-4zM845 603h2v1h-2zM849 603h2v1h-2zM845 604h2v1h-2zM849 604h2v1h-2zM845 605h2v1h-2zM849 605h2v1h-2zM846 606h5v1h-5zM849 607h2v1h-2zM849 608h2v1h-2zM845 609h2v1h-2zM849 609h2v1h-2zM846 610h4v1h-4z"/><rect x="859" y="599" width="15" height="13" fill="#000"/><path fill="#ff0080" d="M861 601h4v1h-4zM860 602h2v1h-2zM864 602h2v1h-2zM860 603h2v1h-2zM860 604h2v1h-2zM860 605h5v1h-5zM860 606h2v1h-2zM864 606h2v1h-2zM860 607h2v1h-2zM864 607h2v1h-2zM860 608h2v1h-2zM864 608h2v1h-2zM861 609h4v1h-4zM867 601h6v1h-6zM867 602h2v1h-2zM867 603h2v1h-2zM867 604h5v1h-5zM867 605h2v1h-2zM871 605h2v1h-2zM871 606h2v1h-2zM871 607h2v1h-2zM867 608h2v1h-2zM871 608h2v1h-2zM868 609h4v1h-4z"/><rect x="879" y="603" width="15" height="13" fill="#000"/><path fill="#ff0080" d="M881 605h4v1h-4zM880 606h2v1h-2zM884 606h2v1h-2zM880 607h2v1h-2zM884 607h2v1h-2zM880 608h2v1h-2zM884 608h2v1h-2zM881 609h4v1h-4zM880 610h2v1h-2zM884 610h2v1h-2zM880 611h2v1h-2zM884 611h2v1h-2zM880 612h2v1h-2zM884 612h2v1h-2zM881 613h4v1h-4zM887 605h6v1h-6zM887 606h6v1h-6zM891 607h2v1h-2zM890 608h2v1h-2zM890 609h2v1h-2zM889 610h2v1h-2zM888 611h2v1h-2zM888 612h2v1h-2zM888 613h2v1h-2z"/><rect x="649" y="600" width="15" height="13" fill="#000"/><path fill="#ff0080" d="M651 602h4v1h-4zM650 603h2v1h-2zM654 603h2v1h-2zM650 604h2v1h-2zM650 605h2v1h-2zM650 606h5v1h-5zM650 607h2v1h-2zM654 607h2v1h-2zM650 608h2v1h-2zM654 608h2v1h-2zM650 609h2v1h-2zM654 609h2v1h-2zM651 610h4v1h-4zM658 602h4v1h-4zM657 603h2v1h-2zM661 603h2v1h-2zM657 604h2v1h-2zM661 604h2v1h-2zM657 605h2v1h-2zM661 605h2v1h-2zM658 606h5v1h-5zM661 607h2v1h-2zM661 608h2v1h-2zM657 609h2v1h-2zM661 609h2v1h-2zM658 610h4v1h-4z"/><rect x="675" y="607" width="15" height="13" fill="#000"/><path fill="#ffff00" d="M676 609h6v1h-6zM676 610h2v1h-2zM676 611h2v1h-2zM676 612h5v1h-5zM676 613h2v1h-2zM680 613h2v1h-2zM680 614h2v1h-2zM680 615h2v1h-2zM676 616h2v1h-2zM680 616h2v1h-2zM677 617h4v1h-4zM686 609h2v1h-2zM685 610h3v1h-3zM685 611h3v1h-3zM684 612h4v1h-4zM684 613h4v1h-4zM683 614h2v1h-2zM686 614h2v1h-2zM683 615h6v1h-6zM686 616h2v1h-2zM686 617h2v1h-2z"/><rect x="705" y="607" width="15" height="13" fill="#000"/><path fill="#ffff00" d="M706 609h6v1h-6zM706 610h2v1h-2zM706 611h2v1h-2zM706 612h5v1h-5zM706 613h2v1h-2zM710 613h2v1h-2zM710 614h2v1h-2zM710 615h2v1h-2zM706 616h2v1h-2zM710 616h2v1h-2zM707 617h4v1h-4zM713 609h6v1h-6zM713 610h6v1h-6zM717 611h2v1h-2zM716 612h2v1h-2zM716 613h2v1h-2zM715 614h2v1h-2zM714 615h2v1h-2zM714 616h2v1h-2zM714 617h2v1h-2z"/><rect x="656" y="617" width="15" height="13" fill="#000"/><path fill="#ffff00" d="M660 619h2v1h-2zM659 620h3v1h-3zM659 621h3v1h-3zM658 622h4v1h-4zM658 623h4v1h-4zM657 624h2v1h-2zM660 624h2v1h-2zM657 625h6v1h-6zM660 626h2v1h-2zM660 627h2v1h-2zM665 619h4v1h-4zM664 620h2v1h-2zM668 620h2v1h-2zM664 621h2v1h-2zM664 622h2v1h-2zM664 623h5v1h-5zM664 624h2v1h-2zM668 624h2v1h-2zM664 625h2v1h-2zM668 625h2v1h-2zM664 626h2v1h-2zM668 626h2v1h-2zM665 627h4v1h-4z"/><rect x="829" y="615" width="15" height="13" fill="#000"/><path fill="#ffff00" d="M831 617h4v1h-4zM830 618h2v1h-2zM834 618h2v1h-2zM830 619h2v1h-2zM830 620h2v1h-2zM830 621h5v1h-5zM830 622h2v1h-2zM834 622h2v1h-2zM830 623h2v1h-2zM834 623h2v1h-2zM830 624h2v1h-2zM834 624h2v1h-2zM831 625h4v1h-4zM839 617h2v1h-2zM837 618h4v1h-4zM839 619h2v1h-2zM839 620h2v1h-2zM839 621h2v1h-2zM839 622h2v1h-2zM839 623h2v1h-2zM839 624h2v1h-2zM839 625h2v1h-2z"/><rect x="856" y="619" width="15" height="13" fill="#000"/><path fill="#ff0080" d="M857 621h6v1h-6zM857 622h6v1h-6zM861 623h2v1h-2zM860 624h2v1h-2zM860 625h2v1h-2zM859 626h2v1h-2zM858 627h2v1h-2zM858 628h2v1h-2zM858 629h2v1h-2zM865 621h4v1h-4zM864 622h2v1h-2zM868 622h2v1h-2zM868 623h2v1h-2zM868 624h2v1h-2zM867 625h2v1h-2zM866 626h2v1h-2zM865 627h2v1h-2zM864 628h2v1h-2zM864 629h6v1h-6z"/><rect x="874" y="622" width="15" height="13" fill="#000"/><path fill="#ff0080" d="M876 624h4v1h-4zM875 625h2v1h-2zM879 625h2v1h-2zM875 626h2v1h-2zM875 627h2v1h-2zM875 628h5v1h-5zM875 629h2v1h-2zM879 629h2v1h-2zM875 630h2v1h-2zM879 630h2v1h-2zM875 631h2v1h-2zM879 631h2v1h-2zM876 632h4v1h-4zM882 624h6v1h-6zM882 625h2v1h-2zM882 626h2v1h-2zM882 627h5v1h-5zM882 628h2v1h-2zM886 628h2v1h-2zM886 629h2v1h-2zM886 630h2v1h-2zM882 631h2v1h-2zM886 631h2v1h-2zM883 632h4v1h-4z"/><rect x="713" y="622" width="15" height="13" fill="#000"/><path fill="#ff0080" d="M715 624h4v1h-4zM714 625h2v1h-2zM718 625h2v1h-2zM714 626h2v1h-2zM714 627h2v1h-2zM714 628h5v1h-5zM714 629h2v1h-2zM718 629h2v1h-2zM714 630h2v1h-2zM718 630h2v1h-2zM714 631h2v1h-2zM718 631h2v1h-2zM715 632h4v1h-4zM722 624h4v1h-4zM721 625h2v1h-2zM725 625h2v1h-2zM721 626h2v1h-2zM725 626h2v1h-2zM721 627h2v1h-2zM725 627h2v1h-2zM722 628h5v1h-5zM725 629h2v1h-2zM725 630h2v1h-2zM721 631h2v1h-2zM725 631h2v1h-2zM722 632h4v1h-4z"/><rect x="739" y="619" width="15" height="13" fill="#000"/><path fill="#ffff00" d="M743 621h2v1h-2zM742 622h3v1h-3zM742 623h3v1h-3zM741 624h4v1h-4zM741 625h4v1h-4zM740 626h2v1h-2zM743 626h2v1h-2zM740 627h6v1h-6zM743 628h2v1h-2zM743 629h2v1h-2zM748 621h4v1h-4zM747 622h2v1h-2zM751 622h2v1h-2zM747 623h2v1h-2zM747 624h2v1h-2zM747 625h5v1h-5zM747 626h2v1h-2zM751 626h2v1h-2zM747 627h2v1h-2zM751 627h2v1h-2zM747 628h2v1h-2zM751 628h2v1h-2zM748 629h4v1h-4z"/><rect x="824" y="627" width="15" height="13" fill="#000"/><path fill="#ff0000" d="M826 629h4v1h-4zM825 630h2v1h-2zM829 630h2v1h-2zM825 631h2v1h-2zM829 631h2v1h-2zM825 632h2v1h-2zM829 632h2v1h-2zM826 633h5v1h-5zM829 634h2v1h-2zM829 635h2v1h-2zM825 636h2v1h-2zM829 636h2v1h-2zM826 637h4v1h-4zM834 629h2v1h-2zM832 630h4v1h-4zM834 631h2v1h-2zM834 632h2v1h-2zM834 633h2v1h-2zM834 634h2v1h-2zM834 635h2v1h-2zM834 636h2v1h-2zM834 637h2v1h-2z"/><rect x="682" y="624" width="15" height="13" fill="#000"/><path fill="#ffff00" d="M683 626h6v1h-6zM683 627h2v1h-2zM683 628h2v1h-2zM683 629h5v1h-5zM683 630h2v1h-2zM687 630h2v1h-2zM687 631h2v1h-2zM687 632h2v1h-2zM683 633h2v1h-2zM687 633h2v1h-2zM684 634h4v1h-4zM691 626h4v1h-4zM690 627h2v1h-2zM694 627h2v1h-2zM690 628h2v1h-2zM694 628h2v1h-2zM690 629h2v1h-2zM694 629h2v1h-2zM690 630h2v1h-2zM694 630h2v1h-2zM690 631h2v1h-2zM694 631h2v1h-2zM690 632h2v1h-2zM694 632h2v1h-2zM690 633h2v1h-2zM694 633h2v1h-2zM691 634h4v1h-4z"/><rect x="642" y="631" width="15" height="13" fill="#000"/><path fill="#ffff00" d="M643 633h6v1h-6zM643 634h2v1h-2zM643 635h2v1h-2zM643 636h5v1h-5zM643 637h2v1h-2zM647 637h2v1h-2zM647 638h2v1h-2zM647 639h2v1h-2zM643 640h2v1h-2zM647 640h2v1h-2zM644 641h4v1h-4zM650 633h6v1h-6zM650 634h6v1h-6zM654 635h2v1h-2zM653 636h2v1h-2zM653 637h2v1h-2zM652 638h2v1h-2zM651 639h2v1h-2zM651 640h2v1h-2zM651 641h2v1h-2z"/><rect x="725" y="633" width="15" height="13" fill="#000"/><path fill="#ff0080" d="M726 635h6v1h-6zM726 636h6v1h-6zM730 637h2v1h-2zM729 638h2v1h-2zM729 639h2v1h-2zM728 640h2v1h-2zM727 641h2v1h-2zM727 642h2v1h-2zM727 643h2v1h-2zM734 635h4v1h-4zM733 636h2v1h-2zM737 636h2v1h-2zM733 637h2v1h-2zM733 638h2v1h-2zM733 639h5v1h-5zM733 640h2v1h-2zM737 640h2v1h-2zM733 641h2v1h-2zM737 641h2v1h-2zM733 642h2v1h-2zM737 642h2v1h-2zM734 643h4v1h-4z"/><rect x="758" y="627" width="15" height="13" fill="#000"/><path fill="#ff0080" d="M760 629h4v1h-4zM759 630h2v1h-2zM763 630h2v1h-2zM759 631h2v1h-2zM759 632h2v1h-2zM759 633h5v1h-5zM759 634h2v1h-2zM763 634h2v1h-2zM759 635h2v1h-2zM763 635h2v1h-2zM759 636h2v1h-2zM763 636h2v1h-2zM760 637h4v1h-4zM767 629h4v1h-4zM766 630h2v1h-2zM770 630h2v1h-2zM766 631h2v1h-2zM770 631h2v1h-2zM766 632h2v1h-2zM770 632h2v1h-2zM767 633h5v1h-5zM770 634h2v1h-2zM770 635h2v1h-2zM766 636h2v1h-2zM770 636h2v1h-2zM767 637h4v1h-4z"/><rect x="775" y="630" width="15" height="13" fill="#000"/><path fill="#ffff00" d="M776 632h6v1h-6zM776 633h2v1h-2zM776 634h2v1h-2zM776 635h5v1h-5zM776 636h2v1h-2zM780 636h2v1h-2zM780 637h2v1h-2zM780 638h2v1h-2zM776 639h2v1h-2zM780 639h2v1h-2zM777 640h4v1h-4zM783 632h6v1h-6zM783 633h6v1h-6zM787 634h2v1h-2zM786 635h2v1h-2zM786 636h2v1h-2zM785 637h2v1h-2zM784 638h2v1h-2zM784 639h2v1h-2zM784 640h2v1h-2z"/><rect x="805" y="633" width="15" height="13" fill="#000"/><path fill="#ff0000" d="M807 635h4v1h-4zM806 636h2v1h-2zM810 636h2v1h-2zM806 637h2v1h-2zM810 637h2v1h-2zM806 638h2v1h-2zM810 638h2v1h-2zM807 639h5v1h-5zM810 640h2v1h-2zM810 641h2v1h-2zM806 642h2v1h-2zM810 642h2v1h-2zM807 643h4v1h-4zM816 635h2v1h-2zM815 636h3v1h-3zM815 637h3v1h-3zM814 638h4v1h-4zM814 639h4v1h-4zM813 640h2v1h-2zM816 640h2v1h-2zM813 641h6v1h-6zM816 642h2v1h-2zM816 643h2v1h-2z"/><rect x="849" y="631" width="15" height="13" fill="#000"/><path fill="#ff0080" d="M851 633h4v1h-4zM850 634h2v1h-2zM854 634h2v1h-2zM850 635h2v1h-2zM850 636h2v1h-2zM850 637h5v1h-5zM850 638h2v1h-2zM854 638h2v1h-2zM850 639h2v1h-2zM854 639h2v1h-2zM850 640h2v1h-2zM854 640h2v1h-2zM851 641h4v1h-4zM858 633h4v1h-4zM857 634h2v1h-2zM861 634h2v1h-2zM857 635h2v1h-2zM861 635h2v1h-2zM857 636h2v1h-2zM861 636h2v1h-2zM858 637h5v1h-5zM861 638h2v1h-2zM861 639h2v1h-2zM857 640h2v1h-2zM861 640h2v1h-2zM858 641h4v1h-4z"/><rect x="872" y="636" width="22" height="13" fill="#000"/><path fill="#ff0000" d="M875 638h2v1h-2zM873 639h4v1h-4zM875 640h2v1h-2zM875 641h2v1h-2zM875 642h2v1h-2zM875 643h2v1h-2zM875 644h2v1h-2zM875 645h2v1h-2zM875 646h2v1h-2zM882 638h2v1h-2zM880 639h4v1h-4zM882 640h2v1h-2zM882 641h2v1h-2zM882 642h2v1h-2zM882 643h2v1h-2zM882 644h2v1h-2zM882 645h2v1h-2zM882 646h2v1h-2zM889 638h2v1h-2zM887 639h4v1h-4zM889 640h2v1h-2zM889 641h2v1h-2zM889 642h2v1h-2zM889 643h2v1h-2zM889 644h2v1h-2zM889 645h2v1h-2zM889 646h2v1h-2z"/><rect x="679" y="643" width="15" height="13" fill="#000"/><path fill="#ffff00" d="M680 645h6v1h-6zM680 646h2v1h-2zM680 647h2v1h-2zM680 648h5v1h-5zM680 649h2v1h-2zM684 649h2v1h-2zM684 650h2v1h-2zM684 651h2v1h-2zM680 652h2v1h-2zM684 652h2v1h-2zM681 653h4v1h-4zM690 645h2v1h-2zM689 646h3v1h-3zM689 647h3v1h-3zM688 648h4v1h-4zM688 649h4v1h-4zM687 650h2v1h-2zM690 650h2v1h-2zM687 651h6v1h-6zM690 652h2v1h-2zM690 653h2v1h-2z"/><rect x="697" y="650" width="15" height="13" fill="#000"/><path fill="#ffff00" d="M698 652h6v1h-6zM698 653h2v1h-2zM698 654h2v1h-2zM698 655h5v1h-5zM698 656h2v1h-2zM702 656h2v1h-2zM702 657h2v1h-2zM702 658h2v1h-2zM698 659h2v1h-2zM702 659h2v1h-2zM699 660h4v1h-4zM708 652h2v1h-2zM707 653h3v1h-3zM707 654h3v1h-3zM706 655h4v1h-4zM706 656h4v1h-4zM705 657h2v1h-2zM708 657h2v1h-2zM705 658h6v1h-6zM708 659h2v1h-2zM708 660h2v1h-2z"/><rect x="736" y="645" width="15" height="13" fill="#000"/><path fill="#ffff00" d="M737 647h6v1h-6zM737 648h2v1h-2zM737 649h2v1h-2zM737 650h5v1h-5zM737 651h2v1h-2zM741 651h2v1h-2zM741 652h2v1h-2zM741 653h2v1h-2zM737 654h2v1h-2zM741 654h2v1h-2zM738 655h4v1h-4zM747 647h2v1h-2zM746 648h3v1h-3zM746 649h3v1h-3zM745 650h4v1h-4zM745 651h4v1h-4zM744 652h2v1h-2zM747 652h2v1h-2zM744 653h6v1h-6zM747 654h2v1h-2zM747 655h2v1h-2z"/><rect x="769" y="644" width="15" height="13" fill="#000"/><path fill="#ffff00" d="M771 646h4v1h-4zM770 647h2v1h-2zM774 647h2v1h-2zM770 648h2v1h-2zM770 649h2v1h-2zM770 650h5v1h-5zM770 651h2v1h-2zM774 651h2v1h-2zM770 652h2v1h-2zM774 652h2v1h-2zM770 653h2v1h-2zM774 653h2v1h-2zM771 654h4v1h-4zM779 646h2v1h-2zM777 647h4v1h-4zM779 648h2v1h-2zM779 649h2v1h-2zM779 650h2v1h-2zM779 651h2v1h-2zM779 652h2v1h-2zM779 653h2v1h-2zM779 654h2v1h-2z"/><rect x="863" y="649" width="15" height="13" fill="#000"/><path fill="#ffff00" d="M864 651h6v1h-6zM864 652h2v1h-2zM864 653h2v1h-2zM864 654h5v1h-5zM864 655h2v1h-2zM868 655h2v1h-2zM868 656h2v1h-2zM868 657h2v1h-2zM864 658h2v1h-2zM868 658h2v1h-2zM865 659h4v1h-4zM872 651h4v1h-4zM871 652h2v1h-2zM875 652h2v1h-2zM871 653h2v1h-2zM875 653h2v1h-2zM871 654h2v1h-2zM875 654h2v1h-2zM871 655h2v1h-2zM875 655h2v1h-2zM871 656h2v1h-2zM875 656h2v1h-2zM871 657h2v1h-2zM875 657h2v1h-2zM871 658h2v1h-2zM875 658h2v1h-2zM872 659h4v1h-4z"/><rect x="679" y="660" width="15" height="13" fill="#000"/><path fill="#00ffff" d="M681 662h4v1h-4zM680 663h2v1h-2zM684 663h2v1h-2zM684 664h2v1h-2zM684 665h2v1h-2zM682 666h3v1h-3zM684 667h2v1h-2zM684 668h2v1h-2zM680 669h2v1h-2zM684 669h2v1h-2zM681 670h4v1h-4zM688 662h4v1h-4zM687 663h2v1h-2zM691 663h2v1h-2zM687 664h2v1h-2zM691 664h2v1h-2zM687 665h2v1h-2zM691 665h2v1h-2zM688 666h5v1h-5zM691 667h2v1h-2zM691 668h2v1h-2zM687 669h2v1h-2zM691 669h2v1h-2zM688 670h4v1h-4z"/><rect x="727" y="661" width="15" height="13" fill="#000"/><path fill="#ffff00" d="M729 663h4v1h-4zM728 664h2v1h-2zM732 664h2v1h-2zM728 665h2v1h-2zM728 666h2v1h-2zM728 667h5v1h-5zM728 668h2v1h-2zM732 668h2v1h-2zM728 669h2v1h-2zM732 669h2v1h-2zM728 670h2v1h-2zM732 670h2v1h-2zM729 671h4v1h-4zM737 663h2v1h-2zM735 664h4v1h-4zM737 665h2v1h-2zM737 666h2v1h-2zM737 667h2v1h-2zM737 668h2v1h-2zM737 669h2v1h-2zM737 670h2v1h-2zM737 671h2v1h-2z"/><rect x="773" y="664" width="15" height="13" fill="#000"/><path fill="#ffff00" d="M775 666h4v1h-4zM774 667h2v1h-2zM778 667h2v1h-2zM774 668h2v1h-2zM774 669h2v1h-2zM774 670h5v1h-5zM774 671h2v1h-2zM778 671h2v1h-2zM774 672h2v1h-2zM778 672h2v1h-2zM774 673h2v1h-2zM778 673h2v1h-2zM775 674h4v1h-4zM783 666h2v1h-2zM781 667h4v1h-4zM783 668h2v1h-2zM783 669h2v1h-2zM783 670h2v1h-2zM783 671h2v1h-2zM783 672h2v1h-2zM783 673h2v1h-2zM783 674h2v1h-2z"/><rect x="869" y="664" width="15" height="13" fill="#000"/><path fill="#ffff00" d="M873 666h2v1h-2zM872 667h3v1h-3zM872 668h3v1h-3zM871 669h4v1h-4zM871 670h4v1h-4zM870 671h2v1h-2zM873 671h2v1h-2zM870 672h6v1h-6zM873 673h2v1h-2zM873 674h2v1h-2zM878 666h4v1h-4zM877 667h2v1h-2zM881 667h2v1h-2zM877 668h2v1h-2zM877 669h2v1h-2zM877 670h5v1h-5zM877 671h2v1h-2zM881 671h2v1h-2zM877 672h2v1h-2zM881 672h2v1h-2zM877 673h2v1h-2zM881 673h2v1h-2zM878 674h4v1h-4z"/><rect x="761" y="674" width="15" height="13" fill="#000"/><path fill="#ffff00" d="M762 676h6v1h-6zM762 677h2v1h-2zM762 678h2v1h-2zM762 679h5v1h-5zM762 680h2v1h-2zM766 680h2v1h-2zM766 681h2v1h-2zM766 682h2v1h-2zM762 683h2v1h-2zM766 683h2v1h-2zM763 684h4v1h-4zM769 676h6v1h-6zM769 677h6v1h-6zM773 678h2v1h-2zM772 679h2v1h-2zM772 680h2v1h-2zM771 681h2v1h-2zM770 682h2v1h-2zM770 683h2v1h-2zM770 684h2v1h-2z"/><rect x="805" y="674" width="15" height="13" fill="#000"/><path fill="#ffff00" d="M806 676h6v1h-6zM806 677h2v1h-2zM806 678h2v1h-2zM806 679h5v1h-5zM806 680h2v1h-2zM810 680h2v1h-2zM810 681h2v1h-2zM810 682h2v1h-2zM806 683h2v1h-2zM810 683h2v1h-2zM807 684h4v1h-4zM813 676h6v1h-6zM813 677h6v1h-6zM817 678h2v1h-2zM816 679h2v1h-2zM816 680h2v1h-2zM815 681h2v1h-2zM814 682h2v1h-2zM814 683h2v1h-2zM814 684h2v1h-2z"/><rect x="664" y="677" width="15" height="13" fill="#000"/><path fill="#ffff00" d="M665 679h6v1h-6zM665 680h2v1h-2zM665 681h2v1h-2zM665 682h5v1h-5zM665 683h2v1h-2zM669 683h2v1h-2zM669 684h2v1h-2zM669 685h2v1h-2zM665 686h2v1h-2zM669 686h2v1h-2zM666 687h4v1h-4zM675 679h2v1h-2zM674 680h3v1h-3zM674 681h3v1h-3zM673 682h4v1h-4zM673 683h4v1h-4zM672 684h2v1h-2zM675 684h2v1h-2zM672 685h6v1h-6zM675 686h2v1h-2zM675 687h2v1h-2z"/><rect x="737" y="680" width="15" height="13" fill="#000"/><path fill="#ff0080" d="M739 682h4v1h-4zM738 683h2v1h-2zM742 683h2v1h-2zM738 684h2v1h-2zM738 685h2v1h-2zM738 686h5v1h-5zM738 687h2v1h-2zM742 687h2v1h-2zM738 688h2v1h-2zM742 688h2v1h-2zM738 689h2v1h-2zM742 689h2v1h-2zM739 690h4v1h-4zM745 682h6v1h-6zM745 683h2v1h-2zM745 684h2v1h-2zM745 685h5v1h-5zM745 686h2v1h-2zM749 686h2v1h-2zM749 687h2v1h-2zM749 688h2v1h-2zM745 689h2v1h-2zM749 689h2v1h-2zM746 690h4v1h-4z"/><rect x="767" y="687" width="15" height="13" fill="#000"/><path fill="#ffff00" d="M769 689h4v1h-4zM768 690h2v1h-2zM772 690h2v1h-2zM768 691h2v1h-2zM768 692h2v1h-2zM768 693h5v1h-5zM768 694h2v1h-2zM772 694h2v1h-2zM768 695h2v1h-2zM772 695h2v1h-2zM768 696h2v1h-2zM772 696h2v1h-2zM769 697h4v1h-4zM777 689h2v1h-2zM775 690h4v1h-4zM777 691h2v1h-2zM777 692h2v1h-2zM777 693h2v1h-2zM777 694h2v1h-2zM777 695h2v1h-2zM777 696h2v1h-2zM777 697h2v1h-2z"/><rect x="717" y="689" width="15" height="13" fill="#000"/><path fill="#ff0080" d="M718 691h6v1h-6zM718 692h6v1h-6zM722 693h2v1h-2zM721 694h2v1h-2zM721 695h2v1h-2zM720 696h2v1h-2zM719 697h2v1h-2zM719 698h2v1h-2zM719 699h2v1h-2zM726 691h4v1h-4zM725 692h2v1h-2zM729 692h2v1h-2zM729 693h2v1h-2zM729 694h2v1h-2zM728 695h2v1h-2zM727 696h2v1h-2zM726 697h2v1h-2zM725 698h2v1h-2zM725 699h6v1h-6z"/><rect x="787" y="694" width="15" height="13" fill="#000"/><path fill="#ffff00" d="M791 696h2v1h-2zM790 697h3v1h-3zM790 698h3v1h-3zM789 699h4v1h-4zM789 700h4v1h-4zM788 701h2v1h-2zM791 701h2v1h-2zM788 702h6v1h-6zM791 703h2v1h-2zM791 704h2v1h-2zM796 696h4v1h-4zM795 697h2v1h-2zM799 697h2v1h-2zM795 698h2v1h-2zM795 699h2v1h-2zM795 700h5v1h-5zM795 701h2v1h-2zM799 701h2v1h-2zM795 702h2v1h-2zM799 702h2v1h-2zM795 703h2v1h-2zM799 703h2v1h-2zM796 704h4v1h-4z"/><rect x="822" y="696" width="15" height="13" fill="#000"/><path fill="#ffff00" d="M823 698h6v1h-6zM823 699h2v1h-2zM823 700h2v1h-2zM823 701h5v1h-5zM823 702h2v1h-2zM827 702h2v1h-2zM827 703h2v1h-2zM827 704h2v1h-2zM823 705h2v1h-2zM827 705h2v1h-2zM824 706h4v1h-4zM833 698h2v1h-2zM832 699h3v1h-3zM832 700h3v1h-3zM831 701h4v1h-4zM831 702h4v1h-4zM830 703h2v1h-2zM833 703h2v1h-2zM830 704h6v1h-6zM833 705h2v1h-2zM833 706h2v1h-2z"/><rect x="716" y="699" width="15" height="13" fill="#000"/><path fill="#ff0080" d="M718 701h4v1h-4zM717 702h2v1h-2zM721 702h2v1h-2zM717 703h2v1h-2zM717 704h2v1h-2zM717 705h5v1h-5zM717 706h2v1h-2zM721 706h2v1h-2zM717 707h2v1h-2zM721 707h2v1h-2zM717 708h2v1h-2zM721 708h2v1h-2zM718 709h4v1h-4zM724 701h6v1h-6zM724 702h2v1h-2zM724 703h2v1h-2zM724 704h5v1h-5zM724 705h2v1h-2zM728 705h2v1h-2zM728 706h2v1h-2zM728 707h2v1h-2zM724 708h2v1h-2zM728 708h2v1h-2zM725 709h4v1h-4z"/><rect x="685" y="701" width="15" height="13" fill="#000"/><path fill="#ffff00" d="M686 703h6v1h-6zM686 704h2v1h-2zM686 705h2v1h-2zM686 706h5v1h-5zM686 707h2v1h-2zM690 707h2v1h-2zM690 708h2v1h-2zM690 709h2v1h-2zM686 710h2v1h-2zM690 710h2v1h-2zM687 711h4v1h-4zM693 703h6v1h-6zM693 704h6v1h-6zM697 705h2v1h-2zM696 706h2v1h-2zM696 707h2v1h-2zM695 708h2v1h-2zM694 709h2v1h-2zM694 710h2v1h-2zM694 711h2v1h-2z"/><rect x="768" y="708" width="15" height="13" fill="#000"/><path fill="#ff0080" d="M770 710h4v1h-4zM769 711h2v1h-2zM773 711h2v1h-2zM769 712h2v1h-2zM769 713h2v1h-2zM769 714h5v1h-5zM769 715h2v1h-2zM773 715h2v1h-2zM769 716h2v1h-2zM773 716h2v1h-2zM769 717h2v1h-2zM773 717h2v1h-2zM770 718h4v1h-4zM776 710h6v1h-6zM776 711h2v1h-2zM776 712h2v1h-2zM776 713h5v1h-5zM776 714h2v1h-2zM780 714h2v1h-2zM780 715h2v1h-2zM780 716h2v1h-2zM776 717h2v1h-2zM780 717h2v1h-2zM777 718h4v1h-4z"/><rect x="664" y="712" width="15" height="13" fill="#000"/><path fill="#ff0080" d="M666 714h4v1h-4zM665 715h2v1h-2zM669 715h2v1h-2zM665 716h2v1h-2zM665 717h2v1h-2zM665 718h5v1h-5zM665 719h2v1h-2zM669 719h2v1h-2zM665 720h2v1h-2zM669 720h2v1h-2zM665 721h2v1h-2zM669 721h2v1h-2zM666 722h4v1h-4zM672 714h6v1h-6zM672 715h2v1h-2zM672 716h2v1h-2zM672 717h5v1h-5zM672 718h2v1h-2zM676 718h2v1h-2zM676 719h2v1h-2zM676 720h2v1h-2zM672 721h2v1h-2zM676 721h2v1h-2zM673 722h4v1h-4z"/><rect x="721" y="717" width="15" height="13" fill="#000"/><path fill="#ff0080" d="M722 719h6v1h-6zM722 720h6v1h-6zM726 721h2v1h-2zM725 722h2v1h-2zM725 723h2v1h-2zM724 724h2v1h-2zM723 725h2v1h-2zM723 726h2v1h-2zM723 727h2v1h-2zM730 719h4v1h-4zM729 720h2v1h-2zM733 720h2v1h-2zM729 721h2v1h-2zM729 722h2v1h-2zM729 723h5v1h-5zM729 724h2v1h-2zM733 724h2v1h-2zM729 725h2v1h-2zM733 725h2v1h-2zM729 726h2v1h-2zM733 726h2v1h-2zM730 727h4v1h-4z"/><rect x="776" y="720" width="15" height="13" fill="#000"/><path fill="#ffff00" d="M778 722h4v1h-4zM777 723h2v1h-2zM781 723h2v1h-2zM777 724h2v1h-2zM777 725h2v1h-2zM777 726h5v1h-5zM777 727h2v1h-2zM781 727h2v1h-2zM777 728h2v1h-2zM781 728h2v1h-2zM777 729h2v1h-2zM781 729h2v1h-2zM778 730h4v1h-4zM786 722h2v1h-2zM784 723h4v1h-4zM786 724h2v1h-2zM786 725h2v1h-2zM786 726h2v1h-2zM786 727h2v1h-2zM786 728h2v1h-2zM786 729h2v1h-2zM786 730h2v1h-2z"/><rect x="754" y="728" width="22" height="13" fill="#000"/><path fill="#ff0000" d="M757 730h2v1h-2zM755 731h4v1h-4zM757 732h2v1h-2zM757 733h2v1h-2zM757 734h2v1h-2zM757 735h2v1h-2zM757 736h2v1h-2zM757 737h2v1h-2zM757 738h2v1h-2zM763 730h4v1h-4zM762 731h2v1h-2zM766 731h2v1h-2zM766 732h2v1h-2zM766 733h2v1h-2zM765 734h2v1h-2zM764 735h2v1h-2zM763 736h2v1h-2zM762 737h2v1h-2zM762 738h6v1h-6zM770 730h4v1h-4zM769 731h2v1h-2zM773 731h2v1h-2zM773 732h2v1h-2zM773 733h2v1h-2zM772 734h2v1h-2zM771 735h2v1h-2zM770 736h2v1h-2zM769 737h2v1h-2zM769 738h6v1h-6z"/><rect x="653" y="731" width="15" height="13" fill="#000"/><path fill="#ff0080" d="M655 733h4v1h-4zM654 734h2v1h-2zM658 734h2v1h-2zM654 735h2v1h-2zM654 736h2v1h-2zM654 737h5v1h-5zM654 738h2v1h-2zM658 738h2v1h-2zM654 739h2v1h-2zM658 739h2v1h-2zM654 740h2v1h-2zM658 740h2v1h-2zM655 741h4v1h-4zM661 733h6v1h-6zM661 734h2v1h-2zM661 735h2v1h-2zM661 736h5v1h-5zM661 737h2v1h-2zM665 737h2v1h-2zM665 738h2v1h-2zM665 739h2v1h-2zM661 740h2v1h-2zM665 740h2v1h-2zM662 741h4v1h-4z"/><rect x="695" y="729" width="15" height="13" fill="#000"/><path fill="#ffff00" d="M697 731h4v1h-4zM696 732h2v1h-2zM700 732h2v1h-2zM696 733h2v1h-2zM696 734h2v1h-2zM696 735h5v1h-5zM696 736h2v1h-2zM700 736h2v1h-2zM696 737h2v1h-2zM700 737h2v1h-2zM696 738h2v1h-2zM700 738h2v1h-2zM697 739h4v1h-4zM705 731h2v1h-2zM703 732h4v1h-4zM705 733h2v1h-2zM705 734h2v1h-2zM705 735h2v1h-2zM705 736h2v1h-2zM705 737h2v1h-2zM705 738h2v1h-2zM705 739h2v1h-2z"/><rect x="732" y="737" width="15" height="13" fill="#000"/><path fill="#ffff00" d="M733 739h6v1h-6zM733 740h2v1h-2zM733 741h2v1h-2zM733 742h5v1h-5zM733 743h2v1h-2zM737 743h2v1h-2zM737 744h2v1h-2zM737 745h2v1h-2zM733 746h2v1h-2zM737 746h2v1h-2zM734 747h4v1h-4zM741 739h4v1h-4zM740 740h2v1h-2zM744 740h2v1h-2zM740 741h2v1h-2zM744 741h2v1h-2zM740 742h2v1h-2zM744 742h2v1h-2zM740 743h2v1h-2zM744 743h2v1h-2zM740 744h2v1h-2zM744 744h2v1h-2zM740 745h2v1h-2zM744 745h2v1h-2zM740 746h2v1h-2zM744 746h2v1h-2zM741 747h4v1h-4z"/><rect x="768" y="741" width="15" height="13" fill="#000"/><path fill="#ff0080" d="M770 743h4v1h-4zM769 744h2v1h-2zM773 744h2v1h-2zM769 745h2v1h-2zM769 746h2v1h-2zM769 747h5v1h-5zM769 748h2v1h-2zM773 748h2v1h-2zM769 749h2v1h-2zM773 749h2v1h-2zM769 750h2v1h-2zM773 750h2v1h-2zM770 751h4v1h-4zM777 743h4v1h-4zM776 744h2v1h-2zM780 744h2v1h-2zM780 745h2v1h-2zM780 746h2v1h-2zM778 747h3v1h-3zM780 748h2v1h-2zM780 749h2v1h-2zM776 750h2v1h-2zM780 750h2v1h-2zM777 751h4v1h-4z"/><rect x="789" y="738" width="15" height="13" fill="#000"/><path fill="#00ff00" d="M791 740h4v1h-4zM790 741h2v1h-2zM794 741h2v1h-2zM794 742h2v1h-2zM794 743h2v1h-2zM793 744h2v1h-2zM792 745h2v1h-2zM791 746h2v1h-2zM790 747h2v1h-2zM790 748h6v1h-6zM800 740h2v1h-2zM799 741h3v1h-3zM799 742h3v1h-3zM798 743h4v1h-4zM798 744h4v1h-4zM797 745h2v1h-2zM800 745h2v1h-2zM797 746h6v1h-6zM800 747h2v1h-2zM800 748h2v1h-2z"/><rect x="823" y="744" width="22" height="13" fill="#000"/><path fill="#ff0000" d="M826 746h2v1h-2zM824 747h4v1h-4zM826 748h2v1h-2zM826 749h2v1h-2zM826 750h2v1h-2zM826 751h2v1h-2zM826 752h2v1h-2zM826 753h2v1h-2zM826 754h2v1h-2zM832 746h4v1h-4zM831 747h2v1h-2zM835 747h2v1h-2zM831 748h2v1h-2zM835 748h2v1h-2zM831 749h2v1h-2zM835 749h2v1h-2zM831 750h2v1h-2zM835 750h2v1h-2zM831 751h2v1h-2zM835 751h2v1h-2zM831 752h2v1h-2zM835 752h2v1h-2zM831 753h2v1h-2zM835 753h2v1h-2zM832 754h4v1h-4zM839 746h4v1h-4zM838 747h2v1h-2zM842 747h2v1h-2zM838 748h2v1h-2zM842 748h2v1h-2zM838 749h2v1h-2zM842 749h2v1h-2zM838 750h2v1h-2zM842 750h2v1h-2zM838 751h2v1h-2zM842 751h2v1h-2zM838 752h2v1h-2zM842 752h2v1h-2zM838 753h2v1h-2zM842 753h2v1h-2zM839 754h4v1h-4z"/><rect x="790" y="750" width="15" height="13" fill="#000"/><path fill="#ffff00" d="M791 752h6v1h-6zM791 753h2v1h-2zM791 754h2v1h-2zM791 755h5v1h-5zM791 756h2v1h-2zM795 756h2v1h-2zM795 757h2v1h-2zM795 758h2v1h-2zM791 759h2v1h-2zM795 759h2v1h-2zM792 760h4v1h-4zM799 752h4v1h-4zM798 753h2v1h-2zM802 753h2v1h-2zM798 754h2v1h-2zM798 755h2v1h-2zM798 756h5v1h-5zM798 757h2v1h-2zM802 757h2v1h-2zM798 758h2v1h-2zM802 758h2v1h-2zM798 759h2v1h-2zM802 759h2v1h-2zM799 760h4v1h-4z"/><rect x="736" y="754" width="15" height="13" fill="#000"/><path fill="#ff0080" d="M738 756h4v1h-4zM737 757h2v1h-2zM741 757h2v1h-2zM737 758h2v1h-2zM741 758h2v1h-2zM737 759h2v1h-2zM741 759h2v1h-2zM738 760h4v1h-4zM737 761h2v1h-2zM741 761h2v1h-2zM737 762h2v1h-2zM741 762h2v1h-2zM737 763h2v1h-2zM741 763h2v1h-2zM738 764h4v1h-4zM744 756h6v1h-6zM744 757h2v1h-2zM744 758h2v1h-2zM744 759h5v1h-5zM744 760h2v1h-2zM748 760h2v1h-2zM748 761h2v1h-2zM748 762h2v1h-2zM744 763h2v1h-2zM748 763h2v1h-2zM745 764h4v1h-4z"/><rect x="757" y="758" width="15" height="13" fill="#000"/><path fill="#ff0080" d="M758 760h6v1h-6zM758 761h6v1h-6zM762 762h2v1h-2zM761 763h2v1h-2zM761 764h2v1h-2zM760 765h2v1h-2zM759 766h2v1h-2zM759 767h2v1h-2zM759 768h2v1h-2zM766 760h4v1h-4zM765 761h2v1h-2zM769 761h2v1h-2zM765 762h2v1h-2zM769 762h2v1h-2zM765 763h2v1h-2zM769 763h2v1h-2zM766 764h4v1h-4zM765 765h2v1h-2zM769 765h2v1h-2zM765 766h2v1h-2zM769 766h2v1h-2zM765 767h2v1h-2zM769 767h2v1h-2zM766 768h4v1h-4z"/><rect x="868" y="754" width="15" height="13" fill="#000"/><path fill="#ff0080" d="M869 756h6v1h-6zM869 757h6v1h-6zM873 758h2v1h-2zM872 759h2v1h-2zM872 760h2v1h-2zM871 761h2v1h-2zM870 762h2v1h-2zM870 763h2v1h-2zM870 764h2v1h-2zM877 756h4v1h-4zM876 757h2v1h-2zM880 757h2v1h-2zM876 758h2v1h-2zM876 759h2v1h-2zM876 760h5v1h-5zM876 761h2v1h-2zM880 761h2v1h-2zM876 762h2v1h-2zM880 762h2v1h-2zM876 763h2v1h-2zM880 763h2v1h-2zM877 764h4v1h-4z"/><rect x="642" y="759" width="15" height="13" fill="#000"/><path fill="#ffff00" d="M646 761h2v1h-2zM645 762h3v1h-3zM645 763h3v1h-3zM644 764h4v1h-4zM644 765h4v1h-4zM643 766h2v1h-2zM646 766h2v1h-2zM643 767h6v1h-6zM646 768h2v1h-2zM646 769h2v1h-2zM651 761h4v1h-4zM650 762h2v1h-2zM654 762h2v1h-2zM650 763h2v1h-2zM650 764h2v1h-2zM650 765h5v1h-5zM650 766h2v1h-2zM654 766h2v1h-2zM650 767h2v1h-2zM654 767h2v1h-2zM650 768h2v1h-2zM654 768h2v1h-2zM651 769h4v1h-4z"/><rect x="697" y="758" width="15" height="13" fill="#000"/><path fill="#ffff00" d="M698 760h6v1h-6zM698 761h2v1h-2zM698 762h2v1h-2zM698 763h5v1h-5zM698 764h2v1h-2zM702 764h2v1h-2zM702 765h2v1h-2zM702 766h2v1h-2zM698 767h2v1h-2zM702 767h2v1h-2zM699 768h4v1h-4zM708 760h2v1h-2zM707 761h3v1h-3zM707 762h3v1h-3zM706 763h4v1h-4zM706 764h4v1h-4zM705 765h2v1h-2zM708 765h2v1h-2zM705 766h6v1h-6zM708 767h2v1h-2zM708 768h2v1h-2z"/><rect x="760" y="567" width="15" height="13" fill="#000"/><path fill="#ff0080" d="M761 569h6v1h-6zM761 570h6v1h-6zM765 571h2v1h-2zM764 572h2v1h-2zM764 573h2v1h-2zM763 574h2v1h-2zM762 575h2v1h-2zM762 576h2v1h-2zM762 577h2v1h-2zM769 569h4v1h-4zM768 570h2v1h-2zM772 570h2v1h-2zM768 571h2v1h-2zM768 572h2v1h-2zM768 573h5v1h-5zM768 574h2v1h-2zM772 574h2v1h-2zM768 575h2v1h-2zM772 575h2v1h-2zM768 576h2v1h-2zM772 576h2v1h-2zM769 577h4v1h-4z"/><rect x="784" y="565" width="15" height="13" fill="#000"/><path fill="#ff0080" d="M785 567h6v1h-6zM785 568h6v1h-6zM789 569h2v1h-2zM788 570h2v1h-2zM788 571h2v1h-2zM787 572h2v1h-2zM786 573h2v1h-2zM786 574h2v1h-2zM786 575h2v1h-2zM793 567h4v1h-4zM792 568h2v1h-2zM796 568h2v1h-2zM796 569h2v1h-2zM796 570h2v1h-2zM795 571h2v1h-2zM794 572h2v1h-2zM793 573h2v1h-2zM792 574h2v1h-2zM792 575h6v1h-6z"/><rect x="816" y="565" width="15" height="13" fill="#000"/><path fill="#ffff00" d="M818 567h4v1h-4zM817 568h2v1h-2zM821 568h2v1h-2zM817 569h2v1h-2zM817 570h2v1h-2zM817 571h5v1h-5zM817 572h2v1h-2zM821 572h2v1h-2zM817 573h2v1h-2zM821 573h2v1h-2zM817 574h2v1h-2zM821 574h2v1h-2zM818 575h4v1h-4zM826 567h2v1h-2zM824 568h4v1h-4zM826 569h2v1h-2zM826 570h2v1h-2zM826 571h2v1h-2zM826 572h2v1h-2zM826 573h2v1h-2zM826 574h2v1h-2zM826 575h2v1h-2z"/><rect x="834" y="570" width="15" height="13" fill="#000"/><path fill="#ffff00" d="M836 572h4v1h-4zM835 573h2v1h-2zM839 573h2v1h-2zM835 574h2v1h-2zM835 575h2v1h-2zM835 576h5v1h-5zM835 577h2v1h-2zM839 577h2v1h-2zM835 578h2v1h-2zM839 578h2v1h-2zM835 579h2v1h-2zM839 579h2v1h-2zM836 580h4v1h-4zM844 572h2v1h-2zM842 573h4v1h-4zM844 574h2v1h-2zM844 575h2v1h-2zM844 576h2v1h-2zM844 577h2v1h-2zM844 578h2v1h-2zM844 579h2v1h-2zM844 580h2v1h-2z"/><rect x="891" y="686" width="15" height="13" fill="#000"/><path fill="#ff0080" d="M893 688h4v1h-4zM892 689h2v1h-2zM896 689h2v1h-2zM892 690h2v1h-2zM892 691h2v1h-2zM892 692h5v1h-5zM892 693h2v1h-2zM896 693h2v1h-2zM892 694h2v1h-2zM896 694h2v1h-2zM892 695h2v1h-2zM896 695h2v1h-2zM893 696h4v1h-4zM899 688h6v1h-6zM899 689h2v1h-2zM899 690h2v1h-2zM899 691h5v1h-5zM899 692h2v1h-2zM903 692h2v1h-2zM903 693h2v1h-2zM903 694h2v1h-2zM899 695h2v1h-2zM903 695h2v1h-2zM900 696h4v1h-4z"/><rect x="923" y="608" width="15" height="13" fill="#000"/><path fill="#ff0080" d="M925 610h4v1h-4zM924 611h2v1h-2zM928 611h2v1h-2zM924 612h2v1h-2zM924 613h2v1h-2zM924 614h5v1h-5zM924 615h2v1h-2zM928 615h2v1h-2zM924 616h2v1h-2zM928 616h2v1h-2zM924 617h2v1h-2zM928 617h2v1h-2zM925 618h4v1h-4zM932 610h4v1h-4zM931 611h2v1h-2zM935 611h2v1h-2zM931 612h2v1h-2zM935 612h2v1h-2zM931 613h2v1h-2zM935 613h2v1h-2zM932 614h5v1h-5zM935 615h2v1h-2zM935 616h2v1h-2zM931 617h2v1h-2zM935 617h2v1h-2zM932 618h4v1h-4z"/><rect x="906" y="617" width="15" height="13" fill="#000"/><path fill="#ffff00" d="M907 619h6v1h-6zM907 620h2v1h-2zM907 621h2v1h-2zM907 622h5v1h-5zM907 623h2v1h-2zM911 623h2v1h-2zM911 624h2v1h-2zM911 625h2v1h-2zM907 626h2v1h-2zM911 626h2v1h-2zM908 627h4v1h-4zM917 619h2v1h-2zM916 620h3v1h-3zM916 621h3v1h-3zM915 622h4v1h-4zM915 623h4v1h-4zM914 624h2v1h-2zM917 624h2v1h-2zM914 625h6v1h-6zM917 626h2v1h-2zM917 627h2v1h-2z"/><rect x="925" y="623" width="15" height="13" fill="#000"/><path fill="#ffff00" d="M926 625h6v1h-6zM926 626h2v1h-2zM926 627h2v1h-2zM926 628h5v1h-5zM926 629h2v1h-2zM930 629h2v1h-2zM930 630h2v1h-2zM930 631h2v1h-2zM926 632h2v1h-2zM930 632h2v1h-2zM927 633h4v1h-4zM934 625h4v1h-4zM933 626h2v1h-2zM937 626h2v1h-2zM933 627h2v1h-2zM937 627h2v1h-2zM933 628h2v1h-2zM937 628h2v1h-2zM933 629h2v1h-2zM937 629h2v1h-2zM933 630h2v1h-2zM937 630h2v1h-2zM933 631h2v1h-2zM937 631h2v1h-2zM933 632h2v1h-2zM937 632h2v1h-2zM934 633h4v1h-4z"/><rect x="899" y="631" width="15" height="13" fill="#000"/><path fill="#ff0000" d="M901 633h4v1h-4zM900 634h2v1h-2zM904 634h2v1h-2zM900 635h2v1h-2zM904 635h2v1h-2zM900 636h2v1h-2zM904 636h2v1h-2zM901 637h5v1h-5zM904 638h2v1h-2zM904 639h2v1h-2zM900 640h2v1h-2zM904 640h2v1h-2zM901 641h4v1h-4zM909 633h2v1h-2zM907 634h4v1h-4zM909 635h2v1h-2zM909 636h2v1h-2zM909 637h2v1h-2zM909 638h2v1h-2zM909 639h2v1h-2zM909 640h2v1h-2zM909 641h2v1h-2z"/><rect x="974" y="645" width="15" height="13" fill="#000"/><path fill="#ff0000" d="M976 647h4v1h-4zM975 648h2v1h-2zM979 648h2v1h-2zM975 649h2v1h-2zM979 649h2v1h-2zM975 650h2v1h-2zM979 650h2v1h-2zM976 651h5v1h-5zM979 652h2v1h-2zM979 653h2v1h-2zM975 654h2v1h-2zM979 654h2v1h-2zM976 655h4v1h-4zM985 647h2v1h-2zM984 648h3v1h-3zM984 649h3v1h-3zM983 650h4v1h-4zM983 651h4v1h-4zM982 652h2v1h-2zM985 652h2v1h-2zM982 653h6v1h-6zM985 654h2v1h-2zM985 655h2v1h-2z"/><rect x="949" y="661" width="15" height="13" fill="#000"/><path fill="#ffff00" d="M950 663h6v1h-6zM950 664h2v1h-2zM950 665h2v1h-2zM950 666h5v1h-5zM950 667h2v1h-2zM954 667h2v1h-2zM954 668h2v1h-2zM954 669h2v1h-2zM950 670h2v1h-2zM954 670h2v1h-2zM951 671h4v1h-4zM960 663h2v1h-2zM959 664h3v1h-3zM959 665h3v1h-3zM958 666h4v1h-4zM958 667h4v1h-4zM957 668h2v1h-2zM960 668h2v1h-2zM957 669h6v1h-6zM960 670h2v1h-2zM960 671h2v1h-2z"/><rect x="985" y="660" width="15" height="13" fill="#000"/><path fill="#ffff00" d="M986 662h6v1h-6zM986 663h2v1h-2zM986 664h2v1h-2zM986 665h5v1h-5zM986 666h2v1h-2zM990 666h2v1h-2zM990 667h2v1h-2zM990 668h2v1h-2zM986 669h2v1h-2zM990 669h2v1h-2zM987 670h4v1h-4zM996 662h2v1h-2zM995 663h3v1h-3zM995 664h3v1h-3zM994 665h4v1h-4zM994 666h4v1h-4zM993 667h2v1h-2zM996 667h2v1h-2zM993 668h6v1h-6zM996 669h2v1h-2zM996 670h2v1h-2z"/><rect x="1006" y="668" width="15" height="13" fill="#000"/><path fill="#ff0000" d="M1008 670h4v1h-4zM1007 671h2v1h-2zM1011 671h2v1h-2zM1007 672h2v1h-2zM1011 672h2v1h-2zM1007 673h2v1h-2zM1011 673h2v1h-2zM1008 674h5v1h-5zM1011 675h2v1h-2zM1011 676h2v1h-2zM1007 677h2v1h-2zM1011 677h2v1h-2zM1008 678h4v1h-4zM1017 670h2v1h-2zM1016 671h3v1h-3zM1016 672h3v1h-3zM1015 673h4v1h-4zM1015 674h4v1h-4zM1014 675h2v1h-2zM1017 675h2v1h-2zM1014 676h6v1h-6zM1017 677h2v1h-2zM1017 678h2v1h-2z"/><rect x="891" y="590" width="15" height="13" fill="#000"/><path fill="#ffff00" d="M892 592h6v1h-6zM892 593h2v1h-2zM892 594h2v1h-2zM892 595h5v1h-5zM892 596h2v1h-2zM896 596h2v1h-2zM896 597h2v1h-2zM896 598h2v1h-2zM892 599h2v1h-2zM896 599h2v1h-2zM893 600h4v1h-4zM900 592h4v1h-4zM899 593h2v1h-2zM903 593h2v1h-2zM899 594h2v1h-2zM903 594h2v1h-2zM899 595h2v1h-2zM903 595h2v1h-2zM899 596h2v1h-2zM903 596h2v1h-2zM899 597h2v1h-2zM903 597h2v1h-2zM899 598h2v1h-2zM903 598h2v1h-2zM899 599h2v1h-2zM903 599h2v1h-2zM900 600h4v1h-4z"/><rect x="903" y="568" width="15" height="13" fill="#000"/><path fill="#ffff00" d="M905 570h4v1h-4zM904 571h2v1h-2zM908 571h2v1h-2zM904 572h2v1h-2zM904 573h2v1h-2zM904 574h5v1h-5zM904 575h2v1h-2zM908 575h2v1h-2zM904 576h2v1h-2zM908 576h2v1h-2zM904 577h2v1h-2zM908 577h2v1h-2zM905 578h4v1h-4zM913 570h2v1h-2zM911 571h4v1h-4zM913 572h2v1h-2zM913 573h2v1h-2zM913 574h2v1h-2zM913 575h2v1h-2zM913 576h2v1h-2zM913 577h2v1h-2zM913 578h2v1h-2z"/></svg>
<svg width="1024" height="768" style="position:absolute;left:0;top:0" shape-rendering="crispEdges"><path fill="#808080" d="M92 19h1v1h-1zM93 19h1v1h-1zM94 19h1v1h-1zM91 20h1v1h-1zM95 20h1v1h-1zM95 21h1v1h-1zM94 22h1v1h-1zM93 23h1v1h-1zM92 24h1v1h-1zM91 25h1v1h-1zM91 26h1v1h-1zM92 26h1v1h-1zM93 26h1v1h-1zM94 26h1v1h-1zM95 26h1v1h-1zM98 19h1v1h-1zM99 19h1v1h-1zM100 19h1v1h-1zM97 20h1v1h-1zM101 20h1v1h-1zM97 21h1v1h-1zM101 21h1v1h-1zM97 22h1v1h-1zM101 22h1v1h-1zM97 23h1v1h-1zM101 23h1v1h-1zM97 24h1v1h-1zM101 24h1v1h-1zM97 25h1v1h-1zM101 25h1v1h-1zM98 26h1v1h-1zM99 26h1v1h-1zM100 26h1v1h-1zM103 19h1v1h-1zM104 19h1v1h-1zM105 19h1v1h-1zM107 19h1v1h-1zM108 19h1v1h-1zM109 19h1v1h-1zM111 19h1v1h-1zM112 19h1v1h-1zM113 19h1v1h-1zM104 20h1v1h-1zM108 20h1v1h-1zM112 20h1v1h-1zM104 21h1v1h-1zM108 21h1v1h-1zM112 21h1v1h-1zM105 22h1v1h-1zM107 22h1v1h-1zM109 22h1v1h-1zM111 22h1v1h-1zM105 23h1v1h-1zM107 23h1v1h-1zM109 23h1v1h-1zM111 23h1v1h-1zM105 24h1v1h-1zM107 24h1v1h-1zM109 24h1v1h-1zM111 24h1v1h-1zM106 25h1v1h-1zM110 25h1v1h-1zM106 26h1v1h-1zM110 26h1v1h-1zM329 19h1v1h-1zM330 19h1v1h-1zM330 20h1v1h-1zM330 21h1v1h-1zM330 22h1v1h-1zM330 23h1v1h-1zM330 24h1v1h-1zM330 25h1v1h-1zM329 26h1v1h-1zM330 26h1v1h-1zM331 26h1v1h-1zM335 19h1v1h-1zM336 19h1v1h-1zM337 19h1v1h-1zM334 20h1v1h-1zM338 20h1v1h-1zM334 21h1v1h-1zM338 21h1v1h-1zM334 22h1v1h-1zM338 22h1v1h-1zM334 23h1v1h-1zM338 23h1v1h-1zM334 24h1v1h-1zM338 24h1v1h-1zM334 25h1v1h-1zM338 25h1v1h-1zM335 26h1v1h-1zM336 26h1v1h-1zM337 26h1v1h-1zM340 19h1v1h-1zM341 19h1v1h-1zM342 19h1v1h-1zM344 19h1v1h-1zM345 19h1v1h-1zM346 19h1v1h-1zM348 19h1v1h-1zM349 19h1v1h-1zM350 19h1v1h-1zM341 20h1v1h-1zM345 20h1v1h-1zM349 20h1v1h-1zM341 21h1v1h-1zM345 21h1v1h-1zM349 21h1v1h-1zM342 22h1v1h-1zM344 22h1v1h-1zM346 22h1v1h-1zM348 22h1v1h-1zM342 23h1v1h-1zM344 23h1v1h-1zM346 23h1v1h-1zM348 23h1v1h-1zM342 24h1v1h-1zM344 24h1v1h-1zM346 24h1v1h-1zM348 24h1v1h-1zM343 25h1v1h-1zM347 25h1v1h-1zM343 26h1v1h-1zM347 26h1v1h-1zM576 19h1v1h-1zM577 19h1v1h-1zM578 19h1v1h-1zM575 20h1v1h-1zM579 20h1v1h-1zM575 21h1v1h-1zM579 21h1v1h-1zM575 22h1v1h-1zM579 22h1v1h-1zM575 23h1v1h-1zM579 23h1v1h-1zM575 24h1v1h-1zM579 24h1v1h-1zM575 25h1v1h-1zM579 25h1v1h-1zM576 26h1v1h-1zM577 26h1v1h-1zM578 26h1v1h-1zM805 19h1v1h-1zM806 19h1v1h-1zM806 20h1v1h-1zM806 21h1v1h-1zM806 22h1v1h-1zM806 23h1v1h-1zM806 24h1v1h-1zM806 25h1v1h-1zM805 26h1v1h-1zM806 26h1v1h-1zM807 26h1v1h-1zM811 19h1v1h-1zM812 19h1v1h-1zM813 19h1v1h-1zM810 20h1v1h-1zM814 20h1v1h-1zM810 21h1v1h-1zM814 21h1v1h-1zM810 22h1v1h-1zM814 22h1v1h-1zM810 23h1v1h-1zM814 23h1v1h-1zM810 24h1v1h-1zM814 24h1v1h-1zM810 25h1v1h-1zM814 25h1v1h-1zM811 26h1v1h-1zM812 26h1v1h-1zM813 26h1v1h-1zM816 19h1v1h-1zM817 19h1v1h-1zM818 19h1v1h-1zM819 19h1v1h-1zM820 19h1v1h-1zM821 19h1v1h-1zM817 20h1v1h-1zM821 20h1v1h-1zM817 21h1v1h-1zM817 22h1v1h-1zM819 22h1v1h-1zM817 23h1v1h-1zM818 23h1v1h-1zM819 23h1v1h-1zM817 24h1v1h-1zM819 24h1v1h-1zM817 25h1v1h-1zM821 25h1v1h-1zM816 26h1v1h-1zM817 26h1v1h-1zM818 26h1v1h-1zM819 26h1v1h-1zM820 26h1v1h-1zM821 26h1v1h-1zM11 238h1v1h-1zM12 238h1v1h-1zM9 239h1v1h-1zM10 239h1v1h-1zM8 240h1v1h-1zM8 241h1v1h-1zM10 241h1v1h-1zM11 241h1v1h-1zM8 242h1v1h-1zM12 242h1v1h-1zM8 243h1v1h-1zM12 243h1v1h-1zM8 244h1v1h-1zM12 244h1v1h-1zM9 245h1v1h-1zM10 245h1v1h-1zM11 245h1v1h-1zM15 238h1v1h-1zM16 238h1v1h-1zM17 238h1v1h-1zM14 239h1v1h-1zM18 239h1v1h-1zM14 240h1v1h-1zM18 240h1v1h-1zM14 241h1v1h-1zM18 241h1v1h-1zM14 242h1v1h-1zM18 242h1v1h-1zM14 243h1v1h-1zM18 243h1v1h-1zM14 244h1v1h-1zM18 244h1v1h-1zM15 245h1v1h-1zM16 245h1v1h-1zM17 245h1v1h-1zM20 238h1v1h-1zM21 238h1v1h-1zM24 238h1v1h-1zM25 238h1v1h-1zM26 238h1v1h-1zM21 239h1v1h-1zM25 239h1v1h-1zM21 240h1v1h-1zM22 240h1v1h-1zM25 240h1v1h-1zM21 241h1v1h-1zM23 241h1v1h-1zM25 241h1v1h-1zM21 242h1v1h-1zM24 242h1v1h-1zM25 242h1v1h-1zM21 243h1v1h-1zM25 243h1v1h-1zM21 244h1v1h-1zM25 244h1v1h-1zM20 245h1v1h-1zM21 245h1v1h-1zM22 245h1v1h-1zM25 245h1v1h-1zM10 459h1v1h-1zM11 459h1v1h-1zM12 459h1v1h-1zM9 460h1v1h-1zM9 461h1v1h-1zM10 461h1v1h-1zM11 462h1v1h-1zM12 463h1v1h-1zM12 464h1v1h-1zM12 465h1v1h-1zM8 466h1v1h-1zM9 466h1v1h-1zM10 466h1v1h-1zM11 466h1v1h-1zM16 459h1v1h-1zM17 459h1v1h-1zM18 459h1v1h-1zM15 460h1v1h-1zM15 461h1v1h-1zM16 461h1v1h-1zM17 462h1v1h-1zM18 463h1v1h-1zM18 464h1v1h-1zM18 465h1v1h-1zM14 466h1v1h-1zM15 466h1v1h-1zM16 466h1v1h-1zM17 466h1v1h-1zM20 459h1v1h-1zM21 459h1v1h-1zM24 459h1v1h-1zM25 459h1v1h-1zM26 459h1v1h-1zM21 460h1v1h-1zM25 460h1v1h-1zM21 461h1v1h-1zM22 461h1v1h-1zM25 461h1v1h-1zM21 462h1v1h-1zM23 462h1v1h-1zM25 462h1v1h-1zM21 463h1v1h-1zM24 463h1v1h-1zM25 463h1v1h-1zM21 464h1v1h-1zM25 464h1v1h-1zM21 465h1v1h-1zM25 465h1v1h-1zM20 466h1v1h-1zM21 466h1v1h-1zM22 466h1v1h-1zM25 466h1v1h-1zM10 654h1v1h-1zM11 654h1v1h-1zM12 654h1v1h-1zM9 655h1v1h-1zM9 656h1v1h-1zM10 656h1v1h-1zM11 657h1v1h-1zM12 658h1v1h-1zM12 659h1v1h-1zM12 660h1v1h-1zM8 661h1v1h-1zM9 661h1v1h-1zM10 661h1v1h-1zM11 661h1v1h-1zM15 654h1v1h-1zM16 654h1v1h-1zM17 654h1v1h-1zM14 655h1v1h-1zM18 655h1v1h-1zM14 656h1v1h-1zM18 656h1v1h-1zM14 657h1v1h-1zM18 657h1v1h-1zM14 658h1v1h-1zM18 658h1v1h-1zM14 659h1v1h-1zM18 659h1v1h-1zM14 660h1v1h-1zM18 660h1v1h-1zM15 661h1v1h-1zM16 661h1v1h-1zM17 661h1v1h-1zM20 654h1v1h-1zM21 654h1v1h-1zM24 654h1v1h-1zM25 654h1v1h-1zM26 654h1v1h-1zM21 655h1v1h-1zM25 655h1v1h-1zM21 656h1v1h-1zM22 656h1v1h-1zM25 656h1v1h-1zM21 657h1v1h-1zM23 657h1v1h-1zM25 657h1v1h-1zM21 658h1v1h-1zM24 658h1v1h-1zM25 658h1v1h-1zM21 659h1v1h-1zM25 659h1v1h-1zM21 660h1v1h-1zM25 660h1v1h-1zM20 661h1v1h-1zM21 661h1v1h-1zM22 661h1v1h-1zM25 661h1v1h-1z"/></svg>
<div class="title">FRE 01.02.08 02:00 UTC  Bodenwettermeldungen :  Max.Böen (letzte Stunde) / kmh</div>
</body></html>
